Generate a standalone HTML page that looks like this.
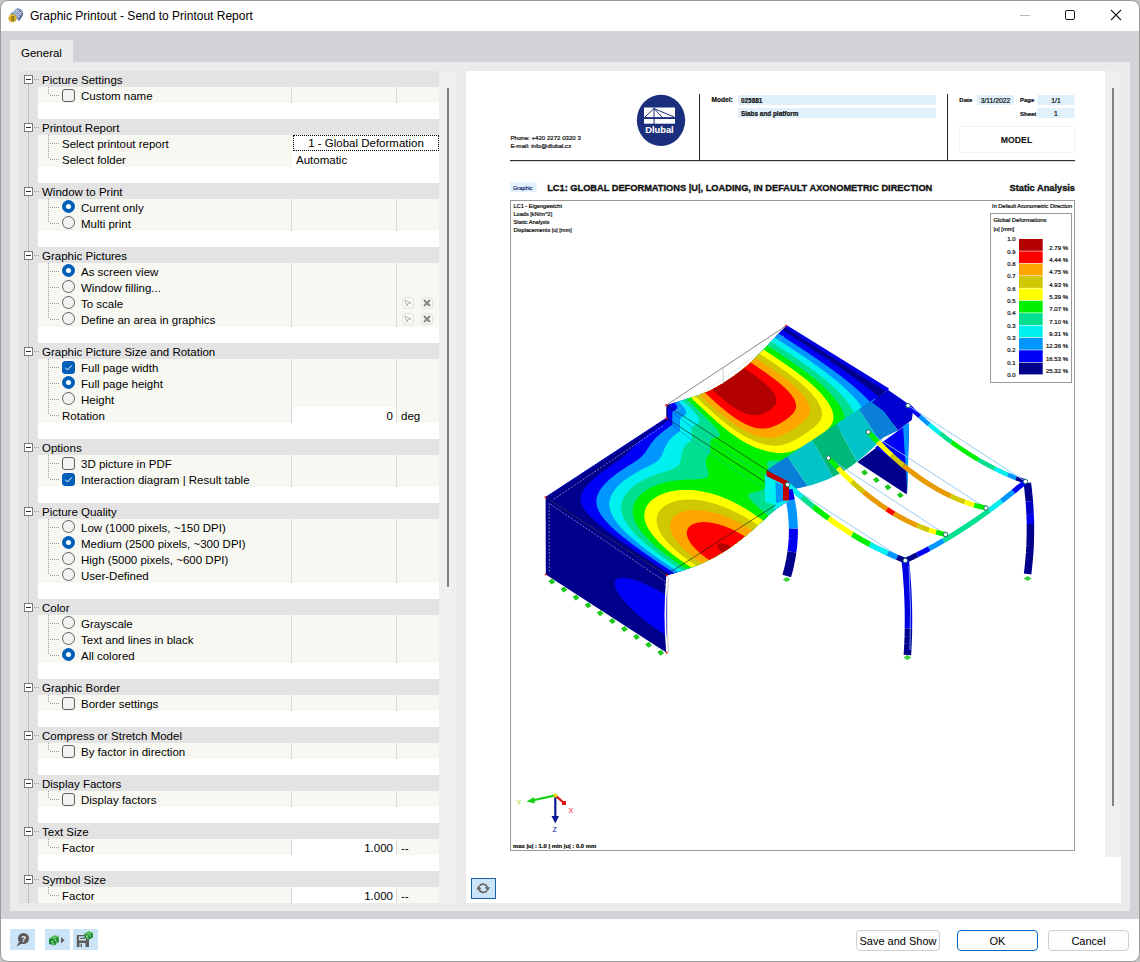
<!DOCTYPE html><html><head><meta charset="utf-8"><style>
*{box-sizing:border-box}
html,body{margin:0;padding:0}
body{width:1140px;height:962px;position:relative;overflow:hidden;background:#c4c4c4;font-family:"Liberation Sans", sans-serif;color:#000}
.a{position:absolute}
.t{position:absolute;white-space:pre;font-size:11.5px;line-height:16px}
.tt{padding-top:1px}
.dv{position:absolute;width:1px;background-image:linear-gradient(#a0a0a0 50%,transparent 50%);background-size:1px 2px}
.dh{position:absolute;height:1px;background-image:linear-gradient(90deg,#a0a0a0 50%,transparent 50%);background-size:2px 1px}
.box{position:absolute;width:9px;height:9px;border:1px solid #7a7a7a;background:#fff}
.box:after{content:"";position:absolute;left:1px;top:3px;width:5px;height:1px;background:#333}
.cb{position:absolute;width:13px;height:13px;border:1px solid #5e5e5e;border-radius:3px;background:#f3f3f3}
.cb.on{background:#005fb8;border-color:#005fb8}
.rd{position:absolute;width:13px;height:13px;border:1px solid #5e5e5e;border-radius:50%;background:#f3f3f3}
.rd.on{background:#005fb8;border-color:#005fb8}
.rd.on:after{content:"";position:absolute;left:3px;top:3px;width:5px;height:5px;border-radius:50%;background:#fff}
.doc{position:absolute;white-space:pre;line-height:1}
</style></head><body><div class="a" style="left:0;top:0;width:1140px;height:962px;border:1px solid #9c9c9c;border-radius:8px;background:#fff;overflow:hidden">
</div>
<div class="a" style="left:1px;top:31px;width:1138px;height:888px;background:#d2d2d7"></div>
<div class="a" style="left:10px;top:62px;width:1120px;height:849px;background:#ebebeb"></div>
<div class="a" style="left:10px;top:40px;width:63px;height:22px;background:#ebebeb"></div>
<div class="t" style="left:21px;top:45px;font-size:11.5px;line-height:16px">General</div>
<div class="t" style="left:30px;top:8px;font-size:12px;line-height:17px">Graphic Printout - Send to Printout Report</div>
<svg class="a" style="left:8px;top:7px" width="18" height="17" viewBox="0 0 18 17">
<path d="M2 7 L8 1.5 Q13 0.5 15 5 L10 13 Q8 9 2 7Z" fill="#7d8fb8"/>
<path d="M4 6 L9 2 M6 8 L11 3 M8 10 L13 5 M5 4 L12 11 M7 2.5 L13.5 8" stroke="#d8e4f8" stroke-width="0.8"/>
<path d="M15 5 Q16 8 11 14 L10 13Z" fill="#4a5c8a"/>
<circle cx="4.6" cy="11.3" r="3.8" fill="#e8c22c" stroke="#b8961a" stroke-width="0.6"/>
<text x="4.6" y="14" font-size="7" font-weight="bold" text-anchor="middle" fill="#6a5a10" font-family="Liberation Sans">6</text>
</svg>
<div class="a" style="left:1020px;top:15px;width:10px;height:1px;background:#b8b8b8"></div>
<div class="a" style="left:1065px;top:10px;width:10px;height:10px;border:1px solid #1a1a1a;border-radius:2px"></div>
<svg class="a" style="left:1110px;top:9px" width="12" height="12" viewBox="0 0 12 12"><path d="M1 1L11 11M11 1L1 11" stroke="#1a1a1a" stroke-width="1.1"/></svg>
<div class="a" style="left:19px;top:71px;width:420px;height:832px;overflow:hidden;background:#fff">
<div class="a" style="left:0;top:0;width:19px;height:832px;background:#e3e3e3"></div>
<div class="a" style="left:0;top:0px;width:420px;height:16px;background:#e3e3e3"></div>
<div class="t" style="left:23px;top:1px">Picture Settings</div>
<div class="a" style="left:19px;top:16px;width:401px;height:16px;background:#f8f8f3"></div>
<div class="cb" style="left:43px;top:18px"></div>
<div class="t" style="left:62px;top:17px">Custom name</div>
<div class="a" style="left:272px;top:16px;width:1px;height:16px;background:#d9d9d9"></div>
<div class="a" style="left:377px;top:16px;width:1px;height:16px;background:#d9d9d9"></div>
<div class="a" style="left:0;top:48px;width:420px;height:16px;background:#e3e3e3"></div>
<div class="t" style="left:23px;top:49px">Printout Report</div>
<div class="a" style="left:19px;top:64px;width:401px;height:16px;background:#f8f8f3"></div>
<div class="t" style="left:43px;top:65px">Select printout report</div>
<div class="a" style="left:273px;top:64px;width:147px;height:16px;background:#fff"></div>
<div class="a" style="left:274px;top:64px;width:146px;height:16px;border:1px dotted #000"></div>
<div class="t" style="left:274px;top:64px;width:146px;text-align:center">1 - Global Deformation</div>
<div class="a" style="left:19px;top:80px;width:401px;height:16px;background:#f8f8f3"></div>
<div class="t" style="left:43px;top:81px">Select folder</div>
<div class="a" style="left:273px;top:80px;width:147px;height:16px;background:#fff"></div>
<div class="t" style="left:277px;top:81px">Automatic</div>
<div class="a" style="left:0;top:112px;width:420px;height:16px;background:#e3e3e3"></div>
<div class="t" style="left:23px;top:113px">Window to Print</div>
<div class="a" style="left:19px;top:128px;width:401px;height:16px;background:#f8f8f3"></div>
<div class="rd on" style="left:43px;top:129px"></div>
<div class="t" style="left:62px;top:129px">Current only</div>
<div class="a" style="left:272px;top:128px;width:1px;height:16px;background:#d9d9d9"></div>
<div class="a" style="left:377px;top:128px;width:1px;height:16px;background:#d9d9d9"></div>
<div class="a" style="left:19px;top:144px;width:401px;height:16px;background:#f8f8f3"></div>
<div class="rd" style="left:43px;top:145px"></div>
<div class="t" style="left:62px;top:145px">Multi print</div>
<div class="a" style="left:272px;top:144px;width:1px;height:16px;background:#d9d9d9"></div>
<div class="a" style="left:377px;top:144px;width:1px;height:16px;background:#d9d9d9"></div>
<div class="a" style="left:0;top:176px;width:420px;height:16px;background:#e3e3e3"></div>
<div class="t" style="left:23px;top:177px">Graphic Pictures</div>
<div class="a" style="left:19px;top:192px;width:401px;height:16px;background:#f8f8f3"></div>
<div class="rd on" style="left:43px;top:193px"></div>
<div class="t" style="left:62px;top:193px">As screen view</div>
<div class="a" style="left:272px;top:192px;width:1px;height:16px;background:#d9d9d9"></div>
<div class="a" style="left:377px;top:192px;width:1px;height:16px;background:#d9d9d9"></div>
<div class="a" style="left:19px;top:208px;width:401px;height:16px;background:#f8f8f3"></div>
<div class="rd" style="left:43px;top:209px"></div>
<div class="t" style="left:62px;top:209px">Window filling...</div>
<div class="a" style="left:272px;top:208px;width:1px;height:16px;background:#d9d9d9"></div>
<div class="a" style="left:377px;top:208px;width:1px;height:16px;background:#d9d9d9"></div>
<div class="a" style="left:19px;top:224px;width:401px;height:16px;background:#f8f8f3"></div>
<div class="rd" style="left:43px;top:225px"></div>
<div class="t" style="left:62px;top:225px">To scale</div>
<div class="a" style="left:272px;top:224px;width:1px;height:16px;background:#d9d9d9"></div>
<div class="a" style="left:377px;top:224px;width:1px;height:16px;background:#d9d9d9"></div>
<div class="a" style="left:383px;top:226px;width:12px;height:12px;border:1px solid #e4e4e0;border-radius:3px"></div>
<svg class="a" style="left:384px;top:227px" width="10" height="10" viewBox="0 0 10 10"><path d="M2 2L8 5L5 5.5L4 8Z" fill="none" stroke="#a8a8a8" stroke-width="0.8"/></svg>
<div class="a" style="left:402px;top:226px;width:12px;height:12px;border:1px solid #e4e4e0;border-radius:3px"></div>
<svg class="a" style="left:403px;top:227px" width="10" height="10" viewBox="0 0 10 10"><path d="M2 2L8 8M8 2L2 8" stroke="#8a8a8a" stroke-width="2.2"/></svg>
<div class="a" style="left:19px;top:240px;width:401px;height:16px;background:#f8f8f3"></div>
<div class="rd" style="left:43px;top:241px"></div>
<div class="t" style="left:62px;top:241px">Define an area in graphics</div>
<div class="a" style="left:272px;top:240px;width:1px;height:16px;background:#d9d9d9"></div>
<div class="a" style="left:377px;top:240px;width:1px;height:16px;background:#d9d9d9"></div>
<div class="a" style="left:383px;top:242px;width:12px;height:12px;border:1px solid #e4e4e0;border-radius:3px"></div>
<svg class="a" style="left:384px;top:243px" width="10" height="10" viewBox="0 0 10 10"><path d="M2 2L8 5L5 5.5L4 8Z" fill="none" stroke="#a8a8a8" stroke-width="0.8"/></svg>
<div class="a" style="left:402px;top:242px;width:12px;height:12px;border:1px solid #e4e4e0;border-radius:3px"></div>
<svg class="a" style="left:403px;top:243px" width="10" height="10" viewBox="0 0 10 10"><path d="M2 2L8 8M8 2L2 8" stroke="#8a8a8a" stroke-width="2.2"/></svg>
<div class="a" style="left:0;top:272px;width:420px;height:16px;background:#e3e3e3"></div>
<div class="t" style="left:23px;top:273px">Graphic Picture Size and Rotation</div>
<div class="a" style="left:19px;top:288px;width:401px;height:16px;background:#f8f8f3"></div>
<div class="cb on" style="left:43px;top:290px"></div>
<svg class="a" style="left:43px;top:290px" width="13" height="13" viewBox="0 0 13 13"><path d="M3.3 6.8L5.5 9L9.8 4.4" fill="none" stroke="#fff" stroke-width="1"/></svg>
<div class="t" style="left:62px;top:289px">Full page width</div>
<div class="a" style="left:272px;top:288px;width:1px;height:16px;background:#d9d9d9"></div>
<div class="a" style="left:377px;top:288px;width:1px;height:16px;background:#d9d9d9"></div>
<div class="a" style="left:19px;top:304px;width:401px;height:16px;background:#f8f8f3"></div>
<div class="rd on" style="left:43px;top:305px"></div>
<div class="t" style="left:62px;top:305px">Full page height</div>
<div class="a" style="left:272px;top:304px;width:1px;height:16px;background:#d9d9d9"></div>
<div class="a" style="left:377px;top:304px;width:1px;height:16px;background:#d9d9d9"></div>
<div class="a" style="left:19px;top:320px;width:401px;height:16px;background:#f8f8f3"></div>
<div class="rd" style="left:43px;top:321px"></div>
<div class="t" style="left:62px;top:321px">Height</div>
<div class="a" style="left:272px;top:320px;width:1px;height:16px;background:#d9d9d9"></div>
<div class="a" style="left:377px;top:320px;width:1px;height:16px;background:#d9d9d9"></div>
<div class="a" style="left:19px;top:336px;width:401px;height:16px;background:#f8f8f3"></div>
<div class="t" style="left:43px;top:337px">Rotation</div>
<div class="a" style="left:272px;top:336px;width:1px;height:16px;background:#d9d9d9"></div>
<div class="a" style="left:377px;top:336px;width:1px;height:16px;background:#d9d9d9"></div>
<div class="a" style="left:273px;top:336px;width:104px;height:16px;background:#fff"></div>
<div class="t" style="left:273px;top:337px;width:101px;text-align:right">0</div>
<div class="t" style="left:382px;top:337px">deg</div>
<div class="a" style="left:0;top:368px;width:420px;height:16px;background:#e3e3e3"></div>
<div class="t" style="left:23px;top:369px">Options</div>
<div class="a" style="left:19px;top:384px;width:401px;height:16px;background:#f8f8f3"></div>
<div class="cb" style="left:43px;top:386px"></div>
<div class="t" style="left:62px;top:385px">3D picture in PDF</div>
<div class="a" style="left:272px;top:384px;width:1px;height:16px;background:#d9d9d9"></div>
<div class="a" style="left:377px;top:384px;width:1px;height:16px;background:#d9d9d9"></div>
<div class="a" style="left:19px;top:400px;width:401px;height:16px;background:#f8f8f3"></div>
<div class="cb on" style="left:43px;top:402px"></div>
<svg class="a" style="left:43px;top:402px" width="13" height="13" viewBox="0 0 13 13"><path d="M3.3 6.8L5.5 9L9.8 4.4" fill="none" stroke="#fff" stroke-width="1"/></svg>
<div class="t" style="left:62px;top:401px">Interaction diagram | Result table</div>
<div class="a" style="left:272px;top:400px;width:1px;height:16px;background:#d9d9d9"></div>
<div class="a" style="left:377px;top:400px;width:1px;height:16px;background:#d9d9d9"></div>
<div class="a" style="left:0;top:432px;width:420px;height:16px;background:#e3e3e3"></div>
<div class="t" style="left:23px;top:433px">Picture Quality</div>
<div class="a" style="left:19px;top:448px;width:401px;height:16px;background:#f8f8f3"></div>
<div class="rd" style="left:43px;top:449px"></div>
<div class="t" style="left:62px;top:449px">Low (1000 pixels, ~150 DPI)</div>
<div class="a" style="left:272px;top:448px;width:1px;height:16px;background:#d9d9d9"></div>
<div class="a" style="left:377px;top:448px;width:1px;height:16px;background:#d9d9d9"></div>
<div class="a" style="left:19px;top:464px;width:401px;height:16px;background:#f8f8f3"></div>
<div class="rd on" style="left:43px;top:465px"></div>
<div class="t" style="left:62px;top:465px">Medium (2500 pixels, ~300 DPI)</div>
<div class="a" style="left:272px;top:464px;width:1px;height:16px;background:#d9d9d9"></div>
<div class="a" style="left:377px;top:464px;width:1px;height:16px;background:#d9d9d9"></div>
<div class="a" style="left:19px;top:480px;width:401px;height:16px;background:#f8f8f3"></div>
<div class="rd" style="left:43px;top:481px"></div>
<div class="t" style="left:62px;top:481px">High (5000 pixels, ~600 DPI)</div>
<div class="a" style="left:272px;top:480px;width:1px;height:16px;background:#d9d9d9"></div>
<div class="a" style="left:377px;top:480px;width:1px;height:16px;background:#d9d9d9"></div>
<div class="a" style="left:19px;top:496px;width:401px;height:16px;background:#f8f8f3"></div>
<div class="rd" style="left:43px;top:497px"></div>
<div class="t" style="left:62px;top:497px">User-Defined</div>
<div class="a" style="left:272px;top:496px;width:1px;height:16px;background:#d9d9d9"></div>
<div class="a" style="left:377px;top:496px;width:1px;height:16px;background:#d9d9d9"></div>
<div class="a" style="left:0;top:528px;width:420px;height:16px;background:#e3e3e3"></div>
<div class="t" style="left:23px;top:529px">Color</div>
<div class="a" style="left:19px;top:544px;width:401px;height:16px;background:#f8f8f3"></div>
<div class="rd" style="left:43px;top:545px"></div>
<div class="t" style="left:62px;top:545px">Grayscale</div>
<div class="a" style="left:272px;top:544px;width:1px;height:16px;background:#d9d9d9"></div>
<div class="a" style="left:377px;top:544px;width:1px;height:16px;background:#d9d9d9"></div>
<div class="a" style="left:19px;top:560px;width:401px;height:16px;background:#f8f8f3"></div>
<div class="rd" style="left:43px;top:561px"></div>
<div class="t" style="left:62px;top:561px">Text and lines in black</div>
<div class="a" style="left:272px;top:560px;width:1px;height:16px;background:#d9d9d9"></div>
<div class="a" style="left:377px;top:560px;width:1px;height:16px;background:#d9d9d9"></div>
<div class="a" style="left:19px;top:576px;width:401px;height:16px;background:#f8f8f3"></div>
<div class="rd on" style="left:43px;top:577px"></div>
<div class="t" style="left:62px;top:577px">All colored</div>
<div class="a" style="left:272px;top:576px;width:1px;height:16px;background:#d9d9d9"></div>
<div class="a" style="left:377px;top:576px;width:1px;height:16px;background:#d9d9d9"></div>
<div class="a" style="left:0;top:608px;width:420px;height:16px;background:#e3e3e3"></div>
<div class="t" style="left:23px;top:609px">Graphic Border</div>
<div class="a" style="left:19px;top:624px;width:401px;height:16px;background:#f8f8f3"></div>
<div class="cb" style="left:43px;top:626px"></div>
<div class="t" style="left:62px;top:625px">Border settings</div>
<div class="a" style="left:272px;top:624px;width:1px;height:16px;background:#d9d9d9"></div>
<div class="a" style="left:377px;top:624px;width:1px;height:16px;background:#d9d9d9"></div>
<div class="a" style="left:0;top:656px;width:420px;height:16px;background:#e3e3e3"></div>
<div class="t" style="left:23px;top:657px">Compress or Stretch Model</div>
<div class="a" style="left:19px;top:672px;width:401px;height:16px;background:#f8f8f3"></div>
<div class="cb" style="left:43px;top:674px"></div>
<div class="t" style="left:62px;top:673px">By factor in direction</div>
<div class="a" style="left:272px;top:672px;width:1px;height:16px;background:#d9d9d9"></div>
<div class="a" style="left:377px;top:672px;width:1px;height:16px;background:#d9d9d9"></div>
<div class="a" style="left:0;top:704px;width:420px;height:16px;background:#e3e3e3"></div>
<div class="t" style="left:23px;top:705px">Display Factors</div>
<div class="a" style="left:19px;top:720px;width:401px;height:16px;background:#f8f8f3"></div>
<div class="cb" style="left:43px;top:722px"></div>
<div class="t" style="left:62px;top:721px">Display factors</div>
<div class="a" style="left:272px;top:720px;width:1px;height:16px;background:#d9d9d9"></div>
<div class="a" style="left:377px;top:720px;width:1px;height:16px;background:#d9d9d9"></div>
<div class="a" style="left:0;top:752px;width:420px;height:16px;background:#e3e3e3"></div>
<div class="t" style="left:23px;top:753px">Text Size</div>
<div class="a" style="left:19px;top:768px;width:401px;height:16px;background:#f8f8f3"></div>
<div class="t" style="left:43px;top:769px">Factor</div>
<div class="a" style="left:272px;top:768px;width:1px;height:16px;background:#d9d9d9"></div>
<div class="a" style="left:377px;top:768px;width:1px;height:16px;background:#d9d9d9"></div>
<div class="a" style="left:273px;top:768px;width:104px;height:16px;background:#fff"></div>
<div class="t" style="left:273px;top:769px;width:101px;text-align:right">1.000</div>
<div class="t" style="left:382px;top:769px">--</div>
<div class="a" style="left:0;top:800px;width:420px;height:16px;background:#e3e3e3"></div>
<div class="t" style="left:23px;top:801px">Symbol Size</div>
<div class="a" style="left:19px;top:816px;width:401px;height:16px;background:#f8f8f3"></div>
<div class="t" style="left:43px;top:817px">Factor</div>
<div class="a" style="left:272px;top:816px;width:1px;height:16px;background:#d9d9d9"></div>
<div class="a" style="left:377px;top:816px;width:1px;height:16px;background:#d9d9d9"></div>
<div class="a" style="left:273px;top:816px;width:104px;height:16px;background:#fff"></div>
<div class="t" style="left:273px;top:817px;width:101px;text-align:right">1.000</div>
<div class="t" style="left:382px;top:817px">--</div>
<div class="dv" style="left:9px;top:13px;height:819px"></div>
<div class="box" style="left:5px;top:4px"></div>
<div class="dh" style="left:15px;top:8px;width:6px"></div>
<div class="dv" style="left:29px;top:16px;height:8px"></div>
<div class="dh" style="left:31px;top:24px;width:9px"></div>
<div class="box" style="left:5px;top:52px"></div>
<div class="dh" style="left:15px;top:56px;width:6px"></div>
<div class="dv" style="left:29px;top:64px;height:24px"></div>
<div class="dh" style="left:31px;top:72px;width:9px"></div>
<div class="dh" style="left:31px;top:88px;width:9px"></div>
<div class="box" style="left:5px;top:116px"></div>
<div class="dh" style="left:15px;top:120px;width:6px"></div>
<div class="dv" style="left:29px;top:128px;height:24px"></div>
<div class="dh" style="left:31px;top:136px;width:9px"></div>
<div class="dh" style="left:31px;top:152px;width:9px"></div>
<div class="box" style="left:5px;top:180px"></div>
<div class="dh" style="left:15px;top:184px;width:6px"></div>
<div class="dv" style="left:29px;top:192px;height:56px"></div>
<div class="dh" style="left:31px;top:200px;width:9px"></div>
<div class="dh" style="left:31px;top:216px;width:9px"></div>
<div class="dh" style="left:31px;top:232px;width:9px"></div>
<div class="dh" style="left:31px;top:248px;width:9px"></div>
<div class="box" style="left:5px;top:276px"></div>
<div class="dh" style="left:15px;top:280px;width:6px"></div>
<div class="dv" style="left:29px;top:288px;height:56px"></div>
<div class="dh" style="left:31px;top:296px;width:9px"></div>
<div class="dh" style="left:31px;top:312px;width:9px"></div>
<div class="dh" style="left:31px;top:328px;width:9px"></div>
<div class="dh" style="left:31px;top:344px;width:9px"></div>
<div class="box" style="left:5px;top:372px"></div>
<div class="dh" style="left:15px;top:376px;width:6px"></div>
<div class="dv" style="left:29px;top:384px;height:24px"></div>
<div class="dh" style="left:31px;top:392px;width:9px"></div>
<div class="dh" style="left:31px;top:408px;width:9px"></div>
<div class="box" style="left:5px;top:436px"></div>
<div class="dh" style="left:15px;top:440px;width:6px"></div>
<div class="dv" style="left:29px;top:448px;height:56px"></div>
<div class="dh" style="left:31px;top:456px;width:9px"></div>
<div class="dh" style="left:31px;top:472px;width:9px"></div>
<div class="dh" style="left:31px;top:488px;width:9px"></div>
<div class="dh" style="left:31px;top:504px;width:9px"></div>
<div class="box" style="left:5px;top:532px"></div>
<div class="dh" style="left:15px;top:536px;width:6px"></div>
<div class="dv" style="left:29px;top:544px;height:40px"></div>
<div class="dh" style="left:31px;top:552px;width:9px"></div>
<div class="dh" style="left:31px;top:568px;width:9px"></div>
<div class="dh" style="left:31px;top:584px;width:9px"></div>
<div class="box" style="left:5px;top:612px"></div>
<div class="dh" style="left:15px;top:616px;width:6px"></div>
<div class="dv" style="left:29px;top:624px;height:8px"></div>
<div class="dh" style="left:31px;top:632px;width:9px"></div>
<div class="box" style="left:5px;top:660px"></div>
<div class="dh" style="left:15px;top:664px;width:6px"></div>
<div class="dv" style="left:29px;top:672px;height:8px"></div>
<div class="dh" style="left:31px;top:680px;width:9px"></div>
<div class="box" style="left:5px;top:708px"></div>
<div class="dh" style="left:15px;top:712px;width:6px"></div>
<div class="dv" style="left:29px;top:720px;height:8px"></div>
<div class="dh" style="left:31px;top:728px;width:9px"></div>
<div class="box" style="left:5px;top:756px"></div>
<div class="dh" style="left:15px;top:760px;width:6px"></div>
<div class="dv" style="left:29px;top:768px;height:8px"></div>
<div class="dh" style="left:31px;top:776px;width:9px"></div>
<div class="box" style="left:5px;top:804px"></div>
<div class="dh" style="left:15px;top:808px;width:6px"></div>
<div class="dv" style="left:29px;top:816px;height:8px"></div>
<div class="dh" style="left:31px;top:824px;width:9px"></div>
</div>
<div class="a" style="left:439px;top:71px;width:17px;height:832px;background:#f0f0f0"></div>
<div class="a" style="left:447px;top:88px;width:2px;height:499px;background:#828282"></div>
<div class="a" style="left:466px;top:71px;width:655px;height:832px;background:#fff"></div>
<div class="a" style="left:1105px;top:71px;width:16px;height:786px;background:#efefef"></div>
<div class="a" style="left:1112px;top:88px;width:2px;height:718px;background:#828282"></div>
<div class="a" style="left:471px;top:878px;width:25px;height:21px;background:#cce4f7;border:1px solid #1c5ea8"></div>
<svg class="a" style="left:476px;top:881px" width="15" height="15" viewBox="0 0 15 15"><path d="M3.6 4.6A4.6 4.6 0 0 1 11.4 6.4" fill="none" stroke="#666" stroke-width="1.7"/><path d="M8.9 6.2L14.2 6.2L11.6 10.2Z" fill="#666"/><path d="M10.8 9.8A4.6 4.6 0 0 1 2.8 7.8" fill="none" stroke="#666" stroke-width="1.7"/><path d="M0.2 8.3L5.4 8.3L2.8 4.3Z" fill="#666"/></svg>
<svg class="a" style="left:0;top:0" width="1140" height="962" viewBox="0 0 1140 962" font-family="Liberation Sans">
<text x="510.5" y="140" font-size="6.1" font-weight="400" fill="#111" stroke="#111" stroke-width="0.22" text-anchor="start" letter-spacing="0" >Phone: +420 2272 0320 3</text>
<text x="510.5" y="148.3" font-size="6.1" font-weight="400" fill="#111" stroke="#111" stroke-width="0.22" text-anchor="start" letter-spacing="0" >E-mail: info@dlubal.cz</text>
<ellipse cx="661" cy="120.3" rx="24.2" ry="25.6" fill="#1b2f7d"/>
<rect x="644" y="107.5" width="31" height="9.6" fill="#fff"/>
<rect x="644" y="119" width="31" height="4.7" fill="#fff"/>
<path d="M654 107.5V124M645 117L654 108.5L662 117M654 108.5L674 117" stroke="#1b2f7d" stroke-width="1" fill="none"/>
<text x="659.5" y="133.3" font-size="9.3" font-weight="700" fill="#fff" stroke="#fff" stroke-width="0.1" text-anchor="middle" letter-spacing="0" >Dlubal</text>
<rect x="699" y="94" width="1" height="66" fill="#222"/>
<rect x="947" y="94" width="1" height="66" fill="#222"/>
<rect x="510" y="160" width="565" height="1.2" fill="#333"/>
<text x="711.5" y="102.4" font-size="6.6" font-weight="700" fill="#111" stroke="#111" stroke-width="0.22" text-anchor="start" letter-spacing="0" >Model:</text>
<rect x="738" y="95" width="198" height="10" fill="#dff0fb"/>
<rect x="738" y="108" width="198" height="10" fill="#dff0fb"/>
<text x="741" y="102.6" font-size="6.4" font-weight="700" fill="#111" stroke="#111" stroke-width="0.22" text-anchor="start" letter-spacing="0" >025881</text>
<text x="741" y="115.6" font-size="6.4" font-weight="700" fill="#111" stroke="#111" stroke-width="0.22" text-anchor="start" letter-spacing="0" >Slabs and platform</text>
<text x="959.3" y="102.4" font-size="6.0" font-weight="700" fill="#111" stroke="#111" stroke-width="0.22" text-anchor="start" letter-spacing="0" >Date</text>
<rect x="977" y="95" width="37" height="10" fill="#dff0fb"/>
<text x="995.5" y="102.6" font-size="6.8" font-weight="400" fill="#111" stroke="#111" stroke-width="0.22" text-anchor="middle" letter-spacing="0" >3/11/2022</text>
<text x="1020" y="102.4" font-size="6.0" font-weight="700" fill="#111" stroke="#111" stroke-width="0.22" text-anchor="start" letter-spacing="0" >Page</text>
<rect x="1037.4" y="95" width="37" height="10" fill="#dff0fb"/>
<text x="1056" y="102.6" font-size="6.8" font-weight="400" fill="#111" stroke="#111" stroke-width="0.22" text-anchor="middle" letter-spacing="0" >1/1</text>
<text x="1020" y="115.6" font-size="6.0" font-weight="700" fill="#111" stroke="#111" stroke-width="0.22" text-anchor="start" letter-spacing="0" >Sheet</text>
<rect x="1037.4" y="108" width="37" height="10" fill="#dff0fb"/>
<text x="1056" y="115.6" font-size="6.8" font-weight="400" fill="#111" stroke="#111" stroke-width="0.22" text-anchor="middle" letter-spacing="0" >1</text>
<rect x="959.5" y="126.5" width="115" height="26" fill="none" stroke="#f0f5fa" stroke-width="1"/>
<text x="1016.5" y="143.2" font-size="8.7" font-weight="700" fill="#111" stroke="#111" stroke-width="0.1" text-anchor="middle" letter-spacing="0" >MODEL</text>
<rect x="510" y="182.5" width="26.5" height="9.5" fill="#e3f1fb"/>
<text x="513" y="189.6" font-size="5.6" font-weight="400" fill="#1b2f7d" stroke="#1b2f7d" stroke-width="0.22" text-anchor="start" letter-spacing="0" >Graphic</text>
<text x="547.2" y="191.3" font-size="9.25" font-weight="700" fill="#111" stroke="#111" stroke-width="0.1" text-anchor="start" letter-spacing="0" style="stroke-width:0.35">LC1: GLOBAL DEFORMATIONS |U|, LOADING, IN DEFAULT AXONOMETRIC DIRECTION</text>
<text x="1075" y="191.3" font-size="9.25" font-weight="700" fill="#111" stroke="#111" stroke-width="0.1" text-anchor="end" letter-spacing="0" style="stroke-width:0.35">Static Analysis</text>
<rect x="510.5" y="200.5" width="564" height="650" fill="none" stroke="#9a9a9a" stroke-width="1"/>
<text x="513.5" y="207.8" font-size="5.6" font-weight="400" fill="#111" stroke="#111" stroke-width="0.22" text-anchor="start" letter-spacing="0" >LC1 - Eigengewicht</text>
<text x="513.5" y="215.8" font-size="5.6" font-weight="400" fill="#111" stroke="#111" stroke-width="0.22" text-anchor="start" letter-spacing="0" >Loads [kN/m^2]</text>
<text x="513.5" y="223.8" font-size="5.6" font-weight="400" fill="#111" stroke="#111" stroke-width="0.22" text-anchor="start" letter-spacing="0" >Static Analysis</text>
<text x="513.5" y="231.8" font-size="5.6" font-weight="400" fill="#111" stroke="#111" stroke-width="0.22" text-anchor="start" letter-spacing="0" >Displacements |u| [mm]</text>
<text x="1072" y="208.3" font-size="5.6" font-weight="400" fill="#111" stroke="#111" stroke-width="0.22" text-anchor="end" letter-spacing="0" >In Default Axonometric Direction</text>
<rect x="990.5" y="213.5" width="81" height="169" fill="none" stroke="#9a9a9a" stroke-width="1"/>
<text x="993.5" y="222" font-size="5.8" font-weight="400" fill="#111" stroke="#111" stroke-width="0.22" text-anchor="start" letter-spacing="0" >Global Deformations</text>
<text x="993.5" y="230.5" font-size="5.8" font-weight="400" fill="#111" stroke="#111" stroke-width="0.22" text-anchor="start" letter-spacing="0" >|u| [mm]</text>
<rect x="1019" y="239.00" width="23.7" height="11.76" fill="#b30000"/>
<text x="1068" y="249.5818181818182" font-size="6.0" font-weight="400" fill="#111" stroke="#111" stroke-width="0.22" text-anchor="end" letter-spacing="0" >2.79 %</text>
<rect x="1019" y="251.36" width="23.7" height="11.76" fill="#ff0000"/>
<text x="1068" y="261.94545454545454" font-size="6.0" font-weight="400" fill="#111" stroke="#111" stroke-width="0.22" text-anchor="end" letter-spacing="0" >4.44 %</text>
<rect x="1019" y="263.73" width="23.7" height="11.76" fill="#ffa500"/>
<text x="1068" y="274.3090909090909" font-size="6.0" font-weight="400" fill="#111" stroke="#111" stroke-width="0.22" text-anchor="end" letter-spacing="0" >4.75 %</text>
<rect x="1019" y="276.09" width="23.7" height="11.76" fill="#d0c800"/>
<text x="1068" y="286.6727272727273" font-size="6.0" font-weight="400" fill="#111" stroke="#111" stroke-width="0.22" text-anchor="end" letter-spacing="0" >4.93 %</text>
<rect x="1019" y="288.45" width="23.7" height="11.76" fill="#ffff00"/>
<text x="1068" y="299.0363636363636" font-size="6.0" font-weight="400" fill="#111" stroke="#111" stroke-width="0.22" text-anchor="end" letter-spacing="0" >5.39 %</text>
<rect x="1019" y="300.82" width="23.7" height="11.76" fill="#00f000"/>
<text x="1068" y="311.4" font-size="6.0" font-weight="400" fill="#111" stroke="#111" stroke-width="0.22" text-anchor="end" letter-spacing="0" >7.07 %</text>
<rect x="1019" y="313.18" width="23.7" height="11.76" fill="#00e090"/>
<text x="1068" y="323.76363636363635" font-size="6.0" font-weight="400" fill="#111" stroke="#111" stroke-width="0.22" text-anchor="end" letter-spacing="0" >7.10 %</text>
<rect x="1019" y="325.55" width="23.7" height="11.76" fill="#00f0f0"/>
<text x="1068" y="336.1272727272727" font-size="6.0" font-weight="400" fill="#111" stroke="#111" stroke-width="0.22" text-anchor="end" letter-spacing="0" >9.31 %</text>
<rect x="1019" y="337.91" width="23.7" height="11.76" fill="#0096ff"/>
<text x="1068" y="348.49090909090904" font-size="6.0" font-weight="400" fill="#111" stroke="#111" stroke-width="0.22" text-anchor="end" letter-spacing="0" >12.36 %</text>
<rect x="1019" y="350.27" width="23.7" height="11.76" fill="#0000f5"/>
<text x="1068" y="360.8545454545454" font-size="6.0" font-weight="400" fill="#111" stroke="#111" stroke-width="0.22" text-anchor="end" letter-spacing="0" >16.53 %</text>
<rect x="1019" y="362.64" width="23.7" height="11.76" fill="#00008c"/>
<text x="1068" y="373.2181818181818" font-size="6.0" font-weight="400" fill="#111" stroke="#111" stroke-width="0.22" text-anchor="end" letter-spacing="0" >25.32 %</text>
<text x="1015.5" y="241.2" font-size="5.9" font-weight="400" fill="#111" stroke="#111" stroke-width="0.22" text-anchor="end" letter-spacing="0" >1.0</text>
<text x="1015.5" y="253.56363636363636" font-size="5.9" font-weight="400" fill="#111" stroke="#111" stroke-width="0.22" text-anchor="end" letter-spacing="0" >0.9</text>
<text x="1015.5" y="265.92727272727274" font-size="5.9" font-weight="400" fill="#111" stroke="#111" stroke-width="0.22" text-anchor="end" letter-spacing="0" >0.8</text>
<text x="1015.5" y="278.2909090909091" font-size="5.9" font-weight="400" fill="#111" stroke="#111" stroke-width="0.22" text-anchor="end" letter-spacing="0" >0.7</text>
<text x="1015.5" y="290.6545454545454" font-size="5.9" font-weight="400" fill="#111" stroke="#111" stroke-width="0.22" text-anchor="end" letter-spacing="0" >0.6</text>
<text x="1015.5" y="303.0181818181818" font-size="5.9" font-weight="400" fill="#111" stroke="#111" stroke-width="0.22" text-anchor="end" letter-spacing="0" >0.5</text>
<text x="1015.5" y="315.3818181818182" font-size="5.9" font-weight="400" fill="#111" stroke="#111" stroke-width="0.22" text-anchor="end" letter-spacing="0" >0.4</text>
<text x="1015.5" y="327.74545454545455" font-size="5.9" font-weight="400" fill="#111" stroke="#111" stroke-width="0.22" text-anchor="end" letter-spacing="0" >0.3</text>
<text x="1015.5" y="340.10909090909087" font-size="5.9" font-weight="400" fill="#111" stroke="#111" stroke-width="0.22" text-anchor="end" letter-spacing="0" >0.3</text>
<text x="1015.5" y="352.47272727272724" font-size="5.9" font-weight="400" fill="#111" stroke="#111" stroke-width="0.22" text-anchor="end" letter-spacing="0" >0.2</text>
<text x="1015.5" y="364.8363636363636" font-size="5.9" font-weight="400" fill="#111" stroke="#111" stroke-width="0.22" text-anchor="end" letter-spacing="0" >0.1</text>
<text x="1015.5" y="377.2" font-size="5.9" font-weight="400" fill="#111" stroke="#111" stroke-width="0.22" text-anchor="end" letter-spacing="0" >0.0</text>
<path d="M555.3 795.4L532 800.5" stroke="#16d016" stroke-width="2.2"/><path d="M526.5 801.5L534 797L535 803.5Z" fill="#16d016"/>
<path d="M555.3 795.4L564 803" stroke="#e01010" stroke-width="2.2"/><rect x="562" y="801" width="4" height="4" fill="#e01010"/>
<path d="M555.3 795.4V817" stroke="#0a1a90" stroke-width="2.2"/><path d="M551.5 816L559 816L555.3 823.5Z" fill="#0a1a90"/>
<circle cx="555.3" cy="795.4" r="2" fill="#e8d800"/>
<text x="516.5" y="804.5" font-size="7" font-weight="400" fill="#b8d820" stroke="#b8d820" stroke-width="0.1" text-anchor="start" letter-spacing="0" >Y</text>
<text x="568.5" y="812.5" font-size="7" font-weight="400" fill="#ff3050" stroke="#ff3050" stroke-width="0.1" text-anchor="start" letter-spacing="0" >X</text>
<text x="552.5" y="832" font-size="7" font-weight="400" fill="#0a1a90" stroke="#0a1a90" stroke-width="0.1" text-anchor="start" letter-spacing="0" >Z</text>
<text x="513" y="847.5" font-size="5.9" font-weight="700" fill="#111" stroke="#111" stroke-width="0.22" text-anchor="start" letter-spacing="0" >max |u| : 1.0 | min |u| : 0.0 mm</text>
<path d="M666.3 405.2 L667.3 404.9 L668.3 404.6 L669.3 404.3 L670.3 404.0 L671.3 403.7 L672.3 403.4 L673.3 403.1 L674.3 402.8 L675.3 402.5 L676.3 402.2 L677.3 401.9 L678.3 401.5 L679.3 401.2 L680.3 400.9 L681.3 400.6 L682.3 400.3 L683.3 400.0 L684.3 399.7 L685.3 399.4 L686.3 399.1 L687.3 398.8 L688.3 398.5 L689.3 398.2 L690.3 397.8 L691.3 397.5 L692.3 397.2 L693.3 396.9 L694.3 396.5 L695.3 396.2 L696.2 395.9 L697.2 395.5 L698.2 395.2 L699.2 394.8 L700.2 394.5 L701.2 394.1 L702.2 393.7 L703.2 393.4 L704.2 393.0 L705.2 392.6 L706.2 392.2 L707.2 391.7 L708.2 391.3 L709.2 390.8 L710.2 390.4 L711.2 389.9 L712.2 389.4 L713.2 388.9 L714.2 388.3 L715.2 387.8 L716.2 387.2 L717.2 386.7 L718.2 386.1 L719.2 385.5 L720.2 384.9 L721.2 384.3 L722.2 383.7 L723.2 383.1 L724.2 382.4 L725.2 381.8 L726.2 381.2 L727.2 380.5 L728.2 379.8 L729.2 379.2 L730.2 378.5 L731.2 377.8 L732.2 377.2 L733.2 376.5 L734.2 375.8 L735.2 375.1 L736.2 374.3 L737.2 373.6 L738.2 372.9 L739.2 372.1 L740.2 371.4 L741.2 370.6 L742.2 369.8 L743.2 369.0 L744.2 368.1 L745.2 367.3 L746.2 366.4 L747.2 365.6 L748.2 364.7 L749.2 363.8 L750.2 362.8 L751.2 361.9 L752.2 360.9 L753.2 360.0 L754.2 359.0 L755.2 358.0 L756.1 357.0 L757.1 356.0 L758.1 355.0 L759.1 354.0 L760.1 353.0 L761.1 351.9 L762.1 350.9 L763.1 349.9 L764.1 348.9 L765.1 347.8 L766.1 346.8 L767.1 345.7 L768.1 344.7 L769.1 343.6 L770.1 342.6 L771.1 341.5 L772.1 340.5 L773.1 339.5 L774.1 338.4 L775.1 337.4 L776.1 336.3 L777.1 335.3 L778.1 334.2 L779.1 333.2 L780.1 332.1 L781.1 331.1 L782.1 330.0 L783.1 329.0 L784.1 327.9 L785.1 326.8 L786.1 325.8 L786.1 325.8 L787.4 326.6 L788.6 327.4 L789.9 328.2 L791.1 329.0 L792.4 329.9 L793.6 330.7 L794.9 331.5 L796.2 332.3 L797.4 333.1 L798.7 333.9 L799.9 334.7 L801.2 335.5 L802.4 336.3 L803.7 337.2 L804.9 338.0 L806.2 338.8 L807.5 339.6 L808.7 340.4 L810.0 341.2 L811.2 342.0 L812.5 342.8 L813.7 343.6 L815.0 344.5 L816.3 345.3 L817.5 346.1 L818.8 346.9 L820.0 347.7 L821.3 348.5 L822.5 349.3 L823.8 350.1 L825.0 351.0 L826.3 351.8 L827.6 352.6 L828.8 353.4 L830.1 354.2 L831.3 355.0 L832.6 355.8 L833.8 356.6 L835.1 357.4 L836.4 358.3 L837.6 359.1 L838.9 359.9 L840.1 360.7 L841.4 361.5 L842.6 362.3 L843.9 363.1 L845.2 363.9 L846.4 364.7 L847.7 365.6 L848.9 366.4 L850.2 367.2 L851.4 368.0 L852.7 368.8 L853.9 369.6 L855.2 370.4 L856.5 371.2 L857.7 372.0 L859.0 372.9 L860.2 373.7 L861.5 374.5 L862.7 375.3 L864.0 376.1 L865.3 376.9 L866.5 377.7 L867.8 378.5 L869.0 379.3 L870.3 380.2 L871.5 381.0 L872.8 381.8 L874.0 382.6 L875.3 383.4 L876.6 384.2 L877.8 385.0 L879.1 385.8 L880.3 386.6 L881.6 387.5 L882.8 388.3 L884.1 389.1 L885.4 389.9 L886.6 390.7 L886.6 390.7 L885.6 391.6 L884.6 392.4 L883.6 393.3 L882.6 394.1 L881.6 395.0 L880.6 395.8 L879.6 396.7 L878.6 397.5 L877.6 398.4 L876.6 399.2 L875.6 400.1 L874.6 400.9 L873.6 401.8 L872.6 402.6 L871.6 403.5 L870.6 404.4 L869.6 405.2 L868.6 406.1 L867.6 406.9 L866.6 407.8 L865.6 408.6 L864.6 409.4 L863.7 410.3 L862.7 411.1 L861.7 412.0 L860.7 412.8 L859.7 413.7 L858.7 414.5 L857.7 415.3 L856.7 416.2 L855.7 417.0 L854.7 417.8 L853.7 418.6 L852.7 419.4 L851.7 420.2 L850.7 421.0 L849.7 421.8 L848.7 422.6 L847.7 423.4 L846.7 424.2 L845.7 424.9 L844.7 425.7 L843.7 426.4 L842.7 427.1 L841.7 427.9 L840.7 428.6 L839.7 429.3 L838.7 430.0 L837.7 430.7 L836.7 431.4 L835.7 432.1 L834.7 432.8 L833.7 433.5 L832.7 434.2 L831.7 434.8 L830.7 435.5 L829.7 436.2 L828.7 436.9 L827.7 437.5 L826.7 438.2 L825.7 438.9 L824.7 439.5 L823.7 440.2 L822.7 440.9 L821.7 441.5 L820.7 442.2 L819.7 442.9 L818.7 443.5 L817.7 444.2 L816.7 444.8 L815.7 445.5 L814.7 446.2 L813.7 446.8 L812.7 447.5 L811.7 448.1 L810.7 448.8 L809.7 449.4 L808.7 450.1 L807.7 450.7 L806.7 451.4 L805.7 452.0 L804.7 452.7 L803.8 453.3 L802.8 454.0 L801.8 454.6 L800.8 455.2 L799.8 455.9 L798.8 456.5 L797.8 457.1 L796.8 457.7 L795.8 458.3 L794.8 458.9 L793.8 459.5 L792.8 460.1 L791.8 460.7 L790.8 461.3 L789.8 461.9 L788.8 462.4 L787.8 463.0 L786.8 463.6 L785.8 464.2 L784.8 464.8 L783.8 465.4 L782.8 466.0 L781.8 466.7 L780.8 467.4 L779.8 468.0 L778.8 468.7 L777.8 469.5 L776.8 470.2 L775.8 470.9 L774.8 471.7 L773.8 472.4 L772.8 473.2 L771.8 473.9 L770.8 474.6 L769.8 475.3 L768.8 476.0 L767.8 476.7 L766.8 477.4 L766.8 477.4 L765.6 476.6 L764.3 475.9 L763.0 475.1 L761.8 474.4 L760.5 473.6 L759.3 472.9 L758.0 472.1 L756.8 471.4 L755.5 470.6 L754.2 469.8 L753.0 469.1 L751.7 468.3 L750.5 467.5 L749.2 466.7 L748.0 465.9 L746.7 465.2 L745.5 464.4 L744.2 463.6 L742.9 462.8 L741.7 462.0 L740.4 461.2 L739.2 460.4 L737.9 459.5 L736.7 458.7 L735.4 457.9 L734.1 457.1 L732.9 456.3 L731.6 455.4 L730.4 454.6 L729.1 453.8 L727.9 452.9 L726.6 452.1 L725.4 451.3 L724.1 450.4 L722.8 449.6 L721.6 448.7 L720.3 447.9 L719.1 447.0 L717.8 446.1 L716.6 445.3 L715.3 444.4 L714.0 443.5 L712.8 442.7 L711.5 441.8 L710.3 440.9 L709.0 440.0 L707.8 439.1 L706.5 438.2 L705.2 437.3 L704.0 436.4 L702.7 435.5 L701.5 434.6 L700.2 433.7 L699.0 432.8 L697.7 431.9 L696.5 431.0 L695.2 430.0 L693.9 429.1 L692.7 428.2 L691.4 427.2 L690.2 426.3 L688.9 425.3 L687.7 424.4 L686.4 423.4 L685.1 422.5 L683.9 421.5 L682.6 420.5 L681.4 419.5 L680.1 418.5 L678.9 417.5 L677.6 416.5 L676.4 415.4 L675.1 414.4 L673.8 413.3 L672.6 412.2 L671.3 411.1 L670.1 409.9 L668.8 408.7 L667.6 407.3 L666.3 405.2Z" fill="#00008c" />
<path d="M670.5 405.4L670.4 404.1L670.4 404.0L671.3 403.7L672.3 403.4L673.3 403.1L674.3 402.8L675.3 402.5L676.3 402.2L677.3 401.9L678.3 401.5L679.3 401.2L680.3 400.9L681.3 400.6L682.3 400.3L683.3 400.0L684.3 399.7L685.3 399.4L686.3 399.1L687.3 398.8L688.3 398.5L689.3 398.2L690.3 397.8L691.3 397.5L692.3 397.2L693.3 396.9L694.3 396.5L695.3 396.2L696.2 395.9L697.2 395.5L698.2 395.2L699.2 394.8L700.2 394.5L701.2 394.1L702.2 393.7L703.2 393.4L704.2 393.0L705.2 392.6L706.2 392.2L707.2 391.7L708.2 391.3L709.2 390.8L710.2 390.4L711.2 389.9L712.2 389.4L713.2 388.9L714.2 388.3L715.2 387.8L716.2 387.2L717.2 386.7L718.2 386.1L719.2 385.5L720.2 384.9L721.2 384.3L722.2 383.7L723.2 383.1L724.2 382.4L725.2 381.8L726.2 381.2L727.2 380.5L728.2 379.8L729.2 379.2L730.2 378.5L731.2 377.8L732.2 377.2L733.2 376.5L734.2 375.8L735.2 375.1L736.2 374.3L737.2 373.6L738.2 372.9L739.2 372.1L740.2 371.4L741.2 370.6L742.2 369.8L743.2 369.0L744.2 368.1L745.2 367.3L746.2 366.4L747.2 365.6L748.2 364.7L749.2 363.8L750.2 362.8L751.2 361.9L752.2 360.9L753.2 360.0L754.2 359.0L755.2 358.0L756.1 357.0L757.1 356.0L758.1 355.0L759.1 354.0L760.1 353.0L761.1 351.9L762.1 350.9L763.1 349.9L764.1 348.9L765.1 347.8L766.1 346.8L767.1 345.7L768.1 344.7L769.1 343.6L770.1 342.6L771.1 341.5L772.1 340.5L773.1 339.5L774.1 338.4L775.1 337.4L776.1 336.3L777.1 335.3L778.1 334.2L779.1 333.2L780.1 332.1L781.1 331.1L782.1 330.0L782.4 329.7L783.6 330.5L784.9 331.4L786.1 332.2L787.4 333.0L788.6 333.8L789.9 334.6L791.1 335.4L792.4 336.2L793.7 337.0L794.9 337.9L796.2 338.7L797.4 339.5L798.7 340.3L799.9 341.1L801.2 341.9L802.4 342.7L803.7 343.6L804.9 344.4L806.2 345.2L807.4 346.0L808.7 346.8L809.9 347.6L811.2 348.5L812.4 349.3L813.6 350.1L814.9 350.9L816.1 351.7L817.4 352.6L818.6 353.4L819.9 354.2L821.1 355.0L822.3 355.8L823.6 356.7L823.9 356.9L824.8 357.5L826.0 358.3L827.3 359.1L828.5 360.0L829.7 360.8L831.0 361.6L832.2 362.5L833.4 363.3L834.6 364.1L835.9 365.0L837.1 365.8L838.3 366.6L839.5 367.5L840.7 368.3L841.9 369.2L843.2 370.0L844.4 370.8L845.6 371.7L846.8 372.5L848.0 373.4L849.2 374.2L850.4 375.1L851.6 375.9L852.8 376.8L853.3 377.2L853.9 377.6L855.1 378.5L856.3 379.4L857.5 380.2L858.7 381.1L859.8 382.0L861.0 382.8L862.2 383.7L863.3 384.6L864.5 385.5L865.6 386.3L866.6 387.1L866.8 387.2L867.9 388.1L869.1 389.0L870.2 389.9L871.3 390.8L872.5 391.7L873.6 392.6L874.7 393.5L875.2 394.0L875.8 394.4L876.9 395.3L878.0 396.3L879.0 397.2L878.6 397.5L877.6 398.4L876.6 399.2L875.6 400.1L874.6 400.9L873.6 401.8L872.6 402.6L871.6 403.5L870.6 404.4L869.6 405.2L868.6 406.1L867.6 406.9L866.6 407.8L865.6 408.6L864.6 409.4L863.7 410.3L862.7 411.1L861.7 412.0L860.7 412.8L859.7 413.7L858.7 414.5L857.7 415.3L856.7 416.2L855.7 417.0L854.7 417.8L853.7 418.6L852.7 419.4L851.7 420.2L850.7 421.0L849.7 421.8L848.7 422.6L847.7 423.4L846.7 424.2L845.7 424.9L844.7 425.7L843.7 426.4L842.7 427.1L841.7 427.9L840.7 428.6L839.7 429.3L838.7 430.0L837.7 430.7L836.7 431.4L835.7 432.1L834.7 432.8L833.7 433.5L832.7 434.2L831.7 434.8L830.7 435.5L829.7 436.2L828.7 436.9L827.7 437.5L826.7 438.2L825.7 438.9L824.7 439.5L823.7 440.2L822.7 440.9L821.7 441.5L820.7 442.2L819.7 442.9L818.7 443.5L817.7 444.2L816.7 444.8L815.7 445.5L814.7 446.2L813.7 446.8L812.7 447.5L811.7 448.1L810.7 448.8L809.7 449.4L808.7 450.1L807.7 450.7L806.7 451.4L805.7 452.0L804.7 452.7L803.8 453.3L802.8 454.0L801.8 454.6L800.8 455.2L799.8 455.9L798.8 456.5L797.8 457.1L796.8 457.7L795.8 458.3L794.8 458.9L793.8 459.5L792.8 460.1L791.8 460.7L790.8 461.3L789.8 461.9L788.8 462.4L787.8 463.0L786.8 463.6L785.8 464.2L784.8 464.8L783.8 465.4L782.8 466.0L781.8 466.7L780.8 467.4L779.8 468.0L778.8 468.7L777.8 469.5L776.8 470.2L775.8 470.9L774.8 471.7L773.8 472.4L772.8 473.2L771.8 473.9L770.8 474.6L769.8 475.3L768.8 476.0L767.8 476.7L766.8 477.4L765.6 476.6L764.3 475.9L763.0 475.1L761.8 474.4L760.5 473.6L759.3 472.9L758.0 472.1L756.8 471.4L755.5 470.6L754.2 469.8L753.0 469.1L751.7 468.3L750.5 467.5L749.2 466.7L748.0 465.9L746.7 465.2L745.5 464.4L744.2 463.6L742.9 462.8L741.7 462.0L740.4 461.2L739.2 460.4L737.9 459.5L736.7 458.7L735.4 457.9L734.1 457.1L732.9 456.3L731.6 455.4L730.4 454.6L729.1 453.8L727.9 452.9L726.6 452.1L725.4 451.3L724.1 450.4L722.8 449.6L721.6 448.7L720.3 447.9L719.1 447.0L717.8 446.1L716.6 445.3L715.3 444.4L714.0 443.5L712.8 442.7L711.5 441.8L710.3 440.9L709.0 440.0L707.8 439.1L706.5 438.2L705.2 437.3L704.0 436.4L702.7 435.5L701.5 434.6L700.2 433.7L699.0 432.8L697.7 431.9L696.5 431.0L695.2 430.0L693.9 429.1L692.7 428.2L691.4 427.2L690.2 426.3L688.9 425.3L687.7 424.4L686.4 423.4L685.1 422.5L683.9 421.5L682.6 420.5L681.4 419.5L680.1 418.5L678.9 417.5L677.6 416.5L676.4 415.4L675.1 414.4L673.8 413.3L672.6 412.2L671.3 411.1L670.1 409.9L668.8 408.7L667.8 407.7L668.8 407.0L669.8 406.3L670.3 405.6Z" fill="#0000f5" fill-rule="evenodd"/>
<path d="M674.9 403.2L674.4 402.7L675.3 402.5L676.3 402.2L677.3 401.9L678.3 401.5L679.3 401.2L680.3 400.9L681.3 400.6L682.3 400.3L683.3 400.0L684.3 399.7L685.3 399.4L686.3 399.1L687.3 398.8L688.3 398.5L689.3 398.2L690.3 397.8L691.3 397.5L692.3 397.2L693.3 396.9L694.3 396.5L695.3 396.2L696.2 395.9L697.2 395.5L698.2 395.2L699.2 394.8L700.2 394.5L701.2 394.1L702.2 393.7L703.2 393.4L704.2 393.0L705.2 392.6L706.2 392.2L707.2 391.7L708.2 391.3L709.2 390.8L710.2 390.4L711.2 389.9L712.2 389.4L713.2 388.9L714.2 388.3L715.2 387.8L716.2 387.2L717.2 386.7L718.2 386.1L719.2 385.5L720.2 384.9L721.2 384.3L722.2 383.7L723.2 383.1L724.2 382.4L725.2 381.8L726.2 381.2L727.2 380.5L728.2 379.8L729.2 379.2L730.2 378.5L731.2 377.8L732.2 377.2L733.2 376.5L734.2 375.8L735.2 375.1L736.2 374.3L737.2 373.6L738.2 372.9L739.2 372.1L740.2 371.4L741.2 370.6L742.2 369.8L743.2 369.0L744.2 368.1L745.2 367.3L746.2 366.4L747.2 365.6L748.2 364.7L749.2 363.8L750.2 362.8L751.2 361.9L752.2 360.9L753.2 360.0L754.2 359.0L755.2 358.0L756.1 357.0L757.1 356.0L758.1 355.0L759.1 354.0L760.1 353.0L761.1 351.9L762.1 350.9L763.1 349.9L764.1 348.9L765.1 347.8L766.1 346.8L767.1 345.7L768.1 344.7L769.1 343.6L770.1 342.6L771.1 341.5L772.1 340.5L773.1 339.5L774.1 338.4L775.1 337.4L776.1 336.3L777.1 335.3L778.1 334.2L778.6 333.7L779.9 334.5L781.1 335.3L782.4 336.1L783.6 336.9L784.9 337.7L786.1 338.5L787.4 339.4L788.7 340.2L789.9 341.0L791.1 341.8L792.4 342.6L793.6 343.4L794.9 344.3L796.1 345.1L797.4 345.9L798.6 346.7L799.9 347.5L801.1 348.3L802.4 349.2L803.6 350.0L804.8 350.8L806.1 351.6L807.3 352.5L808.5 353.3L809.8 354.1L811.0 354.9L812.2 355.8L813.5 356.6L814.7 357.4L815.9 358.3L817.1 359.1L818.4 359.9L819.6 360.8L819.9 361.0L820.8 361.6L822.0 362.4L823.2 363.3L824.4 364.1L825.6 365.0L826.8 365.8L828.0 366.7L829.2 367.5L830.4 368.4L831.6 369.2L832.8 370.1L834.0 371.0L835.1 371.8L836.3 372.7L837.5 373.6L838.2 374.1L838.6 374.4L839.8 375.3L841.0 376.2L842.1 377.1L843.3 378.0L844.4 378.9L845.5 379.7L846.7 380.6L847.8 381.5L848.2 381.9L848.9 382.4L850.0 383.3L851.1 384.3L852.2 385.2L853.3 386.1L854.4 387.0L855.2 387.7L855.5 387.9L856.6 388.9L857.6 389.8L858.7 390.8L859.7 391.7L860.6 392.5L860.8 392.7L861.8 393.6L862.8 394.6L863.8 395.6L864.8 396.5L864.8 396.5L865.8 397.5L866.8 398.5L867.7 399.5L868.2 400.0L868.7 400.6L869.6 401.6L870.5 402.6L870.9 403.1L871.4 403.7L870.6 404.4L869.6 405.2L868.6 406.1L867.6 406.9L866.6 407.8L865.6 408.6L864.6 409.4L863.7 410.3L862.7 411.1L861.7 412.0L860.7 412.8L859.7 413.7L858.7 414.5L857.7 415.3L856.7 416.2L855.7 417.0L854.7 417.8L853.7 418.6L852.7 419.4L851.7 420.2L850.7 421.0L849.7 421.8L848.7 422.6L847.7 423.4L846.7 424.2L845.7 424.9L844.7 425.7L843.7 426.4L842.7 427.1L841.7 427.9L840.7 428.6L839.7 429.3L838.7 430.0L837.7 430.7L836.7 431.4L835.7 432.1L834.7 432.8L833.7 433.5L832.7 434.2L831.7 434.8L830.7 435.5L829.7 436.2L828.7 436.9L827.7 437.5L826.7 438.2L825.7 438.9L824.7 439.5L823.7 440.2L822.7 440.9L821.7 441.5L820.7 442.2L819.7 442.9L818.7 443.5L817.7 444.2L816.7 444.8L815.7 445.5L814.7 446.2L813.7 446.8L812.7 447.5L811.7 448.1L810.7 448.8L809.7 449.4L808.7 450.1L807.7 450.7L806.7 451.4L805.7 452.0L804.7 452.7L803.8 453.3L802.8 454.0L801.8 454.6L800.8 455.2L799.8 455.9L798.8 456.5L797.8 457.1L796.8 457.7L795.8 458.3L794.8 458.9L793.8 459.5L792.8 460.1L791.8 460.7L790.8 461.3L789.8 461.9L788.8 462.4L787.8 463.0L786.8 463.6L785.8 464.2L784.8 464.8L783.8 465.4L782.8 466.0L781.8 466.7L780.8 467.4L779.8 468.0L778.8 468.7L777.8 469.5L776.8 470.2L775.8 470.9L774.8 471.7L773.8 472.4L772.8 473.2L771.8 473.9L770.8 474.6L769.8 475.3L768.8 476.0L767.8 476.7L766.8 477.4L765.6 476.6L764.3 475.9L763.0 475.1L761.8 474.4L760.5 473.6L759.3 472.9L758.0 472.1L756.8 471.4L755.5 470.6L754.2 469.8L753.0 469.1L751.7 468.3L750.5 467.5L749.2 466.7L748.0 465.9L746.7 465.2L745.5 464.4L744.2 463.6L742.9 462.8L741.7 462.0L740.4 461.2L739.2 460.4L737.9 459.5L736.7 458.7L735.4 457.9L734.1 457.1L732.9 456.3L731.6 455.4L730.4 454.6L729.1 453.8L727.9 452.9L726.6 452.1L725.4 451.3L724.1 450.4L722.8 449.6L721.6 448.7L720.3 447.9L719.1 447.0L717.8 446.1L716.6 445.3L715.3 444.4L714.0 443.5L712.8 442.7L711.5 441.8L710.3 440.9L709.0 440.0L707.8 439.1L706.5 438.2L705.2 437.3L704.0 436.4L702.7 435.5L701.5 434.6L700.2 433.7L699.0 432.8L697.7 431.9L696.5 431.0L695.2 430.0L693.9 429.1L692.7 428.2L691.4 427.2L690.2 426.3L688.9 425.3L687.7 424.4L686.4 423.4L685.1 422.5L683.9 421.5L682.6 420.5L681.4 419.5L680.1 418.5L678.9 417.5L677.6 416.5L676.4 415.4L675.1 414.4L673.8 413.3L672.6 412.2L672.3 412.0L673.3 411.3L674.3 410.7L675.3 410.0L676.1 409.2L676.8 408.3L676.9 407.6L677.0 407.2L676.8 406.1L676.6 405.6L676.2 404.8L675.4 403.7Z" fill="#0096ff" fill-rule="evenodd"/>
<path d="M679.3 402.3L678.5 401.5L679.3 401.2L680.3 400.9L681.3 400.6L682.3 400.3L683.3 400.0L684.3 399.7L685.3 399.4L686.3 399.1L687.3 398.8L688.3 398.5L689.3 398.2L690.3 397.8L691.3 397.5L692.3 397.2L693.3 396.9L694.3 396.5L695.3 396.2L696.2 395.9L697.2 395.5L698.2 395.2L699.2 394.8L700.2 394.5L701.2 394.1L702.2 393.7L703.2 393.4L704.2 393.0L705.2 392.6L706.2 392.2L707.2 391.7L708.2 391.3L709.2 390.8L710.2 390.4L711.2 389.9L712.2 389.4L713.2 388.9L714.2 388.3L715.2 387.8L716.2 387.2L717.2 386.7L718.2 386.1L719.2 385.5L720.2 384.9L721.2 384.3L722.2 383.7L723.2 383.1L724.2 382.4L725.2 381.8L726.2 381.2L727.2 380.5L728.2 379.8L729.2 379.2L730.2 378.5L731.2 377.8L732.2 377.2L733.2 376.5L734.2 375.8L735.2 375.1L736.2 374.3L737.2 373.6L738.2 372.9L739.2 372.1L740.2 371.4L741.2 370.6L742.2 369.8L743.2 369.0L744.2 368.1L745.2 367.3L746.2 366.4L747.2 365.6L748.2 364.7L749.2 363.8L750.2 362.8L751.2 361.9L752.2 360.9L753.2 360.0L754.2 359.0L755.2 358.0L756.1 357.0L757.1 356.0L758.1 355.0L759.1 354.0L760.1 353.0L761.1 351.9L762.1 350.9L763.1 349.9L764.1 348.9L765.1 347.8L766.1 346.8L767.1 345.7L768.1 344.7L769.1 343.6L770.1 342.6L771.1 341.5L772.1 340.5L773.1 339.5L774.1 338.4L774.9 337.6L776.1 338.4L777.4 339.2L778.6 340.0L779.9 340.8L781.1 341.7L782.4 342.5L783.6 343.3L784.9 344.1L786.1 344.9L787.4 345.8L788.6 346.6L789.9 347.4L791.1 348.2L792.4 349.0L793.6 349.9L794.8 350.7L796.1 351.5L797.3 352.3L798.5 353.2L799.8 354.0L801.0 354.8L802.2 355.6L803.5 356.5L804.7 357.3L805.9 358.1L807.1 359.0L808.3 359.8L809.6 360.6L810.8 361.5L812.0 362.3L813.2 363.2L814.4 364.0L815.6 364.9L815.7 364.9L816.8 365.7L818.0 366.6L819.2 367.4L820.3 368.3L821.5 369.2L822.7 370.0L823.9 370.9L825.0 371.8L826.2 372.7L827.3 373.5L828.5 374.4L829.2 375.0L829.6 375.3L830.8 376.2L831.9 377.1L833.0 378.0L834.1 378.9L835.2 379.8L836.3 380.7L837.2 381.5L837.4 381.6L838.5 382.6L839.6 383.5L840.7 384.4L841.7 385.4L842.8 386.3L843.1 386.6L843.8 387.2L844.9 388.2L845.9 389.2L846.9 390.1L847.6 390.8L847.9 391.1L848.9 392.1L849.9 393.1L850.9 394.1L851.3 394.5L851.9 395.1L852.8 396.1L853.8 397.1L854.4 397.8L854.7 398.1L855.6 399.2L856.5 400.2L856.9 400.7L857.4 401.3L858.3 402.4L859.1 403.4L859.1 403.4L859.9 404.5L860.7 405.7L860.9 405.9L861.5 406.8L862.3 407.9L862.4 408.2L863.0 409.1L863.7 410.3L863.7 410.3L862.7 411.1L861.7 412.0L860.7 412.8L859.7 413.7L858.7 414.5L857.7 415.3L856.7 416.2L855.7 417.0L854.7 417.8L853.7 418.6L852.7 419.4L851.7 420.2L850.7 421.0L849.7 421.8L848.7 422.6L847.7 423.4L846.7 424.2L845.7 424.9L844.7 425.7L843.7 426.4L842.7 427.1L841.7 427.9L840.7 428.6L839.7 429.3L838.7 430.0L837.7 430.7L836.7 431.4L835.7 432.1L834.7 432.8L833.7 433.5L832.7 434.2L831.7 434.8L830.7 435.5L829.7 436.2L828.7 436.9L827.7 437.5L826.7 438.2L825.7 438.9L824.7 439.5L823.7 440.2L822.7 440.9L821.7 441.5L820.7 442.2L819.7 442.9L818.7 443.5L817.7 444.2L816.7 444.8L815.7 445.5L814.7 446.2L813.7 446.8L812.7 447.5L811.7 448.1L810.7 448.8L809.7 449.4L808.7 450.1L807.7 450.7L806.7 451.4L805.7 452.0L804.7 452.7L803.8 453.3L802.8 454.0L801.8 454.6L800.8 455.2L799.8 455.9L798.8 456.5L797.8 457.1L796.8 457.7L795.8 458.3L794.8 458.9L793.8 459.5L792.8 460.1L791.8 460.7L790.8 461.3L789.8 461.9L788.8 462.4L787.8 463.0L786.8 463.6L785.8 464.2L784.8 464.8L783.8 465.4L782.8 466.0L781.8 466.7L780.8 467.4L779.8 468.0L778.8 468.7L777.8 469.5L776.8 470.2L775.8 470.9L774.8 471.7L773.8 472.4L772.8 473.2L771.8 473.9L770.8 474.6L769.8 475.3L768.8 476.0L767.8 476.7L766.8 477.4L765.6 476.6L764.3 475.9L763.0 475.1L761.8 474.4L760.5 473.6L759.3 472.9L758.0 472.1L756.8 471.4L755.5 470.6L754.2 469.8L753.0 469.1L751.7 468.3L750.5 467.5L749.2 466.7L748.0 465.9L746.7 465.2L745.5 464.4L744.2 463.6L742.9 462.8L741.7 462.0L740.4 461.2L739.2 460.4L737.9 459.5L736.7 458.7L735.4 457.9L734.1 457.1L732.9 456.3L731.6 455.4L730.4 454.6L729.1 453.8L727.9 452.9L726.6 452.1L725.4 451.3L724.1 450.4L722.8 449.6L721.6 448.7L720.3 447.9L719.1 447.0L717.8 446.1L716.6 445.3L715.3 444.4L714.0 443.5L712.8 442.7L711.5 441.8L710.3 440.9L709.0 440.0L707.8 439.1L706.5 438.2L705.2 437.3L704.0 436.4L702.7 435.5L701.5 434.6L700.2 433.7L699.0 432.8L697.7 431.9L696.5 431.0L695.2 430.0L693.9 429.1L692.7 428.2L691.4 427.2L690.2 426.3L688.9 425.3L687.7 424.4L686.4 423.4L685.1 422.5L683.9 421.5L682.6 420.5L681.4 419.5L680.1 418.5L680.0 418.4L681.0 417.7L682.0 417.1L683.1 416.5L684.1 415.8L685.0 415.1L685.8 414.3L686.2 413.3L686.2 412.8L686.3 412.0L686.1 411.3L685.8 410.4L685.5 410.0L684.9 408.8L684.6 408.3L684.1 407.6L683.2 406.5L682.5 405.7L682.4 405.5L681.4 404.5L680.5 403.5L679.5 402.5Z" fill="#00f0f0" fill-rule="evenodd"/>
<path d="M683.3 400.0L684.3 399.7L685.3 399.4L686.3 399.1L687.3 398.8L688.3 398.5L689.3 398.2L690.3 397.8L691.3 397.5L692.3 397.2L693.3 396.9L694.3 396.5L695.3 396.2L696.2 395.9L697.2 395.5L698.2 395.2L699.2 394.8L700.2 394.5L701.2 394.1L702.2 393.7L703.2 393.4L704.2 393.0L705.2 392.6L706.2 392.2L707.2 391.7L708.2 391.3L709.2 390.8L710.2 390.4L711.2 389.9L712.2 389.4L713.2 388.9L714.2 388.3L715.2 387.8L716.2 387.2L717.2 386.7L718.2 386.1L719.2 385.5L720.2 384.9L721.2 384.3L722.2 383.7L723.2 383.1L724.2 382.4L725.2 381.8L726.2 381.2L727.2 380.5L728.2 379.8L729.2 379.2L730.2 378.5L731.2 377.8L732.2 377.2L733.2 376.5L734.2 375.8L735.2 375.1L736.2 374.3L737.2 373.6L738.2 372.9L739.2 372.1L740.2 371.4L741.2 370.6L742.2 369.8L743.2 369.0L744.2 368.1L745.2 367.3L746.2 366.4L747.2 365.6L748.2 364.7L749.2 363.8L750.2 362.8L751.2 361.9L752.2 360.9L753.2 360.0L754.2 359.0L755.2 358.0L756.1 357.0L757.1 356.0L758.1 355.0L759.1 354.0L760.1 353.0L761.1 351.9L762.1 350.9L763.1 349.9L764.1 348.9L765.1 347.8L766.1 346.8L767.1 345.7L768.1 344.7L769.1 343.6L770.1 342.6L771.1 341.5L771.1 341.5L772.4 342.3L773.6 343.2L774.0 343.4L774.9 344.0L776.1 344.8L777.4 345.6L778.6 346.4L779.9 347.3L781.1 348.1L782.4 348.9L783.6 349.7L784.8 350.5L786.1 351.4L787.3 352.2L788.6 353.0L789.8 353.8L791.0 354.7L792.3 355.5L793.5 356.3L794.7 357.1L795.9 358.0L797.2 358.8L798.4 359.6L799.6 360.5L800.8 361.3L802.0 362.2L803.2 363.0L804.4 363.9L805.6 364.7L806.8 365.6L808.0 366.4L809.2 367.3L810.4 368.1L811.3 368.8L811.6 369.0L812.7 369.9L813.9 370.7L815.1 371.6L816.2 372.5L817.4 373.4L818.5 374.2L819.7 375.1L820.8 376.0L821.9 376.9L822.0 377.0L823.0 377.8L824.1 378.7L825.2 379.7L826.3 380.6L827.4 381.5L828.5 382.4L828.8 382.7L829.6 383.4L830.6 384.3L831.7 385.3L832.7 386.2L833.7 387.2L833.8 387.2L834.8 388.1L835.8 389.1L836.8 390.1L837.8 391.1L837.8 391.1L838.7 392.1L839.7 393.1L840.6 394.1L841.0 394.5L841.6 395.1L842.5 396.2L843.4 397.2L843.7 397.6L844.3 398.3L845.2 399.3L846.0 400.3L846.0 400.4L846.9 401.5L847.7 402.6L847.9 402.9L848.5 403.7L849.3 404.8L849.6 405.3L850.0 406.0L850.8 407.1L851.0 407.5L851.5 408.3L852.1 409.5L852.1 409.5L852.8 410.7L853.1 411.5L853.4 412.0L853.9 413.2L854.0 413.3L854.5 414.5L854.7 415.1L854.9 415.9L855.2 416.7L855.3 417.3L854.7 417.8L853.7 418.6L852.7 419.4L851.7 420.2L850.7 421.0L849.7 421.8L848.7 422.6L847.7 423.4L846.7 424.2L845.7 424.9L844.7 425.7L843.7 426.4L842.7 427.1L841.7 427.9L840.7 428.6L839.7 429.3L838.7 430.0L837.7 430.7L836.7 431.4L835.7 432.1L834.7 432.8L833.7 433.5L832.7 434.2L831.7 434.8L830.7 435.5L829.7 436.2L828.7 436.9L827.7 437.5L826.7 438.2L825.7 438.9L824.7 439.5L823.7 440.2L822.7 440.9L821.7 441.5L820.7 442.2L819.7 442.9L818.7 443.5L817.7 444.2L816.7 444.8L815.7 445.5L814.7 446.2L813.7 446.8L812.7 447.5L811.7 448.1L810.7 448.8L809.7 449.4L808.7 450.1L807.7 450.7L806.7 451.4L805.7 452.0L804.7 452.7L803.8 453.3L802.8 454.0L801.8 454.6L800.8 455.2L799.8 455.9L798.8 456.5L797.8 457.1L796.8 457.7L795.8 458.3L794.8 458.9L793.8 459.5L792.8 460.1L791.8 460.7L790.8 461.3L789.8 461.9L788.8 462.4L787.8 463.0L786.8 463.6L785.8 464.2L784.8 464.8L783.8 465.4L782.8 466.0L781.8 466.7L780.8 467.4L779.8 468.0L778.8 468.7L777.8 469.5L776.8 470.2L775.8 470.9L774.8 471.7L773.8 472.4L772.8 473.2L771.8 473.9L770.8 474.6L769.8 475.3L768.8 476.0L767.8 476.7L766.8 477.4L765.6 476.6L764.3 475.9L763.0 475.1L761.8 474.4L760.5 473.6L759.3 472.9L758.0 472.1L756.8 471.4L755.5 470.6L754.2 469.8L753.0 469.1L751.7 468.3L750.5 467.5L749.2 466.7L748.0 465.9L746.7 465.2L745.5 464.4L744.2 463.6L742.9 462.8L741.7 462.0L740.4 461.2L739.2 460.4L737.9 459.5L736.7 458.7L735.4 457.9L734.1 457.1L732.9 456.3L731.6 455.4L730.4 454.6L729.1 453.8L727.9 452.9L726.6 452.1L725.4 451.3L724.1 450.4L722.8 449.6L721.6 448.7L720.3 447.9L719.1 447.0L717.8 446.1L716.6 445.3L715.3 444.4L714.0 443.5L712.8 442.7L711.5 441.8L710.3 440.9L709.0 440.0L707.8 439.1L706.5 438.2L705.2 437.3L704.0 436.4L702.7 435.5L701.5 434.6L700.2 433.7L699.0 432.8L697.7 431.9L696.5 431.0L695.2 430.0L693.9 429.1L692.7 428.2L691.5 427.3L692.4 426.6L693.5 426.0L694.7 425.4L695.8 424.9L697.0 424.3L698.0 423.7L698.8 422.9L699.3 422.0L699.3 421.9L699.5 420.7L699.4 420.3L699.1 419.1L699.0 418.9L698.4 417.7L698.1 417.2L697.7 416.5L696.9 415.4L696.5 414.8L696.1 414.3L695.2 413.2L694.3 412.2L694.2 412.0L693.4 411.2L692.4 410.1L691.5 409.1L691.3 408.8L690.5 408.1L689.6 407.1L688.6 406.1L687.8 405.3L687.6 405.1L686.6 404.1L685.6 403.2L684.6 402.2L683.8 401.4L683.6 401.2L682.6 400.2Z" fill="#00e090" fill-rule="evenodd"/>
<path d="M687.3 398.8L688.3 398.5L689.3 398.2L690.3 397.8L691.3 397.5L692.3 397.2L693.3 396.9L694.3 396.5L695.3 396.2L696.2 395.9L697.2 395.5L698.2 395.2L699.2 394.8L700.2 394.5L701.2 394.1L702.2 393.7L703.2 393.4L704.2 393.0L705.2 392.6L706.2 392.2L707.2 391.7L708.2 391.3L709.2 390.8L710.2 390.4L711.2 389.9L712.2 389.4L713.2 388.9L714.2 388.3L715.2 387.8L716.2 387.2L717.2 386.7L718.2 386.1L719.2 385.5L720.2 384.9L721.2 384.3L722.2 383.7L723.2 383.1L724.2 382.4L725.2 381.8L726.2 381.2L727.2 380.5L728.2 379.8L729.2 379.2L730.2 378.5L731.2 377.8L732.2 377.2L733.2 376.5L734.2 375.8L735.2 375.1L736.2 374.3L737.2 373.6L738.2 372.9L739.2 372.1L740.2 371.4L741.2 370.6L742.2 369.8L743.2 369.0L744.2 368.1L745.2 367.3L746.2 366.4L747.2 365.6L748.2 364.7L749.2 363.8L750.2 362.8L751.2 361.9L752.2 360.9L753.2 360.0L754.2 359.0L755.2 358.0L756.1 357.0L757.1 356.0L758.1 355.0L759.1 354.0L760.1 353.0L761.1 351.9L762.1 350.9L763.1 349.9L764.1 348.9L765.1 347.8L766.1 346.8L767.1 345.7L767.4 345.5L768.6 346.3L769.9 347.1L771.1 347.9L772.3 348.8L773.6 349.6L774.8 350.4L776.1 351.2L777.3 352.0L778.6 352.9L779.8 353.7L781.0 354.5L782.3 355.3L783.5 356.2L784.7 357.0L785.0 357.2L786.0 357.8L787.2 358.7L788.4 359.5L789.6 360.3L790.8 361.2L792.1 362.0L793.3 362.8L794.5 363.7L795.7 364.5L796.9 365.4L798.1 366.2L799.3 367.1L800.5 367.9L801.7 368.8L802.8 369.7L804.0 370.5L805.2 371.4L806.4 372.3L806.5 372.4L807.5 373.1L808.7 374.0L809.8 374.9L810.9 375.8L812.1 376.7L813.2 377.6L814.3 378.5L815.4 379.4L815.5 379.5L816.5 380.3L817.6 381.3L818.7 382.2L819.7 383.1L820.8 384.1L821.4 384.6L821.8 385.0L822.9 386.0L823.9 386.9L824.9 387.9L825.8 388.7L825.9 388.9L826.9 389.9L827.9 390.9L828.9 391.9L829.3 392.3L829.8 392.9L830.7 393.9L831.7 394.9L832.1 395.4L832.6 396.0L833.5 397.0L834.3 398.1L834.5 398.3L835.2 399.2L836.0 400.3L836.5 400.9L836.8 401.4L837.6 402.5L838.2 403.3L838.4 403.6L839.2 404.8L839.6 405.5L839.9 405.9L840.6 407.1L840.8 407.6L841.2 408.3L841.8 409.6L841.9 409.6L842.4 410.8L842.7 411.4L843.0 412.1L843.4 413.2L843.5 413.4L843.9 414.8L843.9 414.8L844.2 416.2L844.3 416.4L844.5 417.7L844.6 417.8L844.7 419.2L844.7 419.3L844.7 420.6L844.7 420.8L844.7 421.9L844.6 422.5L844.5 423.1L844.3 424.2L844.2 424.4L844.0 425.3L843.6 426.4L843.5 426.6L842.7 427.1L841.7 427.9L840.7 428.6L839.7 429.3L838.7 430.0L837.7 430.7L836.7 431.4L835.7 432.1L834.7 432.8L833.7 433.5L832.7 434.2L831.7 434.8L830.7 435.5L829.7 436.2L828.7 436.9L827.7 437.5L826.7 438.2L825.7 438.9L824.7 439.5L823.7 440.2L822.7 440.9L821.7 441.5L820.7 442.2L819.7 442.9L818.7 443.5L817.7 444.2L816.7 444.8L815.7 445.5L814.7 446.2L813.7 446.8L812.7 447.5L811.7 448.1L810.7 448.8L809.7 449.4L808.7 450.1L807.7 450.7L806.7 451.4L805.7 452.0L804.7 452.7L803.8 453.3L802.8 454.0L801.8 454.6L800.8 455.2L799.8 455.9L798.8 456.5L797.8 457.1L796.8 457.7L795.8 458.3L794.8 458.9L793.8 459.5L793.7 459.5L792.2 459.8L790.6 460.1L790.4 460.1L788.9 460.3L787.5 460.4L787.1 460.4L785.2 460.5L784.7 460.6L783.3 460.6L782.2 460.6L781.3 460.6L779.7 460.6L779.3 460.6L777.3 460.6L777.2 460.6L775.2 460.6L774.8 460.6L773.2 460.6L772.2 460.7L771.3 460.7L769.7 461.0L768.7 461.3L768.4 461.4L767.5 462.1L767.5 462.1L767.0 463.1L767.0 464.1L767.0 464.4L767.2 465.6L767.3 465.9L767.6 467.0L767.8 467.5L768.0 468.4L768.3 469.2L768.5 469.7L768.8 470.8L768.8 471.1L769.0 472.3L769.1 472.6L769.1 473.6L769.0 474.3L768.9 474.8L768.4 475.8L767.6 476.6L766.4 477.1L765.6 476.6L764.3 475.9L763.0 475.1L761.8 474.4L760.5 473.6L759.3 472.9L758.0 472.1L756.8 471.4L755.5 470.6L754.2 469.8L753.0 469.1L751.7 468.3L750.5 467.5L749.2 466.7L748.0 465.9L746.7 465.2L745.5 464.4L744.2 463.6L742.9 462.8L741.7 462.0L740.4 461.2L739.2 460.4L737.9 459.5L736.7 458.7L735.4 457.9L734.1 457.1L732.9 456.3L731.6 455.4L730.4 454.6L729.1 453.8L727.9 452.9L726.6 452.1L725.4 451.3L724.1 450.4L722.8 449.6L721.6 448.7L720.3 447.9L719.1 447.0L717.8 446.1L716.6 445.3L715.3 444.4L714.0 443.5L712.8 442.7L711.5 441.8L710.3 440.9L709.6 440.5L710.4 439.7L711.5 439.1L712.8 438.6L714.2 438.2L714.5 438.1L715.6 437.8L717.1 437.4L718.3 436.9L719.3 436.2L719.8 435.3L719.7 434.6L719.7 433.9L719.4 433.2L718.8 432.0L718.8 432.0L718.0 430.8L717.2 429.7L717.2 429.7L716.3 428.6L715.5 427.6L714.9 426.9L714.6 426.5L713.6 425.5L712.7 424.5L712.0 423.7L711.8 423.4L710.8 422.4L709.8 421.4L708.9 420.4L708.7 420.2L707.9 419.4L706.9 418.5L705.9 417.5L705.0 416.5L704.9 416.5L703.9 415.5L702.9 414.5L701.9 413.5L701.0 412.7L700.9 412.6L699.9 411.6L698.9 410.6L697.9 409.6L696.9 408.7L696.9 408.7L695.8 407.7L694.8 406.7L693.8 405.7L692.8 404.8L692.8 404.7L691.8 403.8L690.8 402.8L689.7 401.9L688.7 400.9L688.5 400.7L687.7 399.9L686.7 399.0Z" fill="#00f000" fill-rule="evenodd"/>
<path d="M691.3 397.5L692.3 397.2L693.3 396.9L694.3 396.5L695.3 396.2L696.2 395.9L697.2 395.5L698.2 395.2L699.2 394.8L700.2 394.5L701.2 394.1L702.2 393.7L703.2 393.4L704.2 393.0L705.2 392.6L706.2 392.2L707.2 391.7L708.2 391.3L709.2 390.8L710.2 390.4L711.2 389.9L712.2 389.4L713.2 388.9L714.2 388.3L715.2 387.8L716.2 387.2L717.2 386.7L718.2 386.1L719.2 385.5L720.2 384.9L721.2 384.3L722.2 383.7L723.2 383.1L724.2 382.4L725.2 381.8L726.2 381.2L727.2 380.5L728.2 379.8L729.2 379.2L730.2 378.5L731.2 377.8L732.2 377.2L733.2 376.5L734.2 375.8L735.2 375.1L736.2 374.3L737.2 373.6L738.2 372.9L739.2 372.1L740.2 371.4L741.2 370.6L742.2 369.8L743.2 369.0L744.2 368.1L745.2 367.3L746.2 366.4L747.2 365.6L748.2 364.7L749.2 363.8L750.2 362.8L751.2 361.9L752.2 360.9L753.2 360.0L754.2 359.0L755.2 358.0L756.1 357.0L757.1 356.0L758.1 355.0L759.1 354.0L760.1 353.0L761.1 351.9L762.1 350.9L763.1 349.9L763.5 349.5L764.8 350.3L766.0 351.1L767.2 352.0L768.5 352.8L769.7 353.6L771.0 354.4L772.2 355.2L773.4 356.1L774.7 356.9L775.9 357.7L777.2 358.5L778.4 359.4L779.6 360.2L780.8 361.0L782.1 361.9L783.3 362.7L784.5 363.5L784.5 363.5L785.7 364.4L786.9 365.2L788.1 366.1L789.3 366.9L790.5 367.8L791.7 368.6L792.9 369.5L794.1 370.3L795.3 371.2L796.5 372.1L797.6 372.9L798.8 373.8L799.9 374.7L801.1 375.6L801.1 375.6L802.2 376.4L803.4 377.3L804.5 378.2L805.6 379.1L806.7 380.1L807.8 381.0L808.9 381.9L809.0 382.0L810.0 382.8L811.0 383.8L812.1 384.7L813.2 385.6L814.2 386.6L814.3 386.7L815.2 387.6L816.2 388.6L817.2 389.5L818.2 390.5L818.2 390.5L819.2 391.5L820.1 392.5L821.0 393.6L821.3 393.8L822.0 394.6L822.9 395.7L823.7 396.7L823.8 396.7L824.6 397.8L825.4 398.9L825.8 399.4L826.3 400.0L827.1 401.1L827.5 401.8L827.8 402.2L828.6 403.4L829.0 404.0L829.3 404.5L830.0 405.7L830.2 406.1L830.6 407.0L831.1 408.0L831.2 408.2L831.8 409.5L831.9 409.8L832.3 410.8L832.5 411.5L832.7 412.1L833.0 413.1L833.1 413.6L833.3 414.6L833.3 415.0L833.5 416.1L833.5 416.6L833.5 417.4L833.5 418.2L833.4 418.7L833.3 419.9L833.2 420.0L833.0 421.0L832.7 422.0L832.7 422.1L832.2 423.1L831.7 424.1L831.5 424.4L831.2 425.0L830.6 425.9L829.9 426.8L829.2 427.6L829.2 427.7L828.4 428.5L827.6 429.3L826.8 430.0L825.9 430.8L825.1 431.5L824.2 432.3L823.3 433.0L822.3 433.7L821.4 434.4L821.0 434.7L820.5 435.1L819.5 435.8L818.5 436.5L817.6 437.1L816.6 437.8L815.6 438.5L814.6 439.2L813.6 439.8L812.6 440.5L811.6 441.1L810.6 441.8L809.6 442.4L808.5 443.1L807.5 443.7L806.5 444.3L806.3 444.5L805.4 445.0L804.4 445.6L803.3 446.2L802.2 446.8L801.1 447.4L800.0 448.0L798.8 448.6L797.7 449.1L796.5 449.6L795.2 450.2L795.2 450.2L794.0 450.6L792.6 451.1L791.3 451.5L790.2 451.8L789.9 451.9L788.4 452.3L786.8 452.5L786.6 452.6L785.1 452.8L783.6 452.9L783.4 452.9L781.5 453.0L780.9 453.0L779.5 453.0L778.5 453.0L777.3 452.9L776.3 452.8L774.9 452.7L774.1 452.6L772.3 452.3L772.1 452.3L770.2 452.0L769.5 451.8L768.3 451.6L766.5 451.1L766.3 451.1L764.7 450.6L763.0 450.1L762.7 450.1L761.3 449.6L759.7 449.1L758.5 448.6L758.1 448.5L756.5 447.9L754.9 447.2L753.4 446.6L753.1 446.4L751.9 445.9L750.5 445.3L749.1 444.6L747.7 443.8L746.3 443.1L744.9 442.4L743.6 441.6L743.2 441.4L742.3 440.8L741.0 440.0L739.7 439.2L738.5 438.4L737.2 437.6L736.0 436.8L735.0 436.1L734.8 435.9L733.6 435.1L732.4 434.2L731.2 433.4L730.1 432.5L728.9 431.6L727.8 430.7L726.7 429.8L725.5 428.9L724.4 428.0L724.1 427.8L723.3 427.1L722.2 426.2L721.1 425.3L720.0 424.3L719.0 423.4L717.9 422.5L717.6 422.3L716.8 421.5L715.8 420.6L714.7 419.7L713.6 418.7L712.6 417.8L712.2 417.4L711.5 416.8L710.5 415.9L709.4 414.9L708.4 414.0L707.3 413.0L707.2 412.9L706.3 412.1L705.3 411.1L704.2 410.2L703.2 409.2L702.5 408.5L702.2 408.3L701.1 407.3L700.1 406.3L699.1 405.4L698.0 404.4L697.9 404.3L697.0 403.4L696.0 402.5L695.0 401.5L693.9 400.5L693.5 400.2L692.9 399.6L691.9 398.6L690.9 397.6Z" fill="#ffff00" fill-rule="evenodd"/>
<path d="M695.3 396.2L696.2 395.9L697.2 395.5L698.2 395.2L699.2 394.8L700.2 394.5L701.2 394.1L702.2 393.7L703.2 393.4L704.2 393.0L705.2 392.6L706.2 392.2L707.2 391.7L708.2 391.3L709.2 390.8L710.2 390.4L711.2 389.9L712.2 389.4L713.2 388.9L714.2 388.3L715.2 387.8L716.2 387.2L717.2 386.7L718.2 386.1L719.2 385.5L720.2 384.9L721.2 384.3L722.2 383.7L723.2 383.1L724.2 382.4L725.2 381.8L726.2 381.2L727.2 380.5L728.2 379.8L729.2 379.2L730.2 378.5L731.2 377.8L732.2 377.2L733.2 376.5L734.2 375.8L735.2 375.1L736.2 374.3L737.2 373.6L738.2 372.9L739.2 372.1L740.2 371.4L741.2 370.6L742.2 369.8L743.2 369.0L744.2 368.1L745.2 367.3L746.2 366.4L747.2 365.6L748.2 364.7L749.2 363.8L750.2 362.8L751.2 361.9L752.2 360.9L753.2 360.0L754.2 359.0L755.2 358.0L756.1 357.0L757.1 356.0L758.1 355.0L759.1 354.0L759.6 353.6L760.8 354.4L762.0 355.2L763.3 356.0L764.5 356.9L765.8 357.7L767.0 358.5L768.2 359.3L769.5 360.2L770.7 361.0L771.9 361.8L773.2 362.6L774.4 363.5L775.6 364.3L776.8 365.1L778.0 366.0L779.2 366.8L779.3 366.8L780.5 367.7L781.7 368.5L782.9 369.4L784.1 370.2L785.2 371.1L786.4 371.9L787.6 372.8L788.8 373.7L790.0 374.5L791.1 375.4L792.3 376.3L793.4 377.2L794.4 378.0L794.6 378.0L795.7 378.9L796.8 379.8L797.9 380.7L799.0 381.7L800.1 382.6L801.2 383.5L801.8 384.0L802.3 384.4L803.4 385.4L804.4 386.3L805.4 387.3L806.5 388.3L806.6 388.4L807.5 389.2L808.4 390.2L809.4 391.2L810.2 392.0L810.4 392.2L811.3 393.3L812.2 394.3L812.9 395.1L813.1 395.3L814.0 396.4L814.9 397.5L815.1 397.8L815.7 398.6L816.5 399.7L816.9 400.3L817.3 400.8L818.0 402.0L818.3 402.5L818.7 403.2L819.4 404.4L819.5 404.6L820.0 405.6L820.4 406.4L820.5 406.9L821.0 408.2L821.0 408.2L821.5 409.5L821.5 409.8L821.8 411.0L821.9 411.3L822.0 412.5L822.0 412.8L822.1 414.1L822.1 414.1L822.0 415.3L821.9 415.8L821.8 416.5L821.5 417.6L821.5 417.8L821.1 418.7L820.7 419.7L820.5 420.1L820.1 420.7L819.5 421.6L818.9 422.5L818.3 423.1L818.2 423.3L817.4 424.1L816.6 424.9L815.8 425.7L815.0 426.5L814.1 427.2L813.2 427.9L812.3 428.7L811.4 429.4L811.3 429.4L810.4 430.1L809.5 430.8L808.5 431.5L807.6 432.1L806.6 432.8L805.6 433.5L804.6 434.1L803.6 434.8L802.6 435.4L801.6 436.1L800.5 436.7L799.5 437.4L798.4 438.0L797.8 438.3L797.4 438.6L796.3 439.2L795.2 439.8L794.1 440.4L793.0 441.0L791.8 441.6L790.7 442.1L789.4 442.7L788.2 443.2L788.0 443.2L786.9 443.6L785.6 444.1L784.2 444.5L783.3 444.7L782.7 444.8L781.2 445.2L779.8 445.4L779.6 445.4L777.8 445.6L776.9 445.6L775.9 445.7L774.4 445.7L773.9 445.7L772.1 445.6L771.7 445.5L769.9 445.3L769.2 445.2L767.9 445.0L766.4 444.7L766.0 444.7L764.2 444.2L763.2 444.0L762.4 443.8L760.7 443.3L759.4 442.8L759.0 442.7L757.4 442.1L755.8 441.5L754.6 441.0L754.3 440.9L752.8 440.3L751.3 439.6L749.8 438.9L748.4 438.2L747.3 437.7L747.0 437.5L745.7 436.8L744.3 436.0L743.0 435.3L741.6 434.5L740.4 433.7L739.1 432.9L737.8 432.1L736.6 431.3L735.3 430.5L734.1 429.6L732.9 428.8L731.7 427.9L730.5 427.1L729.4 426.2L728.2 425.3L728.2 425.3L727.1 424.4L725.9 423.5L724.8 422.6L723.7 421.7L722.6 420.8L721.4 419.9L720.3 419.0L719.9 418.7L719.3 418.1L718.2 417.2L717.1 416.2L716.0 415.3L714.9 414.4L713.9 413.4L713.9 413.4L712.8 412.5L711.8 411.6L710.7 410.6L709.6 409.7L708.6 408.8L708.6 408.7L707.6 407.8L706.5 406.8L705.5 405.9L704.4 404.9L703.8 404.4L703.4 403.9L702.4 403.0L701.3 402.0L700.3 401.1L699.3 400.1L699.3 400.1L698.3 399.1L697.2 398.2L696.2 397.2L695.2 396.2Z" fill="#d0c800" fill-rule="evenodd"/>
<path d="M700.2 394.5L701.2 394.1L702.2 393.7L703.2 393.4L704.2 393.0L705.2 392.6L706.2 392.2L707.2 391.7L708.2 391.3L709.2 390.8L710.2 390.4L711.2 389.9L712.2 389.4L713.2 388.9L714.2 388.3L715.2 387.8L716.2 387.2L717.2 386.7L718.2 386.1L719.2 385.5L720.2 384.9L721.2 384.3L722.2 383.7L723.2 383.1L724.2 382.4L725.2 381.8L726.2 381.2L727.2 380.5L728.2 379.8L729.2 379.2L730.2 378.5L731.2 377.8L732.2 377.2L733.2 376.5L734.2 375.8L735.2 375.1L736.2 374.3L737.2 373.6L738.2 372.9L739.2 372.1L740.2 371.4L741.2 370.6L742.2 369.8L743.2 369.0L744.2 368.1L745.2 367.3L746.2 366.4L747.2 365.6L748.2 364.7L749.2 363.8L750.2 362.8L751.2 361.9L752.2 360.9L753.2 360.0L754.2 359.0L755.2 358.0L755.4 357.8L756.6 358.6L757.8 359.5L759.1 360.3L760.3 361.1L761.5 361.9L762.8 362.8L764.0 363.6L765.2 364.4L766.5 365.2L766.5 365.3L767.7 366.1L768.9 366.9L770.1 367.8L771.3 368.6L772.5 369.4L773.7 370.3L774.9 371.1L776.1 372.0L777.3 372.8L778.5 373.7L779.7 374.6L780.9 375.4L782.0 376.3L783.2 377.2L784.4 378.0L785.0 378.5L785.5 378.9L786.6 379.8L787.8 380.7L788.9 381.6L790.0 382.5L791.1 383.4L792.2 384.4L792.7 384.8L793.3 385.3L794.3 386.2L795.4 387.2L796.4 388.2L797.4 389.1L797.5 389.2L798.4 390.1L799.4 391.1L800.3 392.1L800.9 392.7L801.3 393.1L802.2 394.2L803.1 395.2L803.4 395.6L803.9 396.3L804.8 397.4L805.3 398.2L805.5 398.5L806.3 399.7L806.8 400.4L807.0 400.8L807.7 402.0L807.9 402.5L808.3 403.3L808.7 404.3L808.8 404.6L809.3 405.9L809.3 406.0L809.7 407.3L809.7 407.6L809.9 408.8L809.9 409.0L810.0 410.3L810.0 410.4L809.9 411.6L809.8 412.2L809.7 412.7L809.3 413.8L809.2 414.2L808.9 414.9L808.4 415.9L808.0 416.7L807.9 416.8L807.2 417.7L806.5 418.6L805.8 419.4L805.0 420.2L804.9 420.3L804.2 421.0L803.4 421.8L802.5 422.5L801.6 423.2L800.7 423.9L799.8 424.7L798.8 425.4L797.9 426.0L796.9 426.7L795.9 427.4L794.9 428.1L793.9 428.7L792.9 429.4L791.9 430.0L790.8 430.6L789.8 431.3L788.7 431.9L787.6 432.5L786.5 433.1L785.4 433.6L784.2 434.2L783.5 434.5L783.0 434.7L781.8 435.2L780.5 435.7L779.2 436.2L777.9 436.6L777.8 436.6L776.4 437.0L774.9 437.3L774.1 437.4L773.2 437.6L771.5 437.7L771.1 437.8L769.6 437.8L768.6 437.8L767.5 437.8L766.3 437.7L765.2 437.6L764.2 437.5L762.6 437.2L762.2 437.1L760.3 436.7L759.5 436.5L758.5 436.3L756.8 435.8L755.8 435.4L755.2 435.2L753.6 434.6L752.0 434.0L750.7 433.5L750.5 433.4L749.0 432.7L747.6 432.0L746.2 431.3L744.8 430.6L743.4 429.8L742.1 429.1L740.8 428.3L739.5 427.5L739.1 427.2L738.2 426.7L737.0 425.9L736.4 425.5L735.7 425.1L734.5 424.2L733.3 423.4L732.1 422.5L730.9 421.7L729.8 420.8L728.6 419.9L727.5 419.1L726.3 418.2L725.2 417.3L724.1 416.4L723.4 415.9L723.0 415.5L721.9 414.5L720.8 413.6L719.7 412.7L718.6 411.8L717.5 410.8L716.9 410.3L716.4 409.9L715.4 409.0L714.3 408.0L713.2 407.1L712.2 406.1L711.5 405.5L711.1 405.2L710.1 404.3L709.0 403.3L708.0 402.3L707.0 401.4L706.6 401.1L705.9 400.4L704.9 399.5L703.9 398.5L702.8 397.6L702.0 396.8L701.8 396.6L700.8 395.6L699.8 394.7Z" fill="#ffa500" fill-rule="evenodd"/>
<path d="M705.2 392.6L706.2 392.2L707.2 391.7L708.2 391.3L709.2 390.8L710.2 390.4L711.2 389.9L712.2 389.4L713.2 388.9L714.2 388.3L715.2 387.8L716.2 387.2L717.2 386.7L718.2 386.1L719.2 385.5L720.2 384.9L721.2 384.3L722.2 383.7L723.2 383.1L724.2 382.4L725.2 381.8L726.2 381.2L727.2 380.5L728.2 379.8L729.2 379.2L730.2 378.5L731.2 377.8L732.2 377.2L733.2 376.5L734.2 375.8L735.2 375.1L736.2 374.3L737.2 373.6L738.2 372.9L739.2 372.1L740.2 371.4L741.2 370.6L742.2 369.8L743.2 369.0L744.2 368.1L745.2 367.3L746.2 366.4L747.2 365.6L748.2 364.7L749.2 363.8L750.2 362.8L750.6 362.4L751.8 363.2L753.1 364.1L754.3 364.9L755.5 365.7L756.8 366.6L758.0 367.4L759.2 368.2L760.4 369.1L761.6 369.9L762.9 370.7L764.1 371.6L765.3 372.4L765.8 372.8L766.5 373.3L767.7 374.1L768.8 375.0L770.0 375.9L771.2 376.7L772.4 377.6L773.5 378.5L774.7 379.3L775.8 380.2L777.0 381.1L778.1 382.0L778.2 382.1L779.2 382.9L780.3 383.8L781.4 384.8L782.4 385.7L783.5 386.6L784.3 387.4L784.5 387.6L785.6 388.6L786.6 389.6L787.5 390.5L788.1 391.1L788.5 391.6L789.4 392.6L790.3 393.6L790.7 394.1L791.2 394.7L792.0 395.8L792.6 396.7L792.8 396.9L793.5 398.1L793.9 398.8L794.2 399.3L794.8 400.5L794.9 400.7L795.3 401.8L795.5 402.4L795.7 403.2L795.9 404.0L795.9 404.7L796.0 405.4L796.0 406.3L796.0 406.7L795.8 407.9L795.8 408.1L795.5 409.0L795.1 410.0L795.0 410.2L794.6 411.0L794.1 412.0L793.4 412.9L793.3 413.1L792.7 413.7L792.0 414.5L791.2 415.3L790.4 416.1L789.5 416.9L788.6 417.6L787.7 418.3L786.8 419.0L786.7 419.0L785.8 419.7L784.8 420.4L783.8 421.0L782.8 421.7L781.8 422.3L781.7 422.4L780.7 422.9L779.6 423.6L778.5 424.2L777.4 424.7L776.3 425.3L775.1 425.8L773.8 426.3L772.6 426.8L772.4 426.9L771.2 427.3L769.8 427.7L768.3 428.0L768.2 428.0L766.8 428.3L765.0 428.5L765.0 428.5L763.2 428.6L762.4 428.6L761.1 428.6L760.1 428.5L758.7 428.3L758.0 428.2L756.0 427.9L756.0 427.9L754.2 427.4L752.5 426.9L752.5 426.9L750.9 426.4L749.3 425.8L747.7 425.1L747.7 425.1L746.3 424.5L744.8 423.8L743.4 423.1L742.1 422.3L740.7 421.6L739.4 420.8L738.1 420.0L736.9 419.2L735.6 418.4L734.4 417.5L733.2 416.7L732.0 415.8L730.8 415.0L729.7 414.1L728.5 413.2L727.4 412.3L726.2 411.5L725.1 410.6L725.1 410.5L724.0 409.6L722.9 408.7L721.8 407.8L720.7 406.9L719.6 406.0L718.5 405.0L718.4 404.9L717.5 404.1L716.4 403.2L715.4 402.2L714.3 401.3L713.2 400.3L713.0 400.1L712.2 399.4L711.1 398.4L710.1 397.5L709.1 396.5L708.1 395.6L708.0 395.6L707.0 394.6L706.0 393.7L704.9 392.7Z" fill="#ff0000" fill-rule="evenodd"/>
<path d="M712.2 389.4L713.2 388.9L714.2 388.3L715.2 387.8L716.2 387.2L717.2 386.7L718.2 386.1L719.2 385.5L720.2 384.9L721.2 384.3L722.2 383.7L723.2 383.1L724.2 382.4L725.2 381.8L726.2 381.2L727.2 380.5L728.2 379.8L729.2 379.2L730.2 378.5L731.2 377.8L732.2 377.2L733.2 376.5L734.2 375.8L735.2 375.1L736.2 374.3L737.2 373.6L738.2 372.9L739.2 372.1L740.2 371.4L741.2 370.6L742.2 369.8L743.2 369.0L744.2 368.1L744.2 368.1L745.5 368.9L746.2 369.5L746.7 369.8L747.9 370.6L749.1 371.5L750.3 372.3L751.5 373.2L752.7 374.0L753.9 374.9L755.0 375.7L756.2 376.6L757.4 377.5L758.5 378.3L759.7 379.2L760.8 380.1L761.5 380.6L762.0 381.0L763.1 381.9L764.2 382.8L765.2 383.8L766.3 384.7L767.4 385.6L767.7 385.9L768.4 386.6L769.4 387.6L770.4 388.6L771.2 389.5L771.3 389.6L772.2 390.7L773.1 391.7L773.5 392.3L773.9 392.8L774.6 394.0L774.9 394.5L775.3 395.2L775.8 396.4L775.9 396.5L776.3 397.8L776.4 398.1L776.6 399.3L776.6 399.5L776.6 400.8L776.6 400.9L776.4 402.0L776.2 402.8L776.1 403.1L775.6 404.1L775.1 405.1L775.0 405.3L774.5 406.0L773.7 406.8L773.0 407.6L772.1 408.4L771.3 409.1L770.3 409.8L769.3 410.5L768.3 411.2L767.3 411.8L766.1 412.4L765.0 412.9L763.8 413.4L762.5 413.9L761.4 414.3L761.1 414.3L759.6 414.7L758.1 415.0L757.7 415.0L756.3 415.2L755.0 415.2L754.4 415.2L752.6 415.1L752.1 415.1L750.6 414.9L749.4 414.6L748.7 414.5L746.9 414.0L745.8 413.6L745.3 413.4L743.7 412.8L742.2 412.2L740.8 411.5L739.4 410.8L739.4 410.7L738.0 410.0L736.7 409.2L735.4 408.4L734.2 407.6L732.9 406.8L731.7 406.0L730.5 405.1L729.6 404.4L729.3 404.3L728.2 403.4L727.0 402.5L725.9 401.6L724.8 400.7L723.7 399.8L722.6 398.9L721.5 398.0L720.9 397.5L720.4 397.1L719.3 396.1L718.2 395.2L717.1 394.3L716.1 393.3L715.1 392.4L715.0 392.4L714.0 391.5L712.9 390.5L711.9 389.6Z" fill="#b30000" fill-rule="evenodd"/>
<path d="M666.3 405.2 L666.3 411.7 L666.3 418.2 L666.3 418.2 L667.8 420.6 L669.3 422.2 L670.8 423.6 L672.4 424.9 L673.9 426.2 L675.4 427.5 L676.9 428.8 L678.4 430.0 L679.9 431.2 L681.4 432.4 L683.0 433.6 L684.5 434.8 L686.0 435.9 L687.5 437.1 L689.0 438.2 L690.5 439.4 L692.0 440.5 L693.5 441.6 L695.1 442.7 L696.6 443.8 L698.1 445.0 L699.6 446.0 L701.1 447.1 L702.6 448.2 L704.1 449.3 L705.7 450.4 L707.2 451.5 L708.7 452.5 L710.2 453.6 L711.7 454.6 L713.2 455.7 L714.7 456.7 L716.3 457.8 L717.8 458.8 L719.3 459.8 L720.8 460.9 L722.3 461.9 L723.8 462.9 L725.3 463.9 L726.8 464.9 L728.4 465.9 L729.9 466.9 L731.4 467.9 L732.9 468.9 L734.4 469.9 L735.9 470.9 L737.4 471.9 L739.0 472.9 L740.5 473.8 L742.0 474.8 L743.5 475.8 L745.0 476.7 L746.5 477.7 L748.0 478.6 L749.6 479.6 L751.1 480.5 L752.6 481.5 L754.1 482.4 L755.6 483.3 L757.1 484.2 L758.6 485.2 L760.2 486.1 L761.7 487.0 L763.2 487.9 L764.7 488.8 L766.2 489.7 L767.7 490.6 L769.2 491.5 L770.7 492.3 L772.3 493.2 L773.8 494.1 L775.3 494.9 L776.8 495.8 L778.3 496.6 L779.8 497.5 L781.3 498.3 L782.9 499.2 L784.4 500.0 L785.9 500.8 L787.4 501.6 L787.4 501.6 L787.4 495.1 L787.4 488.6 L787.4 488.6 L785.9 487.8 L784.4 487.0 L782.9 486.2 L781.3 485.3 L779.8 484.5 L778.3 483.6 L776.8 482.8 L775.3 481.9 L773.8 481.1 L772.3 480.2 L770.7 479.3 L769.2 478.5 L767.7 477.6 L766.2 476.7 L764.7 475.8 L763.2 474.9 L761.7 474.0 L760.2 473.1 L758.6 472.2 L757.1 471.2 L755.6 470.3 L754.1 469.4 L752.6 468.5 L751.1 467.5 L749.6 466.6 L748.0 465.6 L746.5 464.7 L745.0 463.7 L743.5 462.8 L742.0 461.8 L740.5 460.8 L739.0 459.9 L737.4 458.9 L735.9 457.9 L734.4 456.9 L732.9 455.9 L731.4 454.9 L729.9 453.9 L728.4 452.9 L726.8 451.9 L725.3 450.9 L723.8 449.9 L722.3 448.9 L720.8 447.9 L719.3 446.8 L717.8 445.8 L716.3 444.8 L714.7 443.7 L713.2 442.7 L711.7 441.6 L710.2 440.6 L708.7 439.5 L707.2 438.5 L705.7 437.4 L704.1 436.3 L702.6 435.2 L701.1 434.1 L699.6 433.0 L698.1 432.0 L696.6 430.8 L695.1 429.7 L693.5 428.6 L692.0 427.5 L690.5 426.4 L689.0 425.2 L687.5 424.1 L686.0 422.9 L684.5 421.8 L683.0 420.6 L681.4 419.4 L679.9 418.2 L678.4 417.0 L676.9 415.8 L675.4 414.5 L673.9 413.2 L672.4 411.9 L670.8 410.6 L669.3 409.2 L667.8 407.6 L666.3 405.2Z" fill="#00008c" />
<path d="M667.8 414.1L667.8 420.6L667.8 420.6L669.3 422.2L670.8 423.6L672.4 424.9L673.9 426.2L675.4 427.5L676.9 428.8L678.4 430.0L679.9 431.2L681.4 432.4L683.0 433.6L684.5 434.8L686.0 435.9L687.5 437.1L689.0 438.2L690.5 439.4L692.0 440.5L693.5 441.6L695.1 442.7L696.6 443.8L698.1 445.0L699.6 446.0L701.1 447.1L702.6 448.2L704.1 449.3L705.7 450.4L707.2 451.5L708.7 452.5L710.2 453.6L711.7 454.6L713.2 455.7L714.7 456.7L716.3 457.8L717.8 458.8L719.3 459.8L720.8 460.9L722.3 461.9L723.8 462.9L725.3 463.9L726.8 464.9L728.4 465.9L729.9 466.9L731.4 467.9L732.9 468.9L734.4 469.9L735.9 470.9L737.4 471.9L739.0 472.9L740.5 473.8L742.0 474.8L743.5 475.8L745.0 476.7L746.5 477.7L748.0 478.6L749.6 479.6L751.1 480.5L752.6 481.5L754.1 482.4L755.6 483.3L757.1 484.2L758.6 485.2L760.2 486.1L761.7 487.0L763.2 487.9L764.7 488.8L766.2 489.7L767.7 490.6L769.2 491.5L770.7 492.3L772.3 493.2L773.8 494.1L775.3 494.9L776.8 495.8L778.3 496.6L779.8 497.5L781.3 498.3L782.9 499.2L784.4 500.0L785.9 500.8L787.4 501.6L787.4 495.1L787.4 488.6L785.9 487.8L784.4 487.0L782.9 486.2L781.3 485.3L779.8 484.5L778.3 483.6L776.8 482.8L775.3 481.9L773.8 481.1L772.3 480.2L770.7 479.3L769.2 478.5L767.7 477.6L766.2 476.7L764.7 475.8L763.2 474.9L761.7 474.0L760.2 473.1L758.6 472.2L757.1 471.2L755.6 470.3L754.1 469.4L752.6 468.5L751.1 467.5L749.6 466.6L748.0 465.6L746.5 464.7L745.0 463.7L743.5 462.8L742.0 461.8L740.5 460.8L739.0 459.9L737.4 458.9L735.9 457.9L734.4 456.9L732.9 455.9L731.4 454.9L729.9 453.9L728.4 452.9L726.8 451.9L725.3 450.9L723.8 449.9L722.3 448.9L720.8 447.9L719.3 446.8L717.8 445.8L716.3 444.8L714.7 443.7L713.2 442.7L711.7 441.6L710.2 440.6L708.7 439.5L707.2 438.5L705.7 437.4L704.1 436.3L702.6 435.2L701.1 434.1L699.6 433.0L698.1 432.0L696.6 430.8L695.1 429.7L693.5 428.6L692.0 427.5L690.5 426.4L689.0 425.2L687.5 424.1L686.0 422.9L684.5 421.8L683.0 420.6L681.4 419.4L679.9 418.2L678.4 417.0L676.9 415.8L675.4 414.5L673.9 413.2L672.4 411.9L670.8 410.6L669.3 409.2L667.8 407.6L667.8 407.6Z" fill="#0000f5" fill-rule="evenodd"/>
<path d="M672.3 418.4L672.3 424.9L672.4 424.9L673.9 426.2L675.4 427.5L676.9 428.8L678.4 430.0L679.9 431.2L681.4 432.4L683.0 433.6L684.5 434.8L686.0 435.9L687.5 437.1L689.0 438.2L690.5 439.4L692.0 440.5L693.5 441.6L695.1 442.7L696.6 443.8L698.1 445.0L699.6 446.0L701.1 447.1L702.6 448.2L704.1 449.3L705.7 450.4L707.2 451.5L708.7 452.5L710.2 453.6L711.7 454.6L713.2 455.7L714.7 456.7L716.3 457.8L717.8 458.8L719.3 459.8L720.8 460.9L722.3 461.9L723.8 462.9L725.3 463.9L726.8 464.9L728.4 465.9L729.9 466.9L731.4 467.9L732.9 468.9L734.4 469.9L735.9 470.9L737.4 471.9L739.0 472.9L740.5 473.8L742.0 474.8L743.5 475.8L745.0 476.7L746.5 477.7L748.0 478.6L749.6 479.6L751.1 480.5L752.6 481.5L754.1 482.4L755.6 483.3L757.1 484.2L758.6 485.2L760.2 486.1L761.7 487.0L763.2 487.9L764.7 488.8L766.2 489.7L767.7 490.6L769.2 491.5L770.7 492.3L772.3 493.2L773.8 494.1L775.3 494.9L776.8 495.8L778.3 496.6L779.8 497.5L781.3 498.3L782.9 499.2L784.4 500.0L785.9 500.8L787.4 501.6L787.4 495.1L787.4 488.6L785.9 487.8L784.4 487.0L782.9 486.2L781.3 485.3L779.8 484.5L778.3 483.6L776.8 482.8L775.3 481.9L773.8 481.1L772.3 480.2L770.7 479.3L769.2 478.5L767.7 477.6L766.2 476.7L764.7 475.8L763.2 474.9L761.7 474.0L760.2 473.1L758.6 472.2L757.1 471.2L755.6 470.3L754.1 469.4L752.6 468.5L751.1 467.5L749.6 466.6L748.0 465.6L746.5 464.7L745.0 463.7L743.5 462.8L742.0 461.8L740.5 460.8L739.0 459.9L737.4 458.9L735.9 457.9L734.4 456.9L732.9 455.9L731.4 454.9L729.9 453.9L728.4 452.9L726.8 451.9L725.3 450.9L723.8 449.9L722.3 448.9L720.8 447.9L719.3 446.8L717.8 445.8L716.3 444.8L714.7 443.7L713.2 442.7L711.7 441.6L710.2 440.6L708.7 439.5L707.2 438.5L705.7 437.4L704.1 436.3L702.6 435.2L701.1 434.1L699.6 433.0L698.1 432.0L696.6 430.8L695.1 429.7L693.5 428.6L692.0 427.5L690.5 426.4L689.0 425.2L687.5 424.1L686.0 422.9L684.5 421.8L683.0 420.6L681.4 419.4L679.9 418.2L678.4 417.0L676.9 415.8L675.4 414.5L673.9 413.2L672.4 411.9L672.3 411.9Z" fill="#0096ff" fill-rule="evenodd"/>
<path d="M680.0 424.8L680.0 431.3L681.4 432.4L683.0 433.6L684.5 434.8L686.0 435.9L687.5 437.1L689.0 438.2L690.5 439.4L692.0 440.5L693.5 441.6L695.1 442.7L696.6 443.8L698.1 445.0L699.6 446.0L701.1 447.1L702.6 448.2L704.1 449.3L705.7 450.4L707.2 451.5L708.7 452.5L710.2 453.6L711.7 454.6L713.2 455.7L714.7 456.7L716.3 457.8L717.8 458.8L719.3 459.8L720.8 460.9L722.3 461.9L723.8 462.9L725.3 463.9L726.8 464.9L728.4 465.9L729.9 466.9L731.4 467.9L732.9 468.9L734.4 469.9L735.9 470.9L737.4 471.9L739.0 472.9L740.5 473.8L742.0 474.8L743.5 475.8L745.0 476.7L746.5 477.7L748.0 478.6L749.6 479.6L751.1 480.5L752.6 481.5L754.1 482.4L755.6 483.3L757.1 484.2L758.6 485.2L760.2 486.1L761.7 487.0L763.2 487.9L764.7 488.8L766.2 489.7L767.7 490.6L769.2 491.5L770.7 492.3L772.3 493.2L773.8 494.1L775.3 494.9L776.8 495.8L778.3 496.6L779.8 497.5L781.3 498.3L782.9 499.2L784.4 500.0L785.9 500.8L787.4 501.6L787.4 495.1L787.4 488.6L785.9 487.8L784.4 487.0L782.9 486.2L781.3 485.3L779.8 484.5L778.3 483.6L776.8 482.8L775.3 481.9L773.8 481.1L772.3 480.2L770.7 479.3L769.2 478.5L767.7 477.6L766.2 476.7L764.7 475.8L763.2 474.9L761.7 474.0L760.2 473.1L758.6 472.2L757.1 471.2L755.6 470.3L754.1 469.4L752.6 468.5L751.1 467.5L749.6 466.6L748.0 465.6L746.5 464.7L745.0 463.7L743.5 462.8L742.0 461.8L740.5 460.8L739.0 459.9L737.4 458.9L735.9 457.9L734.4 456.9L732.9 455.9L731.4 454.9L729.9 453.9L728.4 452.9L726.8 451.9L725.3 450.9L723.8 449.9L722.3 448.9L720.8 447.9L719.3 446.8L717.8 445.8L716.3 444.8L714.7 443.7L713.2 442.7L711.7 441.6L710.2 440.6L708.7 439.5L707.2 438.5L705.7 437.4L704.1 436.3L702.6 435.2L701.1 434.1L699.6 433.0L698.1 432.0L696.6 430.8L695.1 429.7L693.5 428.6L692.0 427.5L690.5 426.4L689.0 425.2L687.5 424.1L686.0 422.9L684.5 421.8L683.0 420.6L681.4 419.4L680.0 418.3Z" fill="#00f0f0" fill-rule="evenodd"/>
<path d="M691.6 433.7L691.6 440.2L692.0 440.5L693.5 441.6L695.1 442.7L696.6 443.8L698.1 445.0L699.6 446.0L701.1 447.1L702.6 448.2L704.1 449.3L705.7 450.4L707.2 451.5L708.7 452.5L710.2 453.6L711.7 454.6L713.2 455.7L714.7 456.7L716.3 457.8L717.8 458.8L719.3 459.8L720.8 460.9L722.3 461.9L723.8 462.9L725.3 463.9L726.8 464.9L728.4 465.9L729.9 466.9L731.4 467.9L732.9 468.9L734.4 469.9L735.9 470.9L737.4 471.9L739.0 472.9L740.5 473.8L742.0 474.8L743.5 475.8L745.0 476.7L746.5 477.7L748.0 478.6L749.6 479.6L751.1 480.5L752.6 481.5L754.1 482.4L755.6 483.3L757.1 484.2L758.6 485.2L760.2 486.1L761.7 487.0L763.2 487.9L764.7 488.8L766.2 489.7L767.7 490.6L769.2 491.5L770.7 492.3L772.3 493.2L773.8 494.1L775.3 494.9L776.8 495.8L778.3 496.6L779.8 497.5L781.3 498.3L782.9 499.2L783.5 499.5L783.5 493.0L783.5 486.5L782.9 486.2L781.3 485.3L779.8 484.5L778.3 483.6L776.8 482.8L775.3 481.9L773.8 481.1L772.3 480.2L770.7 479.3L769.2 478.5L767.7 477.6L766.2 476.7L764.7 475.8L763.2 474.9L761.7 474.0L760.2 473.1L758.6 472.2L757.1 471.2L755.6 470.3L754.1 469.4L752.6 468.5L751.1 467.5L749.6 466.6L748.0 465.6L746.5 464.7L745.0 463.7L743.5 462.8L742.0 461.8L740.5 460.8L739.0 459.9L737.4 458.9L735.9 457.9L734.4 456.9L732.9 455.9L731.4 454.9L729.9 453.9L728.4 452.9L726.8 451.9L725.3 450.9L723.8 449.9L722.3 448.9L720.8 447.9L719.3 446.8L717.8 445.8L716.3 444.8L714.7 443.7L713.2 442.7L711.7 441.6L710.2 440.6L708.7 439.5L707.2 438.5L705.7 437.4L704.1 436.3L702.6 435.2L701.1 434.1L699.6 433.0L698.1 432.0L696.6 430.8L695.1 429.7L693.5 428.6L692.0 427.5L691.6 427.2Z" fill="#00e090" fill-rule="evenodd"/>
<path d="M710.4 447.2L710.4 453.7L711.7 454.6L713.2 455.7L714.7 456.7L716.3 457.8L717.8 458.8L719.3 459.8L720.8 460.9L722.3 461.9L723.8 462.9L725.3 463.9L726.8 464.9L728.4 465.9L729.9 466.9L731.4 467.9L732.9 468.9L734.4 469.9L735.9 470.9L737.4 471.9L739.0 472.9L740.5 473.8L742.0 474.8L743.5 475.8L745.0 476.7L746.5 477.7L748.0 478.6L749.6 479.6L751.1 480.5L752.6 481.5L754.1 482.4L755.6 483.3L757.1 484.2L758.6 485.2L760.2 486.1L761.7 487.0L763.2 487.9L764.7 488.8L764.7 482.3L764.7 475.8L763.2 474.9L761.7 474.0L760.2 473.1L758.6 472.2L757.1 471.2L755.6 470.3L754.1 469.4L752.6 468.5L751.1 467.5L749.6 466.6L748.0 465.6L746.5 464.7L745.0 463.7L743.5 462.8L742.0 461.8L740.5 460.8L739.0 459.9L737.4 458.9L735.9 457.9L734.4 456.9L732.9 455.9L731.4 454.9L729.9 453.9L728.4 452.9L726.8 451.9L725.3 450.9L723.8 449.9L722.3 448.9L720.8 447.9L719.3 446.8L717.8 445.8L716.3 444.8L714.7 443.7L713.2 442.7L711.7 441.6L710.4 440.7Z" fill="#00f000" fill-rule="evenodd"/>
<path d="M545.6 497.3 L546.6 496.6 L547.6 496.0 L548.6 495.3 L549.6 494.7 L550.6 494.0 L551.6 493.3 L552.6 492.7 L553.6 492.0 L554.7 491.4 L555.7 490.7 L556.7 490.0 L557.7 489.4 L558.7 488.7 L559.7 488.1 L560.7 487.4 L561.7 486.8 L562.7 486.1 L563.7 485.4 L564.7 484.8 L565.7 484.1 L566.7 483.5 L567.7 482.8 L568.7 482.1 L569.7 481.5 L570.7 480.8 L571.8 480.2 L572.8 479.5 L573.8 478.8 L574.8 478.2 L575.8 477.5 L576.8 476.9 L577.8 476.2 L578.8 475.5 L579.8 474.9 L580.8 474.2 L581.8 473.6 L582.8 472.9 L583.8 472.3 L584.8 471.6 L585.8 470.9 L586.8 470.3 L587.8 469.6 L588.9 469.0 L589.9 468.3 L590.9 467.6 L591.9 467.0 L592.9 466.3 L593.9 465.7 L594.9 465.0 L595.9 464.3 L596.9 463.7 L597.9 463.0 L598.9 462.4 L599.9 461.7 L600.9 461.0 L601.9 460.4 L602.9 459.7 L603.9 459.1 L604.9 458.4 L606.0 457.8 L607.0 457.1 L608.0 456.4 L609.0 455.8 L610.0 455.1 L611.0 454.5 L612.0 453.8 L613.0 453.1 L614.0 452.5 L615.0 451.8 L616.0 451.2 L617.0 450.5 L618.0 449.8 L619.0 449.2 L620.0 448.5 L621.0 447.9 L622.0 447.2 L623.0 446.5 L624.1 445.9 L625.1 445.2 L626.1 444.6 L627.1 443.9 L628.1 443.2 L629.1 442.6 L630.1 441.9 L631.1 441.3 L632.1 440.6 L633.1 440.0 L634.1 439.3 L635.1 438.6 L636.1 438.0 L637.1 437.3 L638.1 436.7 L639.1 436.0 L640.1 435.3 L641.2 434.7 L642.2 434.0 L643.2 433.4 L644.2 432.7 L645.2 432.0 L646.2 431.4 L647.2 430.7 L648.2 430.1 L649.2 429.4 L650.2 428.7 L651.2 428.1 L652.2 427.4 L653.2 426.8 L654.2 426.1 L655.2 425.5 L656.2 424.8 L657.2 424.1 L658.3 423.5 L659.3 422.8 L660.3 422.2 L661.3 421.5 L662.3 420.8 L663.3 420.2 L664.3 419.5 L665.3 418.9 L666.3 418.2 L666.3 418.2 L667.8 420.5 L669.3 422.1 L670.8 423.5 L672.4 424.8 L673.9 426.1 L675.4 427.4 L676.9 428.7 L678.4 429.9 L679.9 431.1 L681.4 432.3 L683.0 433.4 L684.5 434.6 L686.0 435.8 L687.5 436.9 L689.0 438.1 L690.5 439.2 L692.0 440.3 L693.5 441.4 L695.1 442.5 L696.6 443.7 L698.1 444.8 L699.6 445.8 L701.1 446.9 L702.6 448.0 L704.1 449.1 L705.7 450.2 L707.2 451.2 L708.7 452.3 L710.2 453.4 L711.7 454.4 L713.2 455.5 L714.7 456.5 L716.3 457.5 L717.8 458.6 L719.3 459.6 L720.8 460.6 L722.3 461.7 L723.8 462.7 L725.3 463.7 L726.8 464.7 L728.4 465.7 L729.9 466.7 L731.4 467.7 L732.9 468.7 L734.4 469.7 L735.9 470.7 L737.4 471.6 L739.0 472.6 L740.5 473.6 L742.0 474.6 L743.5 475.5 L745.0 476.5 L746.5 477.4 L748.0 478.4 L749.6 479.3 L751.1 480.3 L752.6 481.2 L754.1 482.1 L755.6 483.1 L757.1 484.0 L758.6 484.9 L760.2 485.8 L761.7 486.7 L763.2 487.7 L764.7 488.6 L766.2 489.5 L767.7 490.3 L769.2 491.2 L770.7 492.1 L772.3 493.0 L773.8 493.9 L775.3 494.7 L776.8 495.6 L778.3 496.5 L779.8 497.3 L781.3 498.1 L782.9 499.0 L784.4 499.8 L785.9 500.6 L787.4 501.5 L787.4 501.5 L786.4 502.1 L785.4 502.8 L784.4 503.4 L783.4 504.1 L782.4 504.7 L781.4 505.4 L780.4 506.0 L779.4 506.7 L778.3 507.4 L777.3 508.2 L776.3 508.9 L775.3 509.7 L774.3 510.5 L773.3 511.3 L772.3 512.2 L771.3 513.1 L770.3 514.0 L769.3 514.9 L768.3 515.8 L767.3 516.7 L766.3 517.6 L765.3 518.6 L764.3 519.5 L763.3 520.4 L762.3 521.3 L761.2 522.3 L760.2 523.2 L759.2 524.1 L758.2 525.0 L757.2 525.9 L756.2 526.8 L755.2 527.7 L754.2 528.6 L753.2 529.5 L752.2 530.4 L751.2 531.2 L750.2 532.1 L749.2 533.0 L748.2 533.8 L747.2 534.7 L746.2 535.5 L745.2 536.3 L744.1 537.1 L743.1 537.9 L742.1 538.7 L741.1 539.5 L740.1 540.3 L739.1 541.1 L738.1 541.9 L737.1 542.6 L736.1 543.4 L735.1 544.1 L734.1 544.8 L733.1 545.6 L732.1 546.3 L731.1 547.0 L730.1 547.7 L729.1 548.3 L728.1 549.0 L727.1 549.7 L726.0 550.3 L725.0 551.0 L724.0 551.6 L723.0 552.2 L722.0 552.9 L721.0 553.5 L720.0 554.1 L719.0 554.6 L718.0 555.2 L717.0 555.8 L716.0 556.4 L715.0 556.9 L714.0 557.5 L713.0 558.0 L712.0 558.5 L711.0 559.0 L710.0 559.5 L708.9 560.0 L707.9 560.5 L706.9 561.0 L705.9 561.5 L704.9 562.0 L703.9 562.4 L702.9 562.9 L701.9 563.3 L700.9 563.8 L699.9 564.2 L698.9 564.6 L697.9 565.0 L696.9 565.4 L695.9 565.8 L694.9 566.2 L693.9 566.6 L692.9 567.0 L691.8 567.4 L690.8 567.7 L689.8 568.1 L688.8 568.5 L687.8 568.8 L686.8 569.2 L685.8 569.5 L684.8 569.9 L683.8 570.2 L682.8 570.5 L681.8 570.9 L680.8 571.2 L679.8 571.5 L678.8 571.8 L677.8 572.1 L676.8 572.5 L675.8 572.8 L674.7 573.1 L673.7 573.4 L672.7 573.7 L671.7 574.0 L670.7 574.3 L669.7 574.6 L668.7 574.9 L667.7 575.2 L666.7 575.5 L666.7 575.5 L665.2 574.5 L663.7 573.6 L662.2 572.6 L660.6 571.6 L659.1 570.6 L657.6 569.7 L656.1 568.7 L654.6 567.7 L653.1 566.7 L651.6 565.7 L650.0 564.8 L648.5 563.8 L647.0 562.8 L645.5 561.8 L644.0 560.9 L642.5 559.9 L641.0 558.9 L639.5 557.9 L637.9 557.0 L636.4 556.0 L634.9 555.0 L633.4 554.0 L631.9 553.0 L630.4 552.1 L628.9 551.1 L627.3 550.1 L625.8 549.1 L624.3 548.2 L622.8 547.2 L621.3 546.2 L619.8 545.2 L618.3 544.2 L616.7 543.3 L615.2 542.3 L613.7 541.3 L612.2 540.3 L610.7 539.4 L609.2 538.4 L607.7 537.4 L606.2 536.4 L604.6 535.4 L603.1 534.5 L601.6 533.5 L600.1 532.5 L598.6 531.5 L597.1 530.6 L595.6 529.6 L594.0 528.6 L592.5 527.6 L591.0 526.6 L589.5 525.7 L588.0 524.7 L586.5 523.7 L585.0 522.7 L583.4 521.8 L581.9 520.8 L580.4 519.8 L578.9 518.8 L577.4 517.8 L575.9 516.9 L574.4 515.9 L572.8 514.9 L571.3 513.9 L569.8 513.0 L568.3 512.0 L566.8 511.0 L565.3 510.0 L563.8 509.0 L562.3 508.1 L560.7 507.1 L559.2 506.1 L557.7 505.1 L556.2 504.2 L554.7 503.2 L553.2 502.2 L551.7 501.2 L550.1 500.2 L548.6 499.3 L547.1 498.3 L545.6 497.3Z" fill="#00008c" />
<path d="M664.8 422.5L665.8 421.9L666.8 421.2L667.8 420.5L667.8 420.5L669.3 422.1L670.8 423.5L672.4 424.8L673.9 426.1L675.4 427.4L676.9 428.7L678.4 429.9L679.9 431.1L681.4 432.3L683.0 433.4L684.5 434.6L686.0 435.8L687.5 436.9L689.0 438.1L690.5 439.2L692.0 440.3L693.5 441.4L695.1 442.5L696.6 443.7L698.1 444.8L699.6 445.8L701.1 446.9L702.6 448.0L704.1 449.1L705.7 450.2L707.2 451.2L708.7 452.3L710.2 453.4L711.7 454.4L713.2 455.5L714.7 456.5L716.3 457.5L717.8 458.6L719.3 459.6L720.8 460.6L722.3 461.7L723.8 462.7L725.3 463.7L726.8 464.7L728.4 465.7L729.9 466.7L731.4 467.7L732.9 468.7L734.4 469.7L735.9 470.7L737.4 471.6L739.0 472.6L740.5 473.6L742.0 474.6L743.5 475.5L745.0 476.5L746.5 477.4L748.0 478.4L749.6 479.3L751.1 480.3L752.6 481.2L754.1 482.1L755.6 483.1L757.1 484.0L758.6 484.9L760.2 485.8L761.7 486.7L763.2 487.7L764.7 488.6L766.2 489.5L767.7 490.3L769.2 491.2L770.7 492.1L772.3 493.0L773.8 493.9L775.3 494.7L776.8 495.6L778.3 496.5L779.8 497.3L781.3 498.1L782.9 499.0L784.4 499.8L785.9 500.6L787.4 501.5L786.4 502.1L785.4 502.8L784.4 503.4L783.4 504.1L782.4 504.7L781.4 505.4L780.4 506.0L779.4 506.7L778.3 507.4L777.3 508.2L776.3 508.9L775.3 509.7L774.3 510.5L773.3 511.3L772.3 512.2L771.3 513.1L770.3 514.0L769.3 514.9L768.3 515.8L767.3 516.7L766.3 517.6L765.3 518.6L764.3 519.5L763.3 520.4L762.3 521.3L761.2 522.3L760.2 523.2L759.2 524.1L758.2 525.0L757.2 525.9L756.2 526.8L755.2 527.7L754.2 528.6L753.2 529.5L752.2 530.4L751.2 531.2L750.2 532.1L749.2 533.0L748.2 533.8L747.2 534.7L746.2 535.5L745.2 536.3L744.1 537.1L743.1 537.9L742.1 538.7L741.1 539.5L740.1 540.3L739.1 541.1L738.1 541.9L737.1 542.6L736.1 543.4L735.1 544.1L734.1 544.8L733.1 545.6L732.1 546.3L731.1 547.0L730.1 547.7L729.1 548.3L728.1 549.0L727.1 549.7L726.0 550.3L725.0 551.0L724.0 551.6L723.0 552.2L722.0 552.9L721.0 553.5L720.0 554.1L719.0 554.6L718.0 555.2L717.0 555.8L716.0 556.4L715.0 556.9L714.0 557.5L713.0 558.0L712.0 558.5L711.0 559.0L710.0 559.5L708.9 560.0L707.9 560.5L706.9 561.0L705.9 561.5L704.9 562.0L703.9 562.4L702.9 562.9L701.9 563.3L700.9 563.8L699.9 564.2L698.9 564.6L697.9 565.0L696.9 565.4L695.9 565.8L694.9 566.2L693.9 566.6L692.9 567.0L691.8 567.4L690.8 567.7L689.8 568.1L688.8 568.5L687.8 568.8L686.8 569.2L685.8 569.5L684.8 569.9L683.8 570.2L682.8 570.5L681.8 570.9L680.8 571.2L679.8 571.5L678.8 571.8L677.8 572.1L676.8 572.5L675.8 572.8L674.7 573.1L673.7 573.4L672.7 573.7L671.7 574.0L670.7 574.3L670.5 574.4L669.0 573.4L667.5 572.4L666.0 571.4L664.5 570.4L663.0 569.5L661.5 568.5L660.0 567.5L658.5 566.5L657.0 565.5L655.5 564.5L654.0 563.5L652.5 562.6L651.0 561.6L649.5 560.6L648.0 559.6L646.5 558.6L646.4 558.5L645.0 557.6L643.5 556.6L642.0 555.6L640.6 554.6L639.1 553.6L637.6 552.6L636.1 551.6L634.7 550.6L633.2 549.6L631.7 548.6L630.3 547.6L628.8 546.6L627.3 545.5L625.9 544.5L624.4 543.5L623.0 542.5L621.5 541.5L620.1 540.4L618.7 539.4L617.3 538.4L617.2 538.4L615.8 537.3L614.4 536.3L613.0 535.3L611.6 534.2L610.2 533.2L608.8 532.1L607.4 531.1L606.0 530.0L604.7 529.0L604.6 528.9L603.3 527.8L601.9 526.8L600.6 525.7L599.2 524.6L597.9 523.5L597.1 522.8L596.6 522.3L595.3 521.2L594.1 520.1L592.8 518.9L592.1 518.2L591.6 517.8L590.4 516.6L589.2 515.4L588.5 514.6L588.1 514.1L587.0 512.9L586.0 511.7L586.0 511.6L585.0 510.3L584.2 509.2L584.0 508.9L583.2 507.5L582.9 507.1L582.4 506.1L582.0 505.1L581.7 504.5L581.3 503.4L581.2 502.9L580.9 501.9L580.8 501.2L580.7 500.4L580.7 499.3L580.7 499.1L580.7 497.8L580.8 497.3L580.9 496.6L581.1 495.4L581.3 495.0L581.5 494.3L581.9 493.3L582.3 492.3L582.3 492.3L582.8 491.3L583.4 490.3L584.0 489.4L584.2 489.2L584.6 488.5L585.3 487.6L585.9 486.8L586.6 485.9L587.4 485.1L587.4 485.1L588.1 484.2L588.9 483.4L589.7 482.6L590.5 481.8L591.3 481.1L592.1 480.3L593.0 479.5L593.4 479.2L593.8 478.8L594.7 478.0L595.6 477.3L596.5 476.5L597.3 475.8L598.3 475.1L599.2 474.4L600.1 473.6L601.0 472.9L601.9 472.2L602.9 471.5L603.8 470.8L604.8 470.1L605.7 469.4L606.7 468.7L607.6 468.0L608.6 467.4L609.6 466.7L610.5 466.0L611.4 465.4L611.5 465.3L612.5 464.6L613.5 464.0L614.4 463.3L615.4 462.6L616.4 461.9L617.3 461.2L618.3 460.5L619.2 459.8L620.2 459.1L621.1 458.4L622.0 457.7L622.9 457.0L623.8 456.3L624.7 455.5L625.6 454.8L626.4 454.0L627.2 453.2L627.7 452.8L628.0 452.4L628.8 451.6L629.6 450.8L630.3 450.0L631.1 449.2L631.9 448.4L632.6 447.6L632.6 447.5L633.4 446.7L634.2 446.0L635.0 445.2L635.8 444.4L636.7 443.6L637.5 442.8L638.3 442.1L639.2 441.3L639.2 441.2L640.0 440.6L640.9 439.8L641.8 439.1L642.8 438.4L643.7 437.7L644.6 437.0L645.5 436.3L646.4 435.5L647.4 434.8L648.3 434.1L649.2 433.4L650.2 432.7L651.1 432.0L652.1 431.3L653.0 430.7L654.0 430.0L655.0 429.3L655.9 428.6L656.9 427.9L657.9 427.2L658.9 426.5L659.8 425.9L660.8 425.2L661.8 424.5L662.8 423.9L663.8 423.2L664.4 422.8Z" fill="#0000f5" fill-rule="evenodd"/>
<path d="M670.3 426.1L671.3 425.5L672.3 424.8L672.4 424.8L673.9 426.1L675.4 427.4L676.9 428.7L678.4 429.9L679.9 431.1L681.4 432.3L683.0 433.4L684.5 434.6L686.0 435.8L687.5 436.9L689.0 438.1L690.5 439.2L692.0 440.3L693.5 441.4L695.1 442.5L696.6 443.7L698.1 444.8L699.6 445.8L701.1 446.9L702.6 448.0L704.1 449.1L705.7 450.2L707.2 451.2L708.7 452.3L710.2 453.4L711.7 454.4L713.2 455.5L714.7 456.5L716.3 457.5L717.8 458.6L719.3 459.6L720.8 460.6L722.3 461.7L723.8 462.7L725.3 463.7L726.8 464.7L728.4 465.7L729.9 466.7L731.4 467.7L732.9 468.7L734.4 469.7L735.9 470.7L737.4 471.6L739.0 472.6L740.5 473.6L742.0 474.6L743.5 475.5L745.0 476.5L746.5 477.4L748.0 478.4L749.6 479.3L751.1 480.3L752.6 481.2L754.1 482.1L755.6 483.1L757.1 484.0L758.6 484.9L760.2 485.8L761.7 486.7L763.2 487.7L764.7 488.6L766.2 489.5L767.7 490.3L769.2 491.2L770.7 492.1L772.3 493.0L773.8 493.9L775.3 494.7L776.8 495.6L778.3 496.5L779.8 497.3L781.3 498.1L782.9 499.0L784.4 499.8L785.9 500.6L787.4 501.5L786.4 502.1L785.4 502.8L784.4 503.4L783.4 504.1L782.4 504.7L781.4 505.4L780.4 506.0L779.4 506.7L778.3 507.4L777.3 508.2L776.3 508.9L775.3 509.7L774.3 510.5L773.3 511.3L772.3 512.2L771.3 513.1L770.3 514.0L769.3 514.9L768.3 515.8L767.3 516.7L766.3 517.6L765.3 518.6L764.3 519.5L763.3 520.4L762.3 521.3L761.2 522.3L760.2 523.2L759.2 524.1L758.2 525.0L757.2 525.9L756.2 526.8L755.2 527.7L754.2 528.6L753.2 529.5L752.2 530.4L751.2 531.2L750.2 532.1L749.2 533.0L748.2 533.8L747.2 534.7L746.2 535.5L745.2 536.3L744.1 537.1L743.1 537.9L742.1 538.7L741.1 539.5L740.1 540.3L739.1 541.1L738.1 541.9L737.1 542.6L736.1 543.4L735.1 544.1L734.1 544.8L733.1 545.6L732.1 546.3L731.1 547.0L730.1 547.7L729.1 548.3L728.1 549.0L727.1 549.7L726.0 550.3L725.0 551.0L724.0 551.6L723.0 552.2L722.0 552.9L721.0 553.5L720.0 554.1L719.0 554.6L718.0 555.2L717.0 555.8L716.0 556.4L715.0 556.9L714.0 557.5L713.0 558.0L712.0 558.5L711.0 559.0L710.0 559.5L708.9 560.0L707.9 560.5L706.9 561.0L705.9 561.5L704.9 562.0L703.9 562.4L702.9 562.9L701.9 563.3L700.9 563.8L699.9 564.2L698.9 564.6L697.9 565.0L696.9 565.4L695.9 565.8L694.9 566.2L693.9 566.6L692.9 567.0L691.8 567.4L690.8 567.7L689.8 568.1L688.8 568.5L687.8 568.8L686.8 569.2L685.8 569.5L684.8 569.9L683.8 570.2L682.8 570.5L681.8 570.9L680.8 571.2L679.8 571.5L678.8 571.8L677.8 572.1L676.8 572.5L675.8 572.8L674.7 573.1L674.4 573.2L672.9 572.2L671.4 571.2L669.9 570.2L668.4 569.3L666.9 568.3L665.4 567.3L663.9 566.3L662.4 565.3L660.9 564.3L659.4 563.3L657.9 562.3L656.4 561.3L655.0 560.3L653.5 559.3L652.0 558.3L651.7 558.1L650.6 557.3L649.1 556.3L647.7 555.3L646.2 554.2L644.8 553.2L643.3 552.2L641.9 551.2L640.4 550.1L639.0 549.1L637.6 548.1L636.2 547.0L634.8 546.0L633.4 544.9L633.2 544.8L632.0 543.9L630.6 542.8L629.2 541.8L627.8 540.7L626.4 539.6L625.1 538.6L623.7 537.5L623.1 537.0L622.4 536.4L621.0 535.3L619.7 534.2L618.4 533.1L617.1 532.0L616.4 531.4L615.8 530.8L614.5 529.7L613.3 528.5L612.0 527.4L611.5 526.9L610.8 526.2L609.6 525.0L608.4 523.8L607.8 523.2L607.3 522.6L606.2 521.4L605.1 520.1L605.0 520.1L604.0 518.9L603.0 517.6L602.8 517.3L602.0 516.3L601.0 514.9L601.0 514.9L600.2 513.5L599.7 512.7L599.3 512.1L598.6 510.7L598.6 510.6L597.9 509.1L597.8 508.9L597.3 507.5L597.2 507.2L596.9 505.8L596.8 505.6L596.5 504.1L596.5 504.1L596.4 502.7L596.3 502.2L596.3 501.4L596.4 500.2L596.4 500.1L596.5 498.9L596.7 498.1L596.7 497.7L597.0 496.6L597.3 495.7L597.3 495.5L597.7 494.4L598.2 493.4L598.4 493.0L598.7 492.4L599.2 491.4L599.7 490.5L600.1 489.9L600.3 489.6L600.9 488.7L601.6 487.8L602.3 486.9L602.9 486.1L603.0 486.0L603.7 485.2L604.4 484.4L605.2 483.5L606.0 482.7L606.8 481.9L607.6 481.2L607.8 480.9L608.4 480.4L609.2 479.6L610.1 478.9L611.0 478.1L611.9 477.4L612.7 476.6L613.7 475.9L614.6 475.2L615.5 474.5L616.4 473.8L617.4 473.1L618.4 472.4L619.3 471.7L620.3 471.1L621.3 470.4L622.3 469.7L623.3 469.1L624.3 468.4L625.3 467.7L626.3 467.1L627.3 466.4L628.4 465.8L629.4 465.1L630.4 464.5L631.5 463.9L632.5 463.2L633.5 462.6L634.5 461.9L635.5 461.2L636.5 460.6L637.5 459.9L638.4 459.2L639.4 458.5L640.3 457.8L640.6 457.5L641.1 457.0L642.0 456.2L642.7 455.4L643.5 454.6L644.2 453.8L644.9 452.9L645.2 452.5L645.5 452.0L646.2 451.1L646.7 450.2L647.3 449.2L647.5 449.0L647.9 448.3L648.5 447.4L649.1 446.5L649.6 445.7L649.7 445.5L650.3 444.6L650.9 443.7L651.6 442.8L652.3 442.0L652.3 441.9L653.0 441.1L653.7 440.3L654.4 439.4L655.2 438.6L656.0 437.8L656.7 437.1L656.8 437.0L657.6 436.2L658.4 435.5L659.3 434.7L660.1 434.0L661.0 433.2L661.9 432.5L662.8 431.7L663.7 431.0L664.6 430.3L665.5 429.6L666.5 428.9L667.4 428.2L668.4 427.5L669.3 426.8L669.4 426.8Z" fill="#0096ff" fill-rule="evenodd"/>
<path d="M670.3 439.3L671.1 438.5L671.9 437.7L672.7 436.9L673.5 436.1L674.4 435.4L675.3 434.6L676.2 433.9L677.1 433.2L678.0 432.5L679.0 431.8L680.0 431.1L681.4 432.3L683.0 433.4L684.5 434.6L686.0 435.8L687.5 436.9L689.0 438.1L690.5 439.2L692.0 440.3L693.5 441.4L695.1 442.5L696.6 443.7L698.1 444.8L699.6 445.8L701.1 446.9L702.6 448.0L704.1 449.1L705.7 450.2L707.2 451.2L708.7 452.3L710.2 453.4L711.7 454.4L713.2 455.5L714.7 456.5L716.3 457.5L717.8 458.6L719.3 459.6L720.8 460.6L722.3 461.7L723.8 462.7L725.3 463.7L726.8 464.7L728.4 465.7L729.9 466.7L731.4 467.7L732.9 468.7L734.4 469.7L735.9 470.7L737.4 471.6L739.0 472.6L740.5 473.6L742.0 474.6L743.5 475.5L745.0 476.5L746.5 477.4L748.0 478.4L749.6 479.3L751.1 480.3L752.6 481.2L754.1 482.1L755.6 483.1L757.1 484.0L758.6 484.9L760.2 485.8L761.7 486.7L763.2 487.7L764.7 488.6L766.2 489.5L767.7 490.3L769.2 491.2L770.7 492.1L772.3 493.0L773.8 493.9L775.3 494.7L776.8 495.6L778.3 496.5L779.8 497.3L781.3 498.1L782.9 499.0L784.4 499.8L785.9 500.6L787.4 501.5L786.4 502.1L785.4 502.8L784.4 503.4L783.4 504.1L782.4 504.7L781.4 505.4L780.4 506.0L779.4 506.7L778.3 507.4L777.3 508.2L776.3 508.9L775.3 509.7L774.3 510.5L773.3 511.3L772.3 512.2L771.3 513.1L770.3 514.0L769.3 514.9L768.3 515.8L767.3 516.7L766.3 517.6L765.3 518.6L764.3 519.5L763.3 520.4L762.3 521.3L761.2 522.3L760.2 523.2L759.2 524.1L758.2 525.0L757.2 525.9L756.2 526.8L755.2 527.7L754.2 528.6L753.2 529.5L752.2 530.4L751.2 531.2L750.2 532.1L749.2 533.0L748.2 533.8L747.2 534.7L746.2 535.5L745.2 536.3L744.1 537.1L743.1 537.9L742.1 538.7L741.1 539.5L740.1 540.3L739.1 541.1L738.1 541.9L737.1 542.6L736.1 543.4L735.1 544.1L734.1 544.8L733.1 545.6L732.1 546.3L731.1 547.0L730.1 547.7L729.1 548.3L728.1 549.0L727.1 549.7L726.0 550.3L725.0 551.0L724.0 551.6L723.0 552.2L722.0 552.9L721.0 553.5L720.0 554.1L719.0 554.6L718.0 555.2L717.0 555.8L716.0 556.4L715.0 556.9L714.0 557.5L713.0 558.0L712.0 558.5L711.0 559.0L710.0 559.5L708.9 560.0L707.9 560.5L706.9 561.0L705.9 561.5L704.9 562.0L703.9 562.4L702.9 562.9L701.9 563.3L700.9 563.8L699.9 564.2L698.9 564.6L697.9 565.0L696.9 565.4L695.9 565.8L694.9 566.2L693.9 566.6L692.9 567.0L691.8 567.4L690.8 567.7L689.8 568.1L688.8 568.5L687.8 568.8L686.8 569.2L685.8 569.5L684.8 569.9L683.8 570.2L682.8 570.5L681.8 570.9L680.8 571.2L679.8 571.5L678.8 571.8L678.3 572.0L676.8 571.0L675.3 570.0L673.8 569.0L672.3 568.0L670.8 567.0L669.3 566.1L667.8 565.1L666.4 564.1L664.9 563.0L663.4 562.0L662.0 561.0L660.5 560.0L659.1 559.0L658.2 558.4L657.6 558.0L656.2 557.0L654.7 555.9L653.3 554.9L651.9 553.9L650.5 552.8L649.0 551.8L647.6 550.7L646.2 549.7L644.9 548.6L643.8 547.8L643.5 547.5L642.1 546.5L640.7 545.4L639.4 544.3L638.0 543.2L636.7 542.1L635.4 541.1L635.4 541.0L634.1 539.9L632.8 538.8L631.5 537.7L630.2 536.6L629.5 536.0L628.9 535.4L627.7 534.3L626.5 533.1L625.2 531.9L625.1 531.8L624.0 530.7L622.9 529.5L621.7 528.3L621.7 528.3L620.6 527.1L619.5 525.8L618.9 525.2L618.4 524.6L617.4 523.3L616.7 522.5L616.4 522.0L615.4 520.6L615.0 520.0L614.5 519.3L613.6 517.9L613.5 517.8L612.8 516.5L612.4 515.7L612.0 515.0L611.5 513.8L611.3 513.5L610.7 512.0L610.7 511.9L610.2 510.4L610.2 510.3L609.8 508.8L609.7 508.6L609.5 507.3L609.4 506.8L609.4 505.9L609.3 504.9L609.3 504.6L609.3 503.3L609.3 502.9L609.4 502.0L609.6 500.8L609.6 500.8L609.8 499.7L610.1 498.6L610.2 498.5L610.5 497.5L610.9 496.4L611.2 495.9L611.3 495.4L611.8 494.4L612.4 493.5L612.7 492.9L612.9 492.5L613.5 491.6L614.1 490.7L614.8 489.8L615.2 489.2L615.5 488.9L616.2 488.1L616.9 487.2L617.7 486.4L618.5 485.6L619.2 484.8L619.9 484.2L620.1 484.0L620.9 483.3L621.8 482.5L622.6 481.8L623.5 481.0L624.4 480.3L625.4 479.6L626.3 478.9L627.3 478.2L628.2 477.5L629.2 476.9L630.2 476.2L631.2 475.6L632.3 474.9L633.3 474.3L634.4 473.7L635.4 473.0L636.5 472.4L637.6 471.8L638.7 471.2L639.8 470.6L641.0 470.1L642.1 469.5L643.2 468.9L643.4 468.8L644.4 468.3L645.5 467.8L646.7 467.2L647.8 466.6L648.9 466.0L650.1 465.5L651.2 464.9L652.3 464.3L653.4 463.7L654.4 463.0L655.4 462.4L656.4 461.7L657.3 461.0L658.2 460.2L659.0 459.4L659.7 458.6L660.4 457.7L660.4 457.7L661.0 456.8L661.5 455.8L662.0 454.8L662.1 454.6L662.5 453.8L662.9 452.8L663.2 451.9L663.3 451.7L663.7 450.7L664.1 449.7L664.2 449.2L664.5 448.6L665.0 447.6L665.4 446.6L665.5 446.5L665.9 445.6L666.5 444.7L667.0 443.7L667.3 443.3L667.6 442.8L668.3 441.9L668.9 441.0L669.6 440.1L670.3 439.4Z" fill="#00f0f0" fill-rule="evenodd"/>
<path d="M687.9 442.8L688.8 442.1L689.7 441.4L690.6 440.7L691.6 440.0L692.0 440.3L693.5 441.4L695.1 442.5L696.6 443.7L698.1 444.8L699.6 445.8L701.1 446.9L702.6 448.0L704.1 449.1L705.7 450.2L707.2 451.2L708.7 452.3L710.2 453.4L711.7 454.4L713.2 455.5L714.7 456.5L716.3 457.5L717.8 458.6L719.3 459.6L720.8 460.6L722.3 461.7L723.8 462.7L725.3 463.7L726.8 464.7L728.4 465.7L729.9 466.7L731.4 467.7L732.9 468.7L734.4 469.7L735.9 470.7L737.4 471.6L739.0 472.6L740.5 473.6L742.0 474.6L743.5 475.5L745.0 476.5L746.5 477.4L748.0 478.4L749.6 479.3L751.1 480.3L752.6 481.2L754.1 482.1L755.6 483.1L757.1 484.0L758.6 484.9L760.2 485.8L761.7 486.7L763.2 487.7L764.7 488.6L766.2 489.5L767.7 490.3L769.2 491.2L770.7 492.1L772.3 493.0L773.8 493.9L775.3 494.7L776.8 495.6L778.3 496.5L779.8 497.3L781.3 498.1L782.9 499.0L783.5 499.3L782.5 500.0L781.4 500.6L780.3 501.2L779.2 501.8L778.1 502.4L777.0 503.0L776.0 503.6L775.1 504.4L774.4 505.2L774.0 506.3L774.0 506.7L773.9 507.6L774.2 508.5L774.4 509.2L774.9 510.1L774.3 510.5L773.3 511.3L772.3 512.2L771.3 513.1L770.3 514.0L769.3 514.9L768.3 515.8L767.3 516.7L766.3 517.6L765.3 518.6L764.3 519.5L763.3 520.4L762.3 521.3L761.2 522.3L760.2 523.2L759.2 524.1L758.2 525.0L757.2 525.9L756.2 526.8L755.2 527.7L754.2 528.6L753.2 529.5L752.2 530.4L751.2 531.2L750.2 532.1L749.2 533.0L748.2 533.8L747.2 534.7L746.2 535.5L745.2 536.3L744.1 537.1L743.1 537.9L742.1 538.7L741.1 539.5L740.1 540.3L739.1 541.1L738.1 541.9L737.1 542.6L736.1 543.4L735.1 544.1L734.1 544.8L733.1 545.6L732.1 546.3L731.1 547.0L730.1 547.7L729.1 548.3L728.1 549.0L727.1 549.7L726.0 550.3L725.0 551.0L724.0 551.6L723.0 552.2L722.0 552.9L721.0 553.5L720.0 554.1L719.0 554.6L718.0 555.2L717.0 555.8L716.0 556.4L715.0 556.9L714.0 557.5L713.0 558.0L712.0 558.5L711.0 559.0L710.0 559.5L708.9 560.0L707.9 560.5L706.9 561.0L705.9 561.5L704.9 562.0L703.9 562.4L702.9 562.9L701.9 563.3L700.9 563.8L699.9 564.2L698.9 564.6L697.9 565.0L696.9 565.4L695.9 565.8L694.9 566.2L693.9 566.6L692.9 567.0L691.8 567.4L690.8 567.7L689.8 568.1L688.8 568.5L687.8 568.8L686.8 569.2L685.8 569.5L684.8 569.9L683.8 570.2L682.8 570.5L682.4 570.7L680.9 569.7L679.4 568.7L677.9 567.7L676.4 566.7L674.9 565.7L673.4 564.7L672.0 563.7L670.5 562.7L669.0 561.7L667.6 560.7L666.3 559.7L666.1 559.7L664.7 558.6L663.3 557.6L661.9 556.6L660.4 555.5L659.0 554.5L657.6 553.4L656.3 552.3L654.9 551.3L653.5 550.2L653.4 550.1L652.2 549.1L650.8 548.0L649.5 547.0L648.1 545.9L646.8 544.7L645.9 544.0L645.5 543.6L644.2 542.5L642.9 541.4L641.7 540.2L640.6 539.2L640.4 539.1L639.2 537.9L638.0 536.7L636.8 535.6L636.5 535.3L635.6 534.4L634.5 533.1L633.4 531.9L633.3 531.9L632.2 530.7L631.1 529.4L630.8 529.0L630.1 528.1L629.1 526.8L628.7 526.3L628.1 525.5L627.2 524.2L627.0 523.9L626.3 522.8L625.6 521.7L625.4 521.4L624.6 519.9L624.4 519.6L623.8 518.4L623.5 517.7L623.2 516.9L622.8 516.0L622.6 515.3L622.2 514.3L622.1 513.7L621.8 512.7L621.6 512.0L621.5 511.2L621.3 510.2L621.3 509.8L621.2 508.4L621.2 508.4L621.2 507.1L621.2 506.4L621.3 505.8L621.4 504.6L621.5 504.3L621.6 503.4L621.9 502.3L622.0 501.9L622.2 501.2L622.6 500.1L622.9 499.4L623.0 499.1L623.5 498.1L624.0 497.1L624.4 496.4L624.6 496.2L625.1 495.2L625.8 494.3L626.4 493.4L627.0 492.8L627.1 492.6L627.8 491.7L628.6 490.9L629.4 490.1L630.2 489.3L631.0 488.5L631.8 487.8L632.6 487.1L632.7 487.0L633.6 486.3L634.5 485.6L635.5 484.9L636.4 484.2L637.4 483.5L638.4 482.9L639.5 482.2L640.5 481.6L641.6 481.0L642.7 480.4L643.7 479.8L643.8 479.8L644.9 479.2L646.1 478.6L647.2 478.1L648.4 477.6L649.6 477.0L650.9 476.5L652.1 476.0L653.1 475.6L653.4 475.5L654.7 475.0L656.0 474.6L657.3 474.1L658.6 473.7L659.6 473.4L660.0 473.2L661.3 472.8L662.7 472.4L664.1 471.9L665.4 471.5L665.4 471.5L666.8 471.1L668.1 470.6L669.5 470.2L670.8 469.7L671.7 469.3L672.0 469.2L673.2 468.7L674.4 468.1L675.5 467.5L676.5 466.9L677.4 466.2L678.2 465.4L678.7 464.8L678.9 464.5L679.5 463.6L679.9 462.6L680.2 461.8L680.3 461.5L680.6 460.4L680.8 459.5L680.8 459.2L681.0 458.0L681.1 457.3L681.2 456.8L681.4 455.6L681.5 455.1L681.6 454.5L681.9 453.3L682.0 452.8L682.1 452.2L682.5 451.1L682.8 450.3L682.9 450.1L683.3 449.1L683.8 448.1L684.2 447.3L684.4 447.1L685.0 446.2L685.7 445.3L686.4 444.5L687.1 443.6L687.5 443.2Z" fill="#00e090" fill-rule="evenodd"/>
<path d="M639.7 495.5L640.5 494.8L641.4 494.0L642.2 493.2L643.1 492.5L644.1 491.8L645.0 491.1L646.0 490.4L647.0 489.8L648.1 489.1L649.1 488.5L650.2 487.9L651.4 487.3L652.5 486.8L653.7 486.2L654.6 485.8L654.9 485.7L656.2 485.2L657.4 484.7L658.8 484.3L660.1 483.8L661.3 483.5L661.5 483.4L662.9 483.0L664.3 482.6L665.8 482.3L666.3 482.1L667.3 481.9L668.8 481.6L670.4 481.3L670.6 481.3L672.0 481.0L673.6 480.8L674.6 480.7L675.3 480.6L677.0 480.4L678.2 480.2L678.8 480.2L680.5 480.0L681.7 479.9L682.3 479.9L684.2 479.7L685.1 479.7L686.0 479.6L687.9 479.6L688.3 479.5L689.8 479.5L691.5 479.4L691.7 479.4L693.7 479.3L694.7 479.3L695.6 479.3L697.5 479.2L697.9 479.1L699.3 479.1L701.1 478.9L701.3 478.9L702.9 478.7L704.4 478.4L705.4 478.1L705.9 478.0L707.0 477.5L707.9 476.8L708.1 476.4L708.4 475.8L708.6 474.6L708.6 474.1L708.5 473.2L708.3 472.4L708.1 471.7L707.8 470.7L707.6 470.0L707.3 469.1L707.1 468.4L706.8 467.4L706.6 466.8L706.4 465.7L706.2 465.2L706.0 464.0L706.0 463.7L705.9 462.4L705.9 462.1L705.9 461.1L706.0 460.0L706.0 459.8L706.3 458.7L706.7 457.7L706.8 457.6L707.3 456.7L707.9 455.8L708.6 455.0L709.5 454.2L710.4 453.5L711.7 454.4L713.2 455.5L714.7 456.5L716.3 457.5L717.8 458.6L719.3 459.6L720.8 460.6L722.3 461.7L723.8 462.7L725.3 463.7L726.8 464.7L728.4 465.7L729.9 466.7L731.4 467.7L732.9 468.7L734.4 469.7L735.9 470.7L737.4 471.6L739.0 472.6L740.5 473.6L742.0 474.6L743.5 475.5L745.0 476.5L746.5 477.4L748.0 478.4L749.6 479.3L751.1 480.3L752.6 481.2L754.1 482.1L755.6 483.1L757.1 484.0L758.6 484.9L760.2 485.8L761.7 486.7L763.2 487.7L764.7 488.5L763.6 489.2L762.4 489.7L761.2 490.2L759.8 490.6L758.4 491.0L757.6 491.2L756.9 491.4L755.4 491.7L753.9 492.1L753.0 492.3L752.4 492.4L751.1 492.8L749.8 493.4L748.9 494.1L748.3 495.0L748.4 495.3L748.4 496.4L748.7 497.0L749.4 498.3L749.5 498.5L750.5 499.8L751.6 501.0L751.6 501.1L752.8 502.3L754.0 503.4L755.2 504.6L755.5 504.8L756.5 505.8L757.8 506.9L759.1 508.0L760.4 509.1L761.5 510.0L761.7 510.2L763.0 511.3L764.4 512.4L765.7 513.5L767.1 514.6L768.4 515.6L768.3 515.8L767.3 516.7L766.3 517.6L765.3 518.6L764.3 519.5L763.3 520.4L762.3 521.3L761.2 522.3L760.2 523.2L759.2 524.1L758.2 525.0L757.2 525.9L756.2 526.8L755.2 527.7L754.2 528.6L753.2 529.5L752.2 530.4L751.2 531.2L750.2 532.1L749.2 533.0L748.2 533.8L747.2 534.7L746.2 535.5L745.2 536.3L744.1 537.1L743.1 537.9L742.1 538.7L741.1 539.5L740.1 540.3L739.1 541.1L738.1 541.9L737.1 542.6L736.1 543.4L735.1 544.1L734.1 544.8L733.1 545.6L732.1 546.3L731.1 547.0L730.1 547.7L729.1 548.3L728.1 549.0L727.1 549.7L726.0 550.3L725.0 551.0L724.0 551.6L723.0 552.2L722.0 552.9L721.0 553.5L720.0 554.1L719.0 554.6L718.0 555.2L717.0 555.8L716.0 556.4L715.0 556.9L714.0 557.5L713.0 558.0L712.0 558.5L711.0 559.0L710.0 559.5L708.9 560.0L707.9 560.5L706.9 561.0L705.9 561.5L704.9 562.0L703.9 562.4L702.9 562.9L701.9 563.3L700.9 563.8L699.9 564.2L698.9 564.6L697.9 565.0L696.9 565.4L695.9 565.8L694.9 566.2L693.9 566.6L692.9 567.0L691.8 567.4L690.8 567.7L689.8 568.1L688.8 568.5L687.8 568.8L686.8 569.2L686.7 569.2L685.2 568.2L683.7 567.3L682.2 566.3L680.7 565.3L679.2 564.3L678.1 563.5L677.7 563.3L676.3 562.2L674.8 561.2L673.4 560.2L672.0 559.2L670.5 558.1L669.1 557.1L667.7 556.0L666.3 555.0L665.0 553.9L663.6 552.8L663.5 552.8L662.2 551.8L660.9 550.7L659.6 549.6L658.2 548.5L656.9 547.4L656.3 546.8L655.6 546.2L654.4 545.1L653.1 544.0L651.8 542.8L651.2 542.2L650.6 541.7L649.4 540.5L648.2 539.3L647.4 538.4L647.0 538.1L645.9 536.9L644.8 535.6L644.3 535.2L643.7 534.4L642.6 533.1L641.9 532.3L641.5 531.8L640.5 530.5L639.9 529.7L639.6 529.2L638.6 527.8L638.3 527.3L637.7 526.5L636.9 525.1L636.9 525.1L636.1 523.6L635.8 523.1L635.3 522.1L634.9 521.2L634.7 520.6L634.2 519.5L634.1 519.0L633.7 517.8L633.6 517.4L633.3 516.2L633.1 515.7L633.0 514.7L632.9 513.9L632.8 513.3L632.7 512.0L632.7 511.9L632.7 510.6L632.7 510.0L632.8 509.4L632.9 508.2L633.0 507.9L633.2 507.0L633.4 505.9L633.5 505.6L633.8 504.8L634.2 503.7L634.5 503.0L634.6 502.7L635.1 501.7L635.7 500.8L636.2 499.9L636.2 499.8L636.9 498.9L637.5 498.1L638.2 497.2L639.0 496.4L639.6 495.7Z" fill="#00f000" fill-rule="evenodd"/>
<path d="M649.9 502.1L650.6 501.3L651.5 500.6L652.3 499.8L653.2 499.1L654.2 498.4L655.2 497.7L656.2 497.1L657.2 496.4L658.3 495.8L659.5 495.3L660.6 494.7L661.9 494.2L662.3 494.0L663.1 493.7L664.4 493.2L665.7 492.8L667.1 492.3L668.3 492.0L668.5 492.0L670.0 491.6L671.5 491.3L672.9 491.0L673.1 491.0L674.7 490.7L676.4 490.5L676.8 490.4L678.1 490.3L679.9 490.1L680.3 490.1L681.7 490.0L683.5 489.9L683.6 489.9L685.6 489.9L686.6 489.9L687.7 489.9L689.5 490.0L689.8 490.0L692.1 490.1L692.2 490.1L694.4 490.3L694.9 490.4L696.9 490.6L697.4 490.7L699.4 491.0L699.9 491.0L702.2 491.4L702.3 491.4L704.6 491.9L705.1 492.0L706.9 492.4L708.2 492.7L709.1 492.9L711.2 493.5L711.6 493.6L713.3 494.1L715.3 494.7L715.3 494.7L717.4 495.3L719.3 496.0L719.6 496.1L721.2 496.7L723.1 497.5L724.6 498.1L725.0 498.2L726.8 499.0L728.6 499.8L730.4 500.6L731.2 501.0L732.1 501.4L733.8 502.3L735.5 503.1L737.2 504.0L738.8 504.9L740.4 505.8L742.0 506.7L742.7 507.1L743.6 507.7L745.2 508.6L746.8 509.5L748.3 510.5L749.9 511.5L751.4 512.4L752.9 513.4L754.4 514.4L755.9 515.4L757.4 516.4L758.9 517.4L760.4 518.4L761.8 519.4L763.3 520.4L763.3 520.4L762.3 521.3L761.2 522.3L760.2 523.2L759.2 524.1L758.2 525.0L757.2 525.9L756.2 526.8L755.2 527.7L754.2 528.6L753.2 529.5L752.2 530.4L751.2 531.2L750.2 532.1L749.2 533.0L748.2 533.8L747.2 534.7L746.2 535.5L745.2 536.3L744.1 537.1L743.1 537.9L742.1 538.7L741.1 539.5L740.1 540.3L739.1 541.1L738.1 541.9L737.1 542.6L736.1 543.4L735.1 544.1L734.1 544.8L733.1 545.6L732.1 546.3L731.1 547.0L730.1 547.7L729.1 548.3L728.1 549.0L727.1 549.7L726.0 550.3L725.0 551.0L724.0 551.6L723.0 552.2L722.0 552.9L721.0 553.5L720.0 554.1L719.0 554.6L718.0 555.2L717.0 555.8L716.0 556.4L715.0 556.9L714.0 557.5L713.0 558.0L712.0 558.5L711.0 559.0L710.0 559.5L708.9 560.0L707.9 560.5L706.9 561.0L705.9 561.5L704.9 562.0L703.9 562.4L702.9 562.9L701.9 563.3L700.9 563.8L699.9 564.2L698.9 564.6L697.9 565.0L696.9 565.4L695.9 565.8L694.9 566.2L693.9 566.6L692.9 567.0L691.8 567.4L691.2 567.6L689.7 566.6L688.2 565.6L686.7 564.6L685.3 563.6L683.8 562.6L682.4 561.6L680.9 560.6L679.5 559.5L678.1 558.5L676.7 557.5L676.1 557.1L675.3 556.4L673.9 555.3L672.5 554.3L671.2 553.2L669.8 552.1L668.5 551.0L667.7 550.3L667.2 549.9L665.9 548.8L664.6 547.6L663.4 546.5L662.4 545.6L662.1 545.3L660.9 544.1L659.7 543.0L658.5 541.8L658.5 541.8L657.4 540.6L656.2 539.3L655.5 538.5L655.1 538.1L654.1 536.8L653.1 535.6L653.0 535.5L652.0 534.2L651.1 533.1L651.0 532.9L650.1 531.5L649.6 530.7L649.2 530.2L648.3 528.7L648.3 528.6L647.6 527.3L647.2 526.6L646.8 525.8L646.4 524.7L646.2 524.3L645.7 523.0L645.6 522.7L645.2 521.4L645.1 521.0L644.8 519.8L644.7 519.3L644.5 518.3L644.4 517.5L644.4 516.9L644.3 515.6L644.3 515.6L644.4 514.3L644.4 513.6L644.5 513.1L644.7 511.9L644.8 511.4L644.9 510.7L645.3 509.6L645.5 508.9L645.7 508.6L646.1 507.6L646.6 506.6L646.9 506.0L647.2 505.6L647.8 504.7L648.4 503.8L649.1 503.0L649.8 502.2Z" fill="#ffff00" fill-rule="evenodd"/>
<path d="M660.1 510.1L660.9 509.3L661.6 508.5L662.4 507.7L663.3 507.0L664.2 506.2L665.2 505.6L666.2 504.9L667.3 504.3L668.5 503.7L669.6 503.2L670.9 502.7L672.1 502.2L673.5 501.7L673.7 501.7L674.9 501.3L676.3 501.0L677.8 500.6L678.5 500.5L679.4 500.3L681.1 500.1L682.4 499.9L682.8 499.9L684.5 499.7L685.8 499.6L686.4 499.6L688.4 499.6L688.9 499.6L690.4 499.6L691.9 499.6L692.5 499.6L694.6 499.8L694.8 499.8L697.2 500.0L697.3 500.0L699.7 500.3L699.8 500.3L702.2 500.7L702.3 500.7L704.5 501.2L705.2 501.3L706.8 501.6L708.3 502.0L709.0 502.2L711.2 502.7L711.6 502.8L713.3 503.3L715.3 503.9L715.4 503.9L717.4 504.6L719.4 505.2L719.5 505.3L721.3 505.9L723.2 506.7L724.3 507.1L725.1 507.4L726.9 508.2L728.8 508.9L730.2 509.5L730.5 509.7L732.3 510.5L734.1 511.4L735.8 512.2L737.5 513.1L738.1 513.4L739.2 513.9L740.8 514.8L742.5 515.7L744.1 516.6L745.7 517.5L747.3 518.4L748.9 519.4L750.4 520.3L752.0 521.3L753.5 522.2L755.0 523.2L756.5 524.2L758.0 525.2L757.2 525.9L756.2 526.8L755.2 527.7L754.2 528.6L753.2 529.5L752.2 530.4L751.2 531.2L750.2 532.1L749.2 533.0L748.2 533.8L747.2 534.7L746.2 535.5L745.2 536.3L744.1 537.1L743.1 537.9L742.1 538.7L741.1 539.5L740.1 540.3L739.1 541.1L738.1 541.9L737.1 542.6L736.1 543.4L735.1 544.1L734.1 544.8L733.1 545.6L732.1 546.3L731.1 547.0L730.1 547.7L729.1 548.3L728.1 549.0L727.1 549.7L726.0 550.3L725.0 551.0L724.0 551.6L723.0 552.2L722.0 552.9L721.0 553.5L720.0 554.1L719.0 554.6L718.0 555.2L717.0 555.8L716.0 556.4L715.0 556.9L714.0 557.5L713.0 558.0L712.0 558.5L711.0 559.0L710.0 559.5L708.9 560.0L707.9 560.5L706.9 561.0L705.9 561.5L704.9 562.0L703.9 562.4L702.9 562.9L701.9 563.3L700.9 563.8L699.9 564.2L698.9 564.6L697.9 565.0L696.9 565.4L696.3 565.7L694.7 564.7L693.3 563.7L691.8 562.7L690.3 561.7L688.9 560.7L687.4 559.6L686.0 558.6L684.6 557.6L683.2 556.5L682.9 556.2L681.8 555.4L680.5 554.3L679.2 553.2L677.8 552.1L676.5 551.0L675.7 550.3L675.3 549.9L674.0 548.8L672.8 547.6L671.5 546.4L671.1 546.0L670.3 545.2L669.2 544.0L668.0 542.8L667.8 542.6L666.9 541.6L665.8 540.3L665.2 539.6L664.8 539.0L663.8 537.7L663.2 537.0L662.8 536.4L661.9 535.0L661.6 534.6L661.0 533.7L660.3 532.5L660.1 532.2L659.4 530.8L659.2 530.5L658.6 529.3L658.4 528.6L658.0 527.7L657.7 526.9L657.5 526.1L657.2 525.3L657.0 524.4L656.9 523.7L656.7 522.7L656.7 522.3L656.6 520.9L656.6 520.8L656.6 519.6L656.6 518.8L656.7 518.4L656.8 517.2L657.0 516.6L657.1 516.0L657.5 514.9L657.8 514.1L657.9 513.9L658.3 512.9L658.9 511.9L659.5 511.0L659.5 511.0Z" fill="#d0c800" fill-rule="evenodd"/>
<path d="M674.1 516.6L674.9 515.8L675.8 515.1L676.8 514.4L677.8 513.7L678.9 513.2L680.1 512.6L680.3 512.5L681.3 512.1L682.6 511.6L684.0 511.2L685.5 510.9L685.9 510.8L687.0 510.6L688.7 510.3L689.9 510.2L690.4 510.1L692.2 510.0L693.2 509.9L694.1 509.9L696.2 509.9L696.3 509.9L698.3 510.0L699.1 510.0L700.6 510.2L701.7 510.3L703.1 510.4L704.2 510.6L705.7 510.8L706.7 511.0L708.5 511.3L709.0 511.4L711.2 511.9L711.6 512.0L713.4 512.5L715.0 512.9L715.5 513.1L717.6 513.7L718.8 514.1L719.6 514.3L721.6 515.0L723.2 515.6L723.5 515.7L725.4 516.4L727.3 517.2L728.4 517.6L729.1 517.9L730.9 518.7L732.7 519.5L734.4 520.4L735.2 520.7L736.2 521.2L737.9 522.0L739.5 522.9L741.2 523.8L742.8 524.7L744.4 525.6L746.0 526.5L747.6 527.5L749.1 528.4L750.7 529.4L752.2 530.4L751.2 531.2L750.2 532.1L749.2 533.0L748.2 533.8L747.2 534.7L746.2 535.5L745.2 536.3L744.1 537.1L743.1 537.9L742.1 538.7L741.1 539.5L740.1 540.3L739.1 541.1L738.1 541.9L737.1 542.6L736.1 543.4L735.1 544.1L734.1 544.8L733.1 545.6L732.1 546.3L731.1 547.0L730.1 547.7L729.1 548.3L728.1 549.0L727.1 549.7L726.0 550.3L725.0 551.0L724.0 551.6L723.0 552.2L722.0 552.9L721.0 553.5L720.0 554.1L719.0 554.6L718.0 555.2L717.0 555.8L716.0 556.4L715.0 556.9L714.0 557.5L713.0 558.0L712.0 558.5L711.0 559.0L710.0 559.5L708.9 560.0L707.9 560.5L706.9 561.0L705.9 561.5L704.9 562.0L703.9 562.4L702.9 562.9L702.0 563.3L700.5 562.3L699.0 561.3L697.5 560.3L696.1 559.3L694.7 558.2L693.3 557.2L691.9 556.1L690.5 555.0L689.2 553.9L688.5 553.4L687.9 552.8L686.6 551.7L685.3 550.6L684.1 549.4L683.3 548.7L682.8 548.3L681.7 547.1L680.5 545.9L679.9 545.2L679.4 544.6L678.3 543.4L677.4 542.3L677.2 542.1L676.2 540.8L675.5 539.7L675.3 539.4L674.4 538.1L674.0 537.4L673.5 536.7L672.8 535.4L672.7 535.2L672.0 533.7L671.9 533.5L671.4 532.1L671.2 531.7L670.8 530.5L670.7 530.1L670.4 528.8L670.4 528.6L670.2 527.2L670.2 527.0L670.2 525.8L670.2 525.0L670.2 524.6L670.4 523.4L670.5 522.9L670.7 522.2L671.0 521.2L671.4 520.3L671.5 520.1L672.0 519.2L672.6 518.3L673.3 517.4L674.0 516.6Z" fill="#ffa500" fill-rule="evenodd"/>
<path d="M688.1 528.3L688.7 527.4L689.5 526.6L690.3 525.8L691.3 525.1L692.3 524.5L693.5 523.9L694.7 523.4L696.1 523.0L696.6 522.9L697.6 522.7L699.2 522.4L700.6 522.3L701.0 522.2L702.9 522.1L703.8 522.1L704.9 522.1L706.6 522.2L707.1 522.3L709.2 522.5L709.5 522.5L711.7 522.8L712.2 522.9L714.0 523.3L715.1 523.5L716.3 523.8L718.4 524.3L718.4 524.3L720.5 524.9L722.3 525.5L722.5 525.6L724.5 526.3L726.4 527.0L726.9 527.2L728.2 527.7L730.1 528.5L731.9 529.3L733.2 529.9L733.6 530.1L735.3 531.0L737.0 531.9L738.6 532.8L740.2 533.7L741.8 534.6L743.4 535.5L744.9 536.5L744.1 537.1L743.1 537.9L742.1 538.7L741.1 539.5L740.1 540.3L739.1 541.1L738.1 541.9L737.1 542.6L736.1 543.4L735.1 544.1L734.1 544.8L733.1 545.6L732.1 546.3L731.1 547.0L730.1 547.7L729.1 548.3L728.1 549.0L727.1 549.7L726.0 550.3L725.0 551.0L724.0 551.6L723.0 552.2L722.0 552.9L721.0 553.5L720.0 554.1L719.0 554.6L718.0 555.2L717.0 555.8L716.0 556.4L715.0 556.9L714.0 557.5L713.0 558.0L712.0 558.5L711.0 559.0L710.0 559.5L709.2 559.9L707.7 558.9L706.3 557.9L704.8 556.9L703.4 555.8L702.0 554.8L700.7 553.7L699.4 552.6L699.4 552.6L698.1 551.4L696.9 550.3L695.7 549.1L695.1 548.5L694.5 547.9L693.4 546.7L692.4 545.5L692.3 545.4L691.3 544.1L690.5 542.9L690.4 542.7L689.5 541.3L689.2 540.8L688.7 539.9L688.2 538.8L688.0 538.4L687.5 537.1L687.4 536.8L687.1 535.5L687.0 535.1L686.9 534.1L686.8 533.2L686.8 532.7L686.9 531.5L687.0 531.1L687.2 530.3L687.6 529.3L688.0 528.5Z" fill="#ff0000" fill-rule="evenodd"/>
<path d="M717.3 545.9L717.5 544.7L718.3 543.9L719.5 543.4L721.3 543.2L721.7 543.3L723.7 543.5L724.2 543.6L726.2 544.2L727.6 544.7L728.1 544.9L729.8 545.8L731.4 546.7L731.1 547.0L730.1 547.7L729.1 548.3L728.1 549.0L727.1 549.7L726.0 550.3L725.0 551.0L724.0 551.6L723.0 552.2L722.7 552.4L721.3 551.4L719.9 550.3L719.6 550.0L718.8 549.1L717.8 547.7L717.7 547.5L717.3 546.1Z" fill="#b30000" fill-rule="evenodd"/>
<path d="M545.6 497.3 L666.7 575.5 L666.7 652.7 L545.8 574.5Z" fill="#00008c" />
<path d="M666.7 595.6 L662.6 593.1 L658.6 590.8 L654.5 588.6 L650.6 586.6 L646.8 584.8 L643.1 583.2 L639.5 581.8 L636.1 580.5 L632.9 579.5 L629.9 578.8 L627.1 578.2 L624.6 577.9 L622.3 577.8 L620.3 577.9 L618.6 578.3 L617.2 578.9 L616.1 579.8 L615.3 580.8 L614.8 582.1 L614.6 583.6 L614.8 585.2 L615.3 587.1 L616.1 589.1 L617.2 591.3 L618.6 593.7 L620.3 596.2 L622.3 598.8 L624.6 601.5 L627.1 604.3 L629.9 607.2 L632.9 610.1 L636.1 613.0 L639.5 616.0 L643.1 619.0 L646.8 621.9 L650.6 624.8 L654.5 627.7 L658.6 630.5 L662.6 633.1 L666.7 635.7Z" fill="#0000f5" />
<path d="M667.2 576 Q663.5 614 667 652.5" fill="none" stroke="#ffffff" stroke-width="1.6"/>
<path d="M668.6 577 Q665.5 614 668.5 652" fill="none" stroke="#b0b0b0" stroke-width="0.7"/>
<path d="M549.3 571.5 L549.1 503.3 L665.2 581.5 L665.2 586.5" fill="none" stroke="#c8c8d8" stroke-width="0.6" stroke-dasharray="2 1.5"/>
<path d="M553.6 499.3 L664.3 425.2" fill="none" stroke="#c8c8d8" stroke-width="0.6" stroke-dasharray="2 1.5"/>
<path d="M548.4 581.0L552.2 578.6L555.2 582.2L551.4 584.6Z" fill="#1cc81c"/>
<path d="M560.5 588.9L564.3 586.5L567.3 590.1L563.5 592.5Z" fill="#1cc81c"/>
<path d="M572.6 596.8L576.4 594.4L579.4 598.0L575.6 600.4Z" fill="#1cc81c"/>
<path d="M584.7 604.7L588.5 602.3L591.5 605.9L587.7 608.3Z" fill="#1cc81c"/>
<path d="M596.8 612.6L600.6 610.2L603.6 613.8L599.8 616.2Z" fill="#1cc81c"/>
<path d="M608.9 620.5L612.7 618.1L615.7 621.7L611.9 624.1Z" fill="#1cc81c"/>
<path d="M621.0 628.4L624.8 626.0L627.8 629.6L624.0 632.0Z" fill="#1cc81c"/>
<path d="M633.1 636.3L636.9 633.9L639.9 637.5L636.1 639.9Z" fill="#1cc81c"/>
<path d="M645.2 644.2L649.0 641.8L652.0 645.4L648.2 647.8Z" fill="#1cc81c"/>
<path d="M657.3 652.1L661.1 649.7L664.1 653.3L660.3 655.7Z" fill="#1cc81c"/>
<path d="M766.8 470.1 L787.2 456.6 L807.8 486.1 L803.7 487.1 L799.6 488.0 L795.5 488.8 L791.5 489.6 L787.4 490.4Z" fill="#0a7fd8" />
<path d="M787.2 456.6 L812.3 439.9 L832.9 477.0 L827.9 479.3 L822.9 481.3 L817.8 483.1 L812.8 484.7 L807.8 486.1Z" fill="#00c4c8" />
<path d="M812.3 439.9 L836.3 424.1 L856.9 461.8 L852.1 465.4 L847.3 468.7 L842.5 471.7 L837.7 474.5 L832.9 477.0Z" fill="#00b878" />
<path d="M836.3 424.1 L859.1 409.0 L879.6 441.2 L875.1 445.7 L870.5 450.1 L866.0 454.2 L861.4 458.1 L856.9 461.8Z" fill="#00c4c8" />
<path d="M859.1 409.0 L874.6 398.6 L895.2 424.5 L892.1 427.9 L889.0 431.3 L885.9 434.7 L882.8 438.0 L879.6 441.2Z" fill="#0a7fd8" />
<path d="M871.9 402.2 L887.9 389.8 L913.4 407.5 L911.9 419.7 L898.1 430.5 L883.5 411.0Z" fill="#0000d0" />
<path d="M883.5 411.0 L898.1 430.5 L880.0 439.0 L868.0 420.0Z" fill="#0a7fd8" />
<path d="M857.3 461.9 L909.0 423.0 L906.8 494.5Z" fill="#00008c" />
<path d="M875.0 447.5 L909.0 423.0 L907.5 470.0Z" fill="#0000f5" />
<path d="M903.0 426.0 L909.0 423.0 L907.5 494.0Z" fill="#0096ff" />
<path d="M861.2 472.0L865.0 469.6L868.0 473.2L864.2 475.6Z" fill="#1cc81c"/>
<path d="M872.9 479.3L876.7 476.9L879.7 480.5L875.9 482.9Z" fill="#1cc81c"/>
<path d="M884.5 486.6L888.3 484.2L891.3 487.8L887.5 490.2Z" fill="#1cc81c"/>
<path d="M896.9 494.6L900.7 492.2L903.7 495.8L899.9 498.2Z" fill="#1cc81c"/>
<path d="M545.6 497.3 L666.3 418.2" stroke="#0000c0" stroke-width="1"/>
<path d="M666.3 405.2 L786.1 325.8" stroke="#555" stroke-width="0.7"/>
<path d="M666.3 405.2 L787.4 483.4 M666.3 418.2 L787.4 496.4 M669.7 572.5 L784.4 499.4 M545.6 497.3 L666.7 575.5" stroke="#1a1a1a" stroke-width="0.6" fill="none"/>
<path d="M786.1 324.8 L889.0 388.5 L886.6 392.0 L785.1 327.8Z" fill="#0000e0" />
<path d="M676.3 411.2 L784.1 335.8" stroke="#c0c0c0" stroke-width="0.6" stroke-dasharray="2 1.5" fill="none"/>
<path d="M723.2 384 V367.5" stroke="#b0b0b0" stroke-width="0.6"/>
<path d="M908.1 405.6 L909.8 407.2 L911.5 408.8 L913.1 410.3 L914.8 411.9 L916.5 413.4 L918.2 414.9 L919.8 416.4" stroke="#0000f5" stroke-width="4.5" fill="none" stroke-linecap="butt"/>
<path d="M919.8 416.4 L921.2 417.6 L922.5 418.8 L923.9 420.0 L925.2 421.1 L926.5 422.3 L927.9 423.4 L929.2 424.6" stroke="#0096ff" stroke-width="4.5" fill="none" stroke-linecap="butt"/>
<path d="M929.2 424.6 L930.7 425.8 L932.3 427.1 L933.8 428.3 L935.3 429.6 L936.8 430.8 L938.3 432.0 L939.8 433.2" stroke="#00f0f0" stroke-width="4.5" fill="none" stroke-linecap="butt"/>
<path d="M939.8 433.2 L941.5 434.5 L943.2 435.8 L944.8 437.1 L946.5 438.4 L948.2 439.6 L949.9 440.8 L951.5 442.1" stroke="#00e090" stroke-width="4.5" fill="none" stroke-linecap="butt"/>
<path d="M951.5 442.1 L955.4 444.8 L959.3 447.5 L963.1 450.1 L967.0 452.7 L970.8 455.1 L974.7 457.5 L978.5 459.8" stroke="#00f000" stroke-width="4.5" fill="none" stroke-linecap="butt"/>
<path d="M978.5 459.8 L980.9 461.1 L983.2 462.5 L985.6 463.8 L987.9 465.0 L990.3 466.3 L992.6 467.5 L995.0 468.7" stroke="#00e090" stroke-width="4.5" fill="none" stroke-linecap="butt"/>
<path d="M995.0 468.7 L996.8 469.6 L998.7 470.5 L1000.5 471.4 L1002.4 472.2 L1004.2 473.1 L1006.0 473.9 L1007.9 474.7" stroke="#00f0f0" stroke-width="4.5" fill="none" stroke-linecap="butt"/>
<path d="M1007.9 474.7 L1009.1 475.2 L1010.2 475.7 L1011.4 476.2 L1012.6 476.7 L1013.8 477.2 L1014.9 477.6 L1016.1 478.1" stroke="#0096ff" stroke-width="4.5" fill="none" stroke-linecap="butt"/>
<path d="M1016.1 478.1 L1017.4 478.6 L1018.8 479.1 L1020.1 479.6 L1021.5 480.1 L1022.8 480.6 L1024.2 481.0 L1025.5 481.5" stroke="#00008c" stroke-width="4.5" fill="none" stroke-linecap="butt"/>
<path d="M908.1 405.6 L1025.5 481.5" stroke="#8cc6f2" stroke-width="0.9" fill="none"/>
<path d="M868.3 432.0 L986.0 508.0" stroke="#8cc6f2" stroke-width="0.9" fill="none"/>
<path d="M828.4 458.0 L945.6 534.5" stroke="#8cc6f2" stroke-width="0.9" fill="none"/>
<path d="M787.6 484.6 L905.3 560.5" stroke="#8cc6f2" stroke-width="0.9" fill="none"/>
<path d="M868.3 432.0 L869.6 433.5 L871.0 434.9 L872.3 436.3 L873.7 437.7 L875.0 439.1 L876.4 440.5 L877.7 441.9" stroke="#00f000" stroke-width="5" fill="none" stroke-linecap="butt"/>
<path d="M877.7 441.9 L879.7 443.9 L881.8 445.9 L883.8 447.9 L885.8 449.9 L887.8 451.8 L889.8 453.7 L891.8 455.5" stroke="#ffff00" stroke-width="5" fill="none" stroke-linecap="butt"/>
<path d="M891.8 455.5 L893.5 457.0 L895.2 458.5 L896.9 460.0 L898.6 461.5 L900.2 462.9 L901.9 464.3 L903.6 465.7" stroke="#d0c800" stroke-width="5" fill="none" stroke-linecap="butt"/>
<path d="M903.6 465.7 L910.3 471.1 L917.1 476.1 L923.8 480.8 L930.5 485.1 L937.2 489.1 L944.0 492.8 L950.7 496.1" stroke="#e89a00" stroke-width="5" fill="none" stroke-linecap="butt"/>
<path d="M950.7 496.1 L952.7 497.1 L954.7 498.0 L956.7 498.8 L958.8 499.7 L960.8 500.5 L962.8 501.2 L964.8 502.0" stroke="#d0c800" stroke-width="5" fill="none" stroke-linecap="butt"/>
<path d="M964.8 502.0 L966.2 502.5 L967.5 502.9 L968.8 503.4 L970.2 503.8 L971.5 504.3 L972.9 504.7 L974.2 505.1" stroke="#ffff00" stroke-width="5" fill="none" stroke-linecap="butt"/>
<path d="M974.2 505.1 L975.9 505.6 L977.6 506.0 L979.3 506.5 L981.0 506.9 L982.6 507.3 L984.3 507.6 L986.0 508.0" stroke="#00f000" stroke-width="5" fill="none" stroke-linecap="butt"/>
<path d="M828.4 458.0 L829.7 459.5 L831.1 460.9 L832.4 462.3 L833.8 463.8 L835.1 465.2 L836.4 466.6 L837.8 467.9" stroke="#00f000" stroke-width="5" fill="none" stroke-linecap="butt"/>
<path d="M837.8 467.9 L839.8 470.0 L841.8 472.0 L843.8 474.0 L845.8 475.9 L847.8 477.9 L849.8 479.8 L851.8 481.6" stroke="#ffff00" stroke-width="5" fill="none" stroke-linecap="butt"/>
<path d="M851.8 481.6 L853.5 483.1 L855.2 484.7 L856.9 486.1 L858.5 487.6 L860.2 489.0 L861.9 490.5 L863.6 491.9" stroke="#d0c800" stroke-width="5" fill="none" stroke-linecap="butt"/>
<path d="M863.6 491.9 L866.9 494.6 L870.3 497.3 L873.6 499.8 L877.0 502.3 L880.3 504.7 L883.7 507.0 L887.0 509.2" stroke="#e89a00" stroke-width="5" fill="none" stroke-linecap="butt"/>
<path d="M887.0 509.2 L888.0 509.9 L889.0 510.5 L890.0 511.2 L891.0 511.8 L892.0 512.4 L893.0 513.0 L894.0 513.7" stroke="#ff0000" stroke-width="5" fill="none" stroke-linecap="butt"/>
<path d="M894.0 513.7 L897.4 515.6 L900.7 517.5 L904.1 519.3 L907.4 521.0 L910.8 522.6 L914.1 524.2 L917.5 525.6" stroke="#e89a00" stroke-width="5" fill="none" stroke-linecap="butt"/>
<path d="M917.5 525.6 L919.1 526.3 L920.8 527.0 L922.5 527.6 L924.2 528.3 L925.8 528.9 L927.5 529.5 L929.2 530.1" stroke="#d0c800" stroke-width="5" fill="none" stroke-linecap="butt"/>
<path d="M929.2 530.1 L930.2 530.4 L931.2 530.7 L932.2 531.0 L933.2 531.3 L934.2 531.6 L935.2 531.9 L936.2 532.2" stroke="#ffff00" stroke-width="5" fill="none" stroke-linecap="butt"/>
<path d="M936.2 532.2 L937.6 532.6 L938.9 532.9 L940.2 533.3 L941.6 533.6 L942.9 533.9 L944.3 534.2 L945.6 534.5" stroke="#00f000" stroke-width="5" fill="none" stroke-linecap="butt"/>
<path d="M1027.3 483.0 L1027.6 485.6 L1028.0 488.2 L1028.3 490.8 L1028.5 493.4 L1028.8 496.0 L1029.1 498.6 L1029.3 501.2" stroke="#00008c" stroke-width="7.5" fill="none" stroke-linecap="butt"/>
<path d="M1029.3 501.2 L1029.4 503.1 L1029.6 505.1 L1029.7 507.1 L1029.8 509.0 L1029.9 510.9 L1030.0 512.9 L1030.1 514.9" stroke="#0000c8" stroke-width="7.5" fill="none" stroke-linecap="butt"/>
<path d="M1030.1 514.9 L1030.2 516.1 L1030.2 517.5 L1030.3 518.8 L1030.3 520.0 L1030.4 521.4 L1030.4 522.6 L1030.4 524.0" stroke="#0000f5" stroke-width="7.5" fill="none" stroke-linecap="butt"/>
<path d="M1030.4 524.0 L1030.4 531.1 L1030.3 538.2 L1030.1 545.4 L1029.7 552.5 L1029.1 559.7 L1028.4 566.9 L1027.6 574.0" stroke="#00008c" stroke-width="7.5" fill="none" stroke-linecap="butt"/>
<path d="M905.3 560.5 L907.0 559.7 L908.7 558.9 L910.5 558.1 L912.2 557.3 L913.9 556.4 L915.6 555.6 L917.3 554.8" stroke="#00008c" stroke-width="5.2" fill="none" stroke-linecap="butt"/>
<path d="M917.3 554.8 L919.0 553.9 L920.8 553.0 L922.5 552.2 L924.2 551.3 L925.9 550.4 L927.6 549.5 L929.3 548.5" stroke="#0000f5" stroke-width="5.2" fill="none" stroke-linecap="butt"/>
<path d="M929.3 548.5 L931.4 547.4 L933.5 546.3 L935.5 545.2 L937.6 544.0 L939.6 542.8 L941.7 541.6 L943.8 540.4" stroke="#0096ff" stroke-width="5.2" fill="none" stroke-linecap="butt"/>
<path d="M943.8 540.4 L950.3 536.6 L956.8 532.5 L963.3 528.3 L969.9 524.0 L976.4 519.6 L982.9 515.0 L989.4 510.2" stroke="#00e090" stroke-width="5.2" fill="none" stroke-linecap="butt"/>
<path d="M989.4 510.2 L991.2 509.0 L992.9 507.7 L994.6 506.4 L996.3 505.1 L998.0 503.8 L999.7 502.5 L1001.5 501.1" stroke="#00f0f0" stroke-width="5.2" fill="none" stroke-linecap="butt"/>
<path d="M1001.5 501.1 L1003.2 499.8 L1004.9 498.5 L1006.6 497.1 L1008.3 495.7 L1010.0 494.3 L1011.8 493.0 L1013.5 491.6" stroke="#0096ff" stroke-width="5.2" fill="none" stroke-linecap="butt"/>
<path d="M1013.5 491.6 L1015.2 490.2 L1016.9 488.7 L1018.6 487.3 L1020.3 485.9 L1022.1 484.4 L1023.8 483.0 L1025.5 481.5" stroke="#0000f5" stroke-width="5.2" fill="none" stroke-linecap="butt"/>
<path d="M787.6 484.6 L789.6 486.4 L791.6 488.3 L793.7 490.1 L795.7 491.8 L797.7 493.6 L799.7 495.4 L801.7 497.1" stroke="#00f0f0" stroke-width="5.5" fill="none" stroke-linecap="butt"/>
<path d="M801.7 497.1 L803.4 498.5 L805.1 499.9 L806.8 501.3 L808.4 502.7 L810.1 504.1 L811.8 505.4 L813.5 506.8" stroke="#00e090" stroke-width="5.5" fill="none" stroke-linecap="butt"/>
<path d="M813.5 506.8 L815.7 508.5 L817.9 510.2 L820.1 511.9 L822.2 513.6 L824.4 515.2 L826.6 516.8 L828.8 518.4" stroke="#00f000" stroke-width="5.5" fill="none" stroke-linecap="butt"/>
<path d="M828.8 518.4 L832.2 520.9 L835.5 523.2 L838.9 525.5 L842.2 527.8 L845.6 530.0 L849.0 532.2 L852.3 534.3" stroke="#ffff00" stroke-width="5.5" fill="none" stroke-linecap="butt"/>
<path d="M852.3 534.3 L854.9 535.8 L857.4 537.3 L859.9 538.8 L862.4 540.3 L864.9 541.7 L867.5 543.1 L870.0 544.5" stroke="#00f000" stroke-width="5.5" fill="none" stroke-linecap="butt"/>
<path d="M870.0 544.5 L872.5 545.8 L875.0 547.1 L877.6 548.4 L880.1 549.6 L882.6 550.8 L885.1 552.0 L887.6 553.2" stroke="#00f0f0" stroke-width="5.5" fill="none" stroke-linecap="butt"/>
<path d="M887.6 553.2 L889.0 553.8 L890.3 554.4 L891.7 555.0 L893.0 555.6 L894.4 556.1 L895.7 556.7 L897.1 557.3" stroke="#0096ff" stroke-width="5.5" fill="none" stroke-linecap="butt"/>
<path d="M897.1 557.3 L898.2 557.8 L899.4 558.2 L900.6 558.7 L901.8 559.2 L902.9 559.6 L904.1 560.1 L905.3 560.5" stroke="#00008c" stroke-width="5.5" fill="none" stroke-linecap="butt"/>
<path d="M788.0 490.0 L788.4 491.5 L788.8 492.9 L789.1 494.4 L789.4 495.9 L789.8 497.4 L790.1 498.8 L790.4 500.3" stroke="#0000f5" stroke-width="9" fill="none" stroke-linecap="butt"/>
<path d="M790.4 500.3 L791.1 504.4 L791.8 508.4 L792.3 512.5 L792.7 516.5 L793.0 520.6 L793.2 524.6 L793.4 528.7" stroke="#0096ff" stroke-width="9" fill="none" stroke-linecap="butt"/>
<path d="M793.4 528.7 L793.4 532.0 L793.3 535.3 L793.2 538.7 L793.0 542.0 L792.7 545.3 L792.3 548.6 L791.9 551.9" stroke="#0000f5" stroke-width="9" fill="none" stroke-linecap="butt"/>
<path d="M791.9 551.9 L791.4 555.4 L790.8 558.8 L790.1 562.2 L789.4 565.7 L788.6 569.1 L787.7 572.6 L786.7 576.0" stroke="#00008c" stroke-width="9" fill="none" stroke-linecap="butt"/>
<path d="M905.3 561.0 L906.3 570.7 L907.0 580.3 L907.7 590.0 L908.1 599.7 L908.4 609.3 L908.5 619.0 L908.4 628.7" stroke="#0000e0" stroke-width="7.5" fill="none" stroke-linecap="butt"/>
<path d="M908.4 628.7 L908.4 632.4 L908.3 636.2 L908.1 640.0 L908.0 643.7 L907.8 647.5 L907.6 651.2 L907.4 655.0" stroke="#00008c" stroke-width="7.5" fill="none" stroke-linecap="butt"/>
<path d="M909 566 Q911.5 608 910 650" stroke="#8fb8ff" stroke-width="0.8" fill="none"/>
<path d="M765.0 473.5 L787.0 484.5 L789.0 501.0 L778.0 505.5 L765.0 502.0Z" fill="#00f0f0" />
<path d="M775.5 482.0 L783.5 485.5 L784.0 501.0 L776.0 503.0Z" fill="#0096ff" />
<path d="M766.5 470.5 L788.5 481.5 L788.5 487.0 L766.5 476.0Z" fill="#c00000" />
<path d="M783.0 482.0 L789.0 484.0 L789.0 500.5 L783.0 500.5Z" fill="#c00000" />
<path d="M782.7 579.5l4 -2.5l4 2.5l-4 2.5z" fill="#3ad23a"/>
<path d="M903.4 657.5l4 -2.5l4 2.5l-4 2.5z" fill="#3ad23a"/>
<path d="M1023.6 578.5l4 -2.5l4 2.5l-4 2.5z" fill="#3ad23a"/>
<circle cx="787.6" cy="484.6" r="2.2" fill="#fff" stroke="#1a6a6a" stroke-width="1"/>
<circle cx="828.4" cy="458.0" r="2.2" fill="#fff" stroke="#1a6a6a" stroke-width="1"/>
<circle cx="868.3" cy="432.0" r="2.2" fill="#fff" stroke="#1a6a6a" stroke-width="1"/>
<circle cx="908.1" cy="405.6" r="2.2" fill="#fff" stroke="#1a6a6a" stroke-width="1"/>
<circle cx="905.3" cy="560.5" r="2.2" fill="#fff" stroke="#1a6a6a" stroke-width="1"/>
<circle cx="945.6" cy="534.5" r="2.2" fill="#fff" stroke="#1a6a6a" stroke-width="1"/>
<circle cx="986.0" cy="508.0" r="2.2" fill="#fff" stroke="#1a6a6a" stroke-width="1"/>
<circle cx="1025.5" cy="481.5" r="2.2" fill="#fff" stroke="#1a6a6a" stroke-width="1"/>
<circle cx="545.6" cy="497.3" r="1.1" fill="#ff2020"/>
<circle cx="666.3" cy="405.2" r="1.1" fill="#ff2020"/>
<circle cx="666.3" cy="418.2" r="1.1" fill="#ff2020"/>
<circle cx="786.1" cy="325.8" r="1.1" fill="#ff2020"/>
<circle cx="666.7" cy="575.5" r="1.1" fill="#ff2020"/>
<circle cx="545.8" cy="574.5" r="1.1" fill="#ff2020"/>
<circle cx="666.7" cy="652.7" r="1.1" fill="#ff2020"/>
</svg>
<div class="a" style="left:10px;top:929px;width:25px;height:21px;background:#cce4f7"></div>
<div class="a" style="left:45px;top:929px;width:25px;height:21px;background:#cce4f7"></div>
<div class="a" style="left:73px;top:929px;width:25px;height:21px;background:#cce4f7"></div>
<svg class="a" style="left:14px;top:931px" width="17" height="17" viewBox="0 0 17 17"><circle cx="9.5" cy="7.5" r="5.5" fill="#5a5a5a"/><path d="M5 11L2.5 15.5L8 12.5Z" fill="#5a5a5a"/><text x="9.5" y="11" font-size="8.5" font-weight="bold" text-anchor="middle" fill="#f4f8fc" font-family="Liberation Sans">?</text></svg>
<svg class="a" style="left:45px;top:929px" width="25" height="21" viewBox="0 0 25 21"><path d="M4 10L8 7L13.5 7.5L14 13L9.5 16.5L4 15Z" fill="#1f8a2f"/><path d="M5 9.5L9 6.3L14 7L10 10Z" fill="#5cc060"/><path d="M6.5 12h1.6v1.6h-1.6zM9.8 10.5h1.5v1.5h-1.5zM7.5 14.3h1.5v1.5h-1.5zM11 13h1.3v1.3h-1.3z" fill="#b8f0b8"/><path d="M16 8L19.5 11.3L16 14.5Z" fill="#5c5c5c"/></svg>
<svg class="a" style="left:73px;top:929px" width="25" height="21" viewBox="0 0 25 21"><path d="M3.8 6H14L16 8V18H3.8Z" fill="#5c5c5c"/><rect x="6" y="7.3" width="7" height="4.2" fill="#cce4f7"/><rect x="7" y="8.8" width="5" height="1.2" fill="#5c5c5c"/><rect x="6.5" y="14" width="6" height="4" fill="#cce4f7"/><rect x="7.6" y="14.8" width="1.4" height="3.2" fill="#5c5c5c"/><path d="M11.5 4.5L16 2.3L20 4L20 8.5L15.5 10.7L11.5 9Z" fill="#1f8a2f"/><path d="M11.5 4.5L16 2.3L20 4L15.5 6.2Z" fill="#5cc060"/><path d="M13 6.5h1.5v1.5h-1.5zM16.5 6.2h1.3v1.3h-1.3zM14 8.5h1.3v1.3h-1.3z" fill="#b8f0b8"/></svg>
<div class="a" style="left:856px;top:930px;width:84px;height:21px;border:1px solid #cfcfcf;border-radius:4px;background:#fdfdfd"></div>
<div class="t" style="left:856px;top:933px;width:84px;text-align:center;font-size:11px;line-height:17px">Save and Show</div>
<div class="a" style="left:957px;top:930px;width:81px;height:21px;border:1px solid #0067c0;border-radius:4px;background:#fdfdfd"></div>
<div class="t" style="left:957px;top:933px;width:81px;text-align:center;font-size:11px;line-height:17px">OK</div>
<div class="a" style="left:1048px;top:930px;width:81px;height:21px;border:1px solid #cfcfcf;border-radius:4px;background:#fdfdfd"></div>
<div class="t" style="left:1048px;top:933px;width:81px;text-align:center;font-size:11px;line-height:17px">Cancel</div></body></html>
